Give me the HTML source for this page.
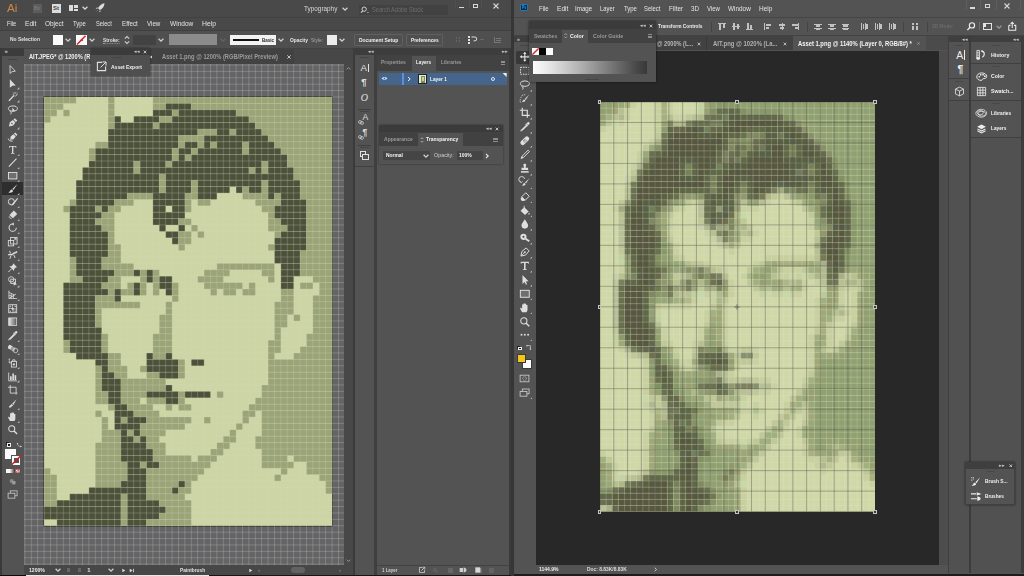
<!DOCTYPE html>
<html lang="en"><head><meta charset="utf-8"><title>Illustrator and Photoshop pixel art workspace</title>
<style>
html,body{margin:0;padding:0;background:#3a3a3a;}
#root{position:relative;width:1024px;height:576px;overflow:hidden;background:#494949;font-family:"Liberation Sans",sans-serif;}
.b{position:absolute;display:block;}
.ic{overflow:visible;}
.t{position:absolute;white-space:nowrap;transform-origin:0 50%;display:block;}
</style></head>
<body>
<div id="root">
<div class="b" style="left:0.00px;top:0.00px;width:511.00px;height:576.00px;background:#494949;"></div>
<div class="b" style="left:0.00px;top:17.00px;width:511.00px;height:0.80px;background:#424242;"></div>
<div class="b" style="left:0.00px;top:30.00px;width:511.00px;height:18.30px;background:#4f4f4f;"></div>
<div class="b" style="left:0.00px;top:29.60px;width:511.00px;height:0.80px;background:#404040;"></div>
<div class="b" style="left:0.00px;top:48.00px;width:511.00px;height:15.50px;background:#434343;"></div>
<span class="t" id="t1" style="left:7.00px;top:1.90px;font-size:11.5px;line-height:13.80px;color:#cf8844;font-weight:400;transform:scaleX(1.0200);">Ai</span>
<div class="b" style="left:32.50px;top:3.50px;width:9.00px;height:9.00px;background:#5c5c5c;"></div>
<span class="t" id="t2" style="left:34.00px;top:4.90px;font-size:5.5px;line-height:6.60px;color:#7a7a7a;font-weight:700;">Br</span>
<div class="b" style="left:51.50px;top:3.50px;width:9.00px;height:9.50px;background:#dcdcdc;"></div>
<span class="t" id="t3" style="left:53.00px;top:4.80px;font-size:6px;line-height:7.20px;color:#444;font-weight:700;">St</span>
<div class="b" style="left:69.00px;top:5.00px;width:3.80px;height:6.00px;background:#dcdcdc;"></div>
<div class="b" style="left:73.60px;top:5.00px;width:4.40px;height:2.50px;background:#dcdcdc;"></div>
<div class="b" style="left:73.60px;top:8.50px;width:4.40px;height:2.50px;background:#dcdcdc;"></div>
<svg class="b ic" style="left:78.50px;top:2.00px;color:#dcdcdc;" width="12.0" height="12.0" viewBox="0 0 12 12"><path d="M3.6 4.8 L6 7.2 L8.4 4.8" fill="none" stroke="currentColor" stroke-width="1.3"/></svg>
<svg class="b ic" style="left:94.00px;top:2.30px;color:#dcdcdc;" width="12" height="12" viewBox="0 0 12 12"><path d="M10.5 1.2 C7.5 1.5 5.2 3.6 4 6.2 L5.8 8 C8.4 6.8 10.4 4.5 10.5 1.2 Z M3.6 6.4 L1.6 6.9 L3.3 4.9 Z M5.6 8.4 L5.1 10.4 L7.1 8.7 Z M2.2 9.8 L3.6 8.2 L3.9 8.5 Z" fill="currentColor"/></svg>
<span class="t" id="t4" style="left:303.50px;top:4.20px;font-size:8px;line-height:9.60px;color:#d8d8d8;font-weight:400;transform:scaleX(0.7976);">Typography</span>
<svg class="b ic" style="left:338.50px;top:3.20px;color:#d0d0d0;" width="12.0" height="12.0" viewBox="0 0 12 12"><path d="M3.6 4.8 L6 7.2 L8.4 4.8" fill="none" stroke="currentColor" stroke-width="1.3"/></svg>
<div class="b" style="left:358.80px;top:5.00px;width:89.40px;height:9.60px;background:#424242;"></div>
<svg class="b ic" style="left:360.00px;top:4.60px;color:#d0d0d0;" width="10" height="10" viewBox="0 0 12 12"><circle cx="5" cy="5" r="2.6" fill="none" stroke="currentColor" stroke-width="1.2"/><path d="M3.2 7 L1.2 9.2" stroke="currentColor" stroke-width="1.3"/><path d="M8.3 8.3 l2.4 0 l-1.2 1.3z" fill="currentColor"/></svg>
<span class="t" id="t5" style="left:372.00px;top:5.10px;font-size:7.5px;line-height:9.00px;color:#6e6e6e;font-weight:400;transform:scaleX(0.7500);">Search Adobe Stock</span>
<div class="b" style="left:458.50px;top:7.00px;width:5.00px;height:1.20px;background:#d8d8d8;"></div>
<div class="b" style="left:473.00px;top:3.80px;width:5.20px;height:4.20px;background:transparent;border:1px solid #d8d8d8;box-sizing:border-box;"></div>
<svg class="b ic" style="left:489.60px;top:-0.40px;color:#d8d8d8;" width="12" height="12" viewBox="0 0 12 12"><path d="M3.5 3.5 L8.5 8.5 M8.5 3.5 L3.5 8.5" stroke="currentColor" stroke-width="1.1"/></svg>
<div class="b" style="left:454.50px;top:0.00px;width:0.70px;height:9.00px;background:#505050;"></div>
<div class="b" style="left:468.50px;top:0.00px;width:0.70px;height:9.00px;background:#505050;"></div>
<div class="b" style="left:481.00px;top:0.00px;width:0.70px;height:9.00px;background:#505050;"></div>
<span class="t" id="t6" style="left:6.50px;top:18.92px;font-size:7.8px;line-height:9.36px;color:#e4e4e4;font-weight:400;transform:scaleX(0.7308);">File</span>
<span class="t" id="t7" style="left:25.00px;top:18.92px;font-size:7.8px;line-height:9.36px;color:#e4e4e4;font-weight:400;transform:scaleX(0.8462);">Edit</span>
<span class="t" id="t8" style="left:45.00px;top:18.92px;font-size:7.8px;line-height:9.36px;color:#e4e4e4;font-weight:400;transform:scaleX(0.8261);">Object</span>
<span class="t" id="t9" style="left:73.00px;top:18.92px;font-size:7.8px;line-height:9.36px;color:#e4e4e4;font-weight:400;transform:scaleX(0.7647);">Type</span>
<span class="t" id="t10" style="left:96.00px;top:18.92px;font-size:7.8px;line-height:9.36px;color:#e4e4e4;font-weight:400;transform:scaleX(0.7273);">Select</span>
<span class="t" id="t11" style="left:121.60px;top:18.92px;font-size:7.8px;line-height:9.36px;color:#e4e4e4;font-weight:400;transform:scaleX(0.8000);">Effect</span>
<span class="t" id="t12" style="left:146.60px;top:18.92px;font-size:7.8px;line-height:9.36px;color:#e4e4e4;font-weight:400;transform:scaleX(0.7941);">View</span>
<span class="t" id="t13" style="left:169.80px;top:18.92px;font-size:7.8px;line-height:9.36px;color:#e4e4e4;font-weight:400;transform:scaleX(0.8393);">Window</span>
<span class="t" id="t14" style="left:202.00px;top:18.92px;font-size:7.8px;line-height:9.36px;color:#e4e4e4;font-weight:400;transform:scaleX(0.8750);">Help</span>
<span class="t" id="t15" style="left:10.00px;top:35.94px;font-size:5.6px;line-height:6.72px;color:#e0e0e0;font-weight:700;transform:scaleX(0.8824);">No Selection</span>
<div class="b" style="left:52.60px;top:34.70px;width:10.40px;height:10.30px;background:#fafafa;"></div>
<svg class="b ic" style="left:62.00px;top:34.00px;color:#d0d0d0;" width="12.0" height="12.0" viewBox="0 0 12 12"><path d="M3.6 4.8 L6 7.2 L8.4 4.8" fill="none" stroke="currentColor" stroke-width="1.3"/></svg>
<div class="b" style="left:76.00px;top:34.70px;width:10.50px;height:10.30px;background:#fafafa;"></div>
<svg class="b" style="left:76.00px;top:34.70px;" width="10.5" height="10.3" viewBox="0 0 10.5 10.3"><path d="M1 9.5 L9.5 0.8" stroke="#d0202a" stroke-width="1.5"/><path d="M3.8 5.2 l2.8 -1.5 l0.4 2.6 z" fill="#d0202a"/></svg>
<svg class="b ic" style="left:85.50px;top:34.00px;color:#d0d0d0;" width="12.0" height="12.0" viewBox="0 0 12 12"><path d="M3.6 4.8 L6 7.2 L8.4 4.8" fill="none" stroke="currentColor" stroke-width="1.3"/></svg>
<span class="t" id="t16" style="left:102.70px;top:36.52px;font-size:5.8px;line-height:6.96px;color:#e0e0e0;font-weight:700;transform:scaleX(0.8350);border-bottom:0.6px dotted #999;">Stroke:</span>
<svg class="b ic" style="left:121.30px;top:34.00px;color:#d0d0d0;" width="12" height="12" viewBox="0 0 12 12"><path d="M3.8 4.6 L6 2.6 L8.2 4.6 M3.8 7.4 L6 9.4 L8.2 7.4" fill="none" stroke="currentColor" stroke-width="1.1"/></svg>
<div class="b" style="left:133.20px;top:35.00px;width:22.50px;height:9.60px;background:#424242;"></div>
<svg class="b ic" style="left:154.50px;top:34.00px;color:#d0d0d0;" width="12.0" height="12.0" viewBox="0 0 12 12"><path d="M3.6 4.8 L6 7.2 L8.4 4.8" fill="none" stroke="currentColor" stroke-width="1.3"/></svg>
<div class="b" style="left:169.00px;top:34.20px;width:48.00px;height:11.00px;background:#8b8b8b;"></div>
<svg class="b ic" style="left:216.50px;top:34.00px;color:#626262;" width="12.0" height="12.0" viewBox="0 0 12 12"><path d="M3.6 4.8 L6 7.2 L8.4 4.8" fill="none" stroke="currentColor" stroke-width="1.3"/></svg>
<div class="b" style="left:230.20px;top:34.70px;width:46.00px;height:10.20px;background:#f2f2f2;"></div>
<div class="b" style="left:233.00px;top:38.90px;width:26.00px;height:1.90px;background:#111;"></div>
<span class="t" id="t17" style="left:261.70px;top:36.52px;font-size:5.8px;line-height:6.96px;color:#222;font-weight:700;transform:scaleX(0.7667);">Basic</span>
<svg class="b ic" style="left:275.30px;top:34.00px;color:#d0d0d0;" width="12.0" height="12.0" viewBox="0 0 12 12"><path d="M3.6 4.8 L6 7.2 L8.4 4.8" fill="none" stroke="currentColor" stroke-width="1.3"/></svg>
<span class="t" id="t18" style="left:289.90px;top:36.52px;font-size:5.8px;line-height:6.96px;color:#e6e6e6;font-weight:700;transform:scaleX(0.8429);">Opacity</span>
<span class="t" id="t19" style="left:310.70px;top:36.52px;font-size:5.8px;line-height:6.96px;color:#a8a8a8;font-weight:400;transform:scaleX(0.8200);">Style:</span>
<div class="b" style="left:326.90px;top:34.70px;width:10.40px;height:10.30px;background:#ececec;"></div>
<svg class="b ic" style="left:336.00px;top:34.00px;color:#d0d0d0;" width="12.0" height="12.0" viewBox="0 0 12 12"><path d="M3.6 4.8 L6 7.2 L8.4 4.8" fill="none" stroke="currentColor" stroke-width="1.3"/></svg>
<div class="b" style="left:353.50px;top:34.40px;width:49.00px;height:11.20px;background:transparent;border:0.8px solid #606060;box-sizing:border-box;border-radius:1px;"></div>
<span class="t" id="t20" style="left:358.80px;top:36.72px;font-size:5.8px;line-height:6.96px;color:#f0f0f0;font-weight:700;transform:scaleX(0.8522);">Document Setup</span>
<div class="b" style="left:406.30px;top:34.40px;width:37.20px;height:11.20px;background:transparent;border:0.8px solid #606060;box-sizing:border-box;border-radius:1px;"></div>
<span class="t" id="t21" style="left:410.90px;top:36.72px;font-size:5.8px;line-height:6.96px;color:#f0f0f0;font-weight:700;transform:scaleX(0.8364);">Preferences</span>
<div class="b" style="left:455.50px;top:37.00px;width:1.80px;height:1.80px;background:#666;"></div>
<div class="b" style="left:455.50px;top:40.20px;width:1.80px;height:1.80px;background:#666;"></div>
<div class="b" style="left:458.70px;top:37.00px;width:1.80px;height:1.80px;background:#666;"></div>
<div class="b" style="left:458.70px;top:40.20px;width:1.80px;height:1.80px;background:#666;"></div>
<div class="b" style="left:468.30px;top:36.00px;width:1.60px;height:1.60px;background:#e0e0e0;"></div>
<div class="b" style="left:468.30px;top:39.00px;width:1.60px;height:1.60px;background:#e0e0e0;"></div>
<div class="b" style="left:468.30px;top:42.00px;width:1.60px;height:1.60px;background:#e0e0e0;"></div>
<svg class="b ic" style="left:469.00px;top:34.30px;color:#e0e0e0;" width="10" height="10" viewBox="0 0 12 12"><path d="M3 3.6 H7 A2.3 2.3 0 0 1 7 8.2 H5.5" fill="none" stroke="currentColor" stroke-width="1.2"/></svg>
<div class="b" style="left:480.00px;top:39.00px;width:4.00px;height:0.80px;background:#686868;"></div>
<div class="b" style="left:494.30px;top:37.00px;width:0.90px;height:5.50px;background:#777;"></div>
<div class="b" style="left:496.00px;top:38.20px;width:4.50px;height:1.00px;background:#777;"></div>
<div class="b" style="left:496.00px;top:40.20px;width:4.50px;height:1.00px;background:#777;"></div>
<div class="b" style="left:494.30px;top:42.20px;width:6.50px;height:0.90px;background:#777;"></div>
<div class="b" style="left:0.00px;top:48.00px;width:24.00px;height:8.00px;background:#3c3c3c;"></div>
<span class="t" id="t22" style="left:4.60px;top:48.20px;font-size:6px;line-height:7.20px;color:#c8c8c8;font-weight:700;">&#187;</span>
<div class="b" style="left:24.40px;top:49.00px;width:66.40px;height:14.50px;background:#535353;"></div>
<span class="t" id="t23" style="left:29.40px;top:53.24px;font-size:6.6px;line-height:7.92px;color:#f0f0f0;font-weight:700;transform:scaleX(0.8592);">AIT.JPEG* @ 1200% (R</span>
<div class="b" style="left:155.40px;top:49.00px;width:138.80px;height:14.50px;background:#424242;"></div>
<span class="t" id="t24" style="left:161.60px;top:53.24px;font-size:6.6px;line-height:7.92px;color:#9c9c9c;font-weight:700;transform:scaleX(0.8722);">Asset 1.png @ 1200% (RGB/Pixel Preview)</span>
<svg class="b ic" style="left:283.60px;top:51.70px;color:#d0d0d0;" width="10" height="10" viewBox="0 0 12 12"><path d="M4 4 L8 8 M8 4 L4 8" stroke="currentColor" stroke-width="1.1"/></svg>
<div class="b" style="left:294.20px;top:49.00px;width:59.00px;height:14.50px;background:#474747;"></div>
<div class="b" style="left:0.00px;top:56.00px;width:24.00px;height:520.00px;background:#535353;"></div>
<div class="b" style="left:0.00px;top:48.00px;width:1.60px;height:528.00px;background:#3a3a3a;"></div>
<div class="b" style="left:8.00px;top:58.50px;width:9.00px;height:0.80px;background:#444;"></div>
<svg class="b" style="left:24.00px;top:63.60px;" width="320.4" height="501.6" viewBox="0 0 320.4 501.6"><defs><pattern id="gl" x="0.40" y="0.50" width="6.4" height="6.4" patternUnits="userSpaceOnUse"><path d="M0.5 0 V6.4 M0 0.5 H6.4" stroke="#d2d4c6" stroke-opacity="0.36" stroke-width="0.7" fill="none"/></pattern></defs><rect width="320.4" height="501.6" fill="#646467"/><rect x="19.20" y="32.10" width="289.80" height="430.60" fill="#2b2c22"/><g transform="translate(20.10,33.00)"><rect width="288.0" height="428.8" fill="#cdd5a4"/><rect x="0.00" y="0.00" width="32.05" height="6.45" fill="#9aa476"/><rect x="64.00" y="0.00" width="6.45" height="6.45" fill="#9aa476"/><rect x="108.80" y="0.00" width="179.25" height="6.45" fill="#9aa476"/><rect x="0.00" y="6.40" width="19.25" height="6.45" fill="#9aa476"/><rect x="64.00" y="6.40" width="6.45" height="6.45" fill="#9aa476"/><rect x="108.80" y="6.40" width="12.85" height="6.45" fill="#9aa476"/><rect x="121.60" y="6.40" width="25.65" height="6.45" fill="#4c513a"/><rect x="147.20" y="6.40" width="140.85" height="6.45" fill="#9aa476"/><rect x="0.00" y="12.80" width="12.85" height="6.45" fill="#9aa476"/><rect x="19.20" y="12.80" width="6.45" height="6.45" fill="#9aa476"/><rect x="64.00" y="12.80" width="6.45" height="6.45" fill="#9aa476"/><rect x="108.80" y="12.80" width="19.25" height="6.45" fill="#4c513a"/><rect x="128.00" y="12.80" width="6.45" height="6.45" fill="#9aa476"/><rect x="134.40" y="12.80" width="57.65" height="6.45" fill="#4c513a"/><rect x="192.00" y="12.80" width="96.05" height="6.45" fill="#9aa476"/><rect x="0.00" y="19.20" width="6.45" height="6.45" fill="#9aa476"/><rect x="64.00" y="19.20" width="6.45" height="6.45" fill="#9aa476"/><rect x="70.40" y="19.20" width="6.45" height="6.45" fill="#4c513a"/><rect x="89.60" y="19.20" width="25.65" height="6.45" fill="#4c513a"/><rect x="115.20" y="19.20" width="12.85" height="6.45" fill="#9aa476"/><rect x="128.00" y="19.20" width="76.85" height="6.45" fill="#4c513a"/><rect x="204.80" y="19.20" width="83.25" height="6.45" fill="#9aa476"/><rect x="64.00" y="25.60" width="6.45" height="6.45" fill="#9aa476"/><rect x="70.40" y="25.60" width="38.45" height="6.45" fill="#4c513a"/><rect x="108.80" y="25.60" width="6.45" height="6.45" fill="#9aa476"/><rect x="115.20" y="25.60" width="96.05" height="6.45" fill="#4c513a"/><rect x="211.20" y="25.60" width="76.85" height="6.45" fill="#9aa476"/><rect x="64.00" y="32.00" width="89.65" height="6.45" fill="#4c513a"/><rect x="153.60" y="32.00" width="19.25" height="6.45" fill="#9aa476"/><rect x="172.80" y="32.00" width="12.85" height="6.45" fill="#4c513a"/><rect x="185.60" y="32.00" width="6.45" height="6.45" fill="#9aa476"/><rect x="192.00" y="32.00" width="25.65" height="6.45" fill="#4c513a"/><rect x="217.60" y="32.00" width="70.45" height="6.45" fill="#9aa476"/><rect x="64.00" y="38.40" width="70.45" height="6.45" fill="#4c513a"/><rect x="134.40" y="38.40" width="25.65" height="6.45" fill="#9aa476"/><rect x="160.00" y="38.40" width="64.05" height="6.45" fill="#4c513a"/><rect x="224.00" y="38.40" width="64.05" height="6.45" fill="#9aa476"/><rect x="51.20" y="44.80" width="12.85" height="6.45" fill="#9aa476"/><rect x="64.00" y="44.80" width="70.45" height="6.45" fill="#4c513a"/><rect x="134.40" y="44.80" width="6.45" height="6.45" fill="#9aa476"/><rect x="140.80" y="44.80" width="12.85" height="6.45" fill="#4c513a"/><rect x="153.60" y="44.80" width="6.45" height="6.45" fill="#9aa476"/><rect x="160.00" y="44.80" width="6.45" height="6.45" fill="#4c513a"/><rect x="166.40" y="44.80" width="6.45" height="6.45" fill="#9aa476"/><rect x="172.80" y="44.80" width="25.65" height="6.45" fill="#4c513a"/><rect x="198.40" y="44.80" width="6.45" height="6.45" fill="#9aa476"/><rect x="204.80" y="44.80" width="25.65" height="6.45" fill="#4c513a"/><rect x="230.40" y="44.80" width="57.65" height="6.45" fill="#9aa476"/><rect x="44.80" y="51.20" width="6.45" height="6.45" fill="#9aa476"/><rect x="51.20" y="51.20" width="76.85" height="6.45" fill="#4c513a"/><rect x="128.00" y="51.20" width="6.45" height="6.45" fill="#9aa476"/><rect x="134.40" y="51.20" width="12.85" height="6.45" fill="#4c513a"/><rect x="147.20" y="51.20" width="6.45" height="6.45" fill="#9aa476"/><rect x="153.60" y="51.20" width="44.85" height="6.45" fill="#4c513a"/><rect x="198.40" y="51.20" width="6.45" height="6.45" fill="#9aa476"/><rect x="204.80" y="51.20" width="32.05" height="6.45" fill="#4c513a"/><rect x="236.80" y="51.20" width="51.25" height="6.45" fill="#9aa476"/><rect x="44.80" y="57.60" width="6.45" height="6.45" fill="#9aa476"/><rect x="51.20" y="57.60" width="76.85" height="6.45" fill="#4c513a"/><rect x="128.00" y="57.60" width="6.45" height="6.45" fill="#9aa476"/><rect x="134.40" y="57.60" width="6.45" height="6.45" fill="#4c513a"/><rect x="140.80" y="57.60" width="6.45" height="6.45" fill="#9aa476"/><rect x="147.20" y="57.60" width="96.05" height="6.45" fill="#4c513a"/><rect x="243.20" y="57.60" width="44.85" height="6.45" fill="#9aa476"/><rect x="44.80" y="64.00" width="44.85" height="6.45" fill="#4c513a"/><rect x="89.60" y="64.00" width="6.45" height="6.45" fill="#9aa476"/><rect x="96.00" y="64.00" width="25.65" height="6.45" fill="#4c513a"/><rect x="121.60" y="64.00" width="6.45" height="6.45" fill="#9aa476"/><rect x="128.00" y="64.00" width="89.65" height="6.45" fill="#4c513a"/><rect x="217.60" y="64.00" width="6.45" height="6.45" fill="#9aa476"/><rect x="224.00" y="64.00" width="19.25" height="6.45" fill="#4c513a"/><rect x="243.20" y="64.00" width="44.85" height="6.45" fill="#9aa476"/><rect x="38.40" y="70.40" width="51.25" height="6.45" fill="#4c513a"/><rect x="89.60" y="70.40" width="6.45" height="6.45" fill="#9aa476"/><rect x="96.00" y="70.40" width="108.85" height="6.45" fill="#4c513a"/><rect x="204.80" y="70.40" width="6.45" height="6.45" fill="#9aa476"/><rect x="211.20" y="70.40" width="6.45" height="6.45" fill="#4c513a"/><rect x="217.60" y="70.40" width="6.45" height="6.45" fill="#9aa476"/><rect x="224.00" y="70.40" width="25.65" height="6.45" fill="#4c513a"/><rect x="249.60" y="70.40" width="38.45" height="6.45" fill="#9aa476"/><rect x="38.40" y="76.80" width="76.85" height="6.45" fill="#4c513a"/><rect x="115.20" y="76.80" width="6.45" height="6.45" fill="#9aa476"/><rect x="121.60" y="76.80" width="128.05" height="6.45" fill="#4c513a"/><rect x="249.60" y="76.80" width="38.45" height="6.45" fill="#9aa476"/><rect x="32.00" y="83.20" width="83.25" height="6.45" fill="#4c513a"/><rect x="115.20" y="83.20" width="6.45" height="6.45" fill="#9aa476"/><rect x="121.60" y="83.20" width="25.65" height="6.45" fill="#4c513a"/><rect x="147.20" y="83.20" width="6.45" height="6.45" fill="#9aa476"/><rect x="153.60" y="83.20" width="64.05" height="6.45" fill="#4c513a"/><rect x="217.60" y="83.20" width="6.45" height="6.45" fill="#9aa476"/><rect x="224.00" y="83.20" width="32.05" height="6.45" fill="#4c513a"/><rect x="256.00" y="83.20" width="32.05" height="6.45" fill="#9aa476"/><rect x="32.00" y="89.60" width="83.25" height="6.45" fill="#4c513a"/><rect x="115.20" y="89.60" width="6.45" height="6.45" fill="#9aa476"/><rect x="121.60" y="89.60" width="25.65" height="6.45" fill="#4c513a"/><rect x="147.20" y="89.60" width="6.45" height="6.45" fill="#9aa476"/><rect x="153.60" y="89.60" width="32.05" height="6.45" fill="#4c513a"/><rect x="192.00" y="89.60" width="6.45" height="6.45" fill="#4c513a"/><rect x="198.40" y="89.60" width="6.45" height="6.45" fill="#9aa476"/><rect x="204.80" y="89.60" width="12.85" height="6.45" fill="#4c513a"/><rect x="217.60" y="89.60" width="6.45" height="6.45" fill="#9aa476"/><rect x="224.00" y="89.60" width="32.05" height="6.45" fill="#4c513a"/><rect x="256.00" y="89.60" width="32.05" height="6.45" fill="#9aa476"/><rect x="32.00" y="96.00" width="51.25" height="6.45" fill="#4c513a"/><rect x="83.20" y="96.00" width="25.65" height="6.45" fill="#9aa476"/><rect x="108.80" y="96.00" width="32.05" height="6.45" fill="#4c513a"/><rect x="140.80" y="96.00" width="12.85" height="6.45" fill="#9aa476"/><rect x="153.60" y="96.00" width="19.25" height="6.45" fill="#4c513a"/><rect x="198.40" y="96.00" width="25.65" height="6.45" fill="#9aa476"/><rect x="224.00" y="96.00" width="6.45" height="6.45" fill="#4c513a"/><rect x="230.40" y="96.00" width="6.45" height="6.45" fill="#9aa476"/><rect x="236.80" y="96.00" width="19.25" height="6.45" fill="#4c513a"/><rect x="256.00" y="96.00" width="32.05" height="6.45" fill="#9aa476"/><rect x="25.60" y="102.40" width="6.45" height="6.45" fill="#9aa476"/><rect x="32.00" y="102.40" width="38.45" height="6.45" fill="#4c513a"/><rect x="70.40" y="102.40" width="19.25" height="6.45" fill="#9aa476"/><rect x="108.80" y="102.40" width="32.05" height="6.45" fill="#4c513a"/><rect x="140.80" y="102.40" width="6.45" height="6.45" fill="#9aa476"/><rect x="153.60" y="102.40" width="12.85" height="6.45" fill="#9aa476"/><rect x="211.20" y="102.40" width="25.65" height="6.45" fill="#9aa476"/><rect x="236.80" y="102.40" width="25.65" height="6.45" fill="#4c513a"/><rect x="262.40" y="102.40" width="25.65" height="6.45" fill="#9aa476"/><rect x="19.20" y="108.80" width="6.45" height="6.45" fill="#9aa476"/><rect x="25.60" y="108.80" width="25.65" height="6.45" fill="#4c513a"/><rect x="51.20" y="108.80" width="6.45" height="6.45" fill="#9aa476"/><rect x="57.60" y="108.80" width="6.45" height="6.45" fill="#4c513a"/><rect x="64.00" y="108.80" width="12.85" height="6.45" fill="#9aa476"/><rect x="108.80" y="108.80" width="12.85" height="6.45" fill="#4c513a"/><rect x="128.00" y="108.80" width="12.85" height="6.45" fill="#4c513a"/><rect x="140.80" y="108.80" width="6.45" height="6.45" fill="#9aa476"/><rect x="217.60" y="108.80" width="12.85" height="6.45" fill="#9aa476"/><rect x="230.40" y="108.80" width="32.05" height="6.45" fill="#4c513a"/><rect x="262.40" y="108.80" width="25.65" height="6.45" fill="#9aa476"/><rect x="25.60" y="115.20" width="32.05" height="6.45" fill="#4c513a"/><rect x="57.60" y="115.20" width="12.85" height="6.45" fill="#9aa476"/><rect x="108.80" y="115.20" width="32.05" height="6.45" fill="#4c513a"/><rect x="224.00" y="115.20" width="6.45" height="6.45" fill="#9aa476"/><rect x="230.40" y="115.20" width="32.05" height="6.45" fill="#4c513a"/><rect x="262.40" y="115.20" width="25.65" height="6.45" fill="#9aa476"/><rect x="25.60" y="121.60" width="25.65" height="6.45" fill="#4c513a"/><rect x="51.20" y="121.60" width="19.25" height="6.45" fill="#9aa476"/><rect x="108.80" y="121.60" width="25.65" height="6.45" fill="#4c513a"/><rect x="134.40" y="121.60" width="12.85" height="6.45" fill="#9aa476"/><rect x="224.00" y="121.60" width="12.85" height="6.45" fill="#9aa476"/><rect x="236.80" y="121.60" width="25.65" height="6.45" fill="#4c513a"/><rect x="262.40" y="121.60" width="25.65" height="6.45" fill="#9aa476"/><rect x="25.60" y="128.00" width="32.05" height="6.45" fill="#4c513a"/><rect x="57.60" y="128.00" width="12.85" height="6.45" fill="#9aa476"/><rect x="115.20" y="128.00" width="6.45" height="6.45" fill="#4c513a"/><rect x="134.40" y="128.00" width="6.45" height="6.45" fill="#4c513a"/><rect x="147.20" y="128.00" width="6.45" height="6.45" fill="#9aa476"/><rect x="224.00" y="128.00" width="19.25" height="6.45" fill="#9aa476"/><rect x="243.20" y="128.00" width="19.25" height="6.45" fill="#4c513a"/><rect x="262.40" y="128.00" width="25.65" height="6.45" fill="#9aa476"/><rect x="25.60" y="134.40" width="38.45" height="6.45" fill="#4c513a"/><rect x="64.00" y="134.40" width="6.45" height="6.45" fill="#9aa476"/><rect x="121.60" y="134.40" width="12.85" height="6.45" fill="#4c513a"/><rect x="134.40" y="134.40" width="12.85" height="6.45" fill="#9aa476"/><rect x="153.60" y="134.40" width="6.45" height="6.45" fill="#9aa476"/><rect x="230.40" y="134.40" width="6.45" height="6.45" fill="#9aa476"/><rect x="236.80" y="134.40" width="25.65" height="6.45" fill="#4c513a"/><rect x="262.40" y="134.40" width="25.65" height="6.45" fill="#9aa476"/><rect x="25.60" y="140.80" width="38.45" height="6.45" fill="#4c513a"/><rect x="64.00" y="140.80" width="6.45" height="6.45" fill="#9aa476"/><rect x="128.00" y="140.80" width="6.45" height="6.45" fill="#4c513a"/><rect x="134.40" y="140.80" width="12.85" height="6.45" fill="#9aa476"/><rect x="230.40" y="140.80" width="32.05" height="6.45" fill="#4c513a"/><rect x="262.40" y="140.80" width="25.65" height="6.45" fill="#9aa476"/><rect x="25.60" y="147.20" width="38.45" height="6.45" fill="#4c513a"/><rect x="64.00" y="147.20" width="12.85" height="6.45" fill="#9aa476"/><rect x="134.40" y="147.20" width="6.45" height="6.45" fill="#9aa476"/><rect x="224.00" y="147.20" width="6.45" height="6.45" fill="#9aa476"/><rect x="230.40" y="147.20" width="32.05" height="6.45" fill="#4c513a"/><rect x="262.40" y="147.20" width="25.65" height="6.45" fill="#9aa476"/><rect x="25.60" y="153.60" width="38.45" height="6.45" fill="#4c513a"/><rect x="64.00" y="153.60" width="12.85" height="6.45" fill="#9aa476"/><rect x="230.40" y="153.60" width="25.65" height="6.45" fill="#4c513a"/><rect x="256.00" y="153.60" width="32.05" height="6.45" fill="#9aa476"/><rect x="25.60" y="160.00" width="6.45" height="6.45" fill="#9aa476"/><rect x="32.00" y="160.00" width="25.65" height="6.45" fill="#4c513a"/><rect x="57.60" y="160.00" width="19.25" height="6.45" fill="#9aa476"/><rect x="230.40" y="160.00" width="25.65" height="6.45" fill="#4c513a"/><rect x="256.00" y="160.00" width="32.05" height="6.45" fill="#9aa476"/><rect x="25.60" y="166.40" width="6.45" height="6.45" fill="#9aa476"/><rect x="32.00" y="166.40" width="25.65" height="6.45" fill="#4c513a"/><rect x="57.60" y="166.40" width="32.05" height="6.45" fill="#9aa476"/><rect x="172.80" y="166.40" width="57.65" height="6.45" fill="#9aa476"/><rect x="236.80" y="166.40" width="19.25" height="6.45" fill="#4c513a"/><rect x="256.00" y="166.40" width="32.05" height="6.45" fill="#9aa476"/><rect x="25.60" y="172.80" width="6.45" height="6.45" fill="#9aa476"/><rect x="32.00" y="172.80" width="38.45" height="6.45" fill="#4c513a"/><rect x="70.40" y="172.80" width="19.25" height="6.45" fill="#9aa476"/><rect x="89.60" y="172.80" width="6.45" height="6.45" fill="#4c513a"/><rect x="96.00" y="172.80" width="6.45" height="6.45" fill="#9aa476"/><rect x="102.40" y="172.80" width="6.45" height="6.45" fill="#4c513a"/><rect x="108.80" y="172.80" width="6.45" height="6.45" fill="#9aa476"/><rect x="160.00" y="172.80" width="25.65" height="6.45" fill="#9aa476"/><rect x="217.60" y="172.80" width="12.85" height="6.45" fill="#9aa476"/><rect x="236.80" y="172.80" width="19.25" height="6.45" fill="#4c513a"/><rect x="256.00" y="172.80" width="32.05" height="6.45" fill="#9aa476"/><rect x="25.60" y="179.20" width="12.85" height="6.45" fill="#9aa476"/><rect x="38.40" y="179.20" width="25.65" height="6.45" fill="#4c513a"/><rect x="64.00" y="179.20" width="12.85" height="6.45" fill="#9aa476"/><rect x="96.00" y="179.20" width="6.45" height="6.45" fill="#9aa476"/><rect x="102.40" y="179.20" width="6.45" height="6.45" fill="#4c513a"/><rect x="108.80" y="179.20" width="6.45" height="6.45" fill="#9aa476"/><rect x="115.20" y="179.20" width="12.85" height="6.45" fill="#4c513a"/><rect x="153.60" y="179.20" width="25.65" height="6.45" fill="#9aa476"/><rect x="224.00" y="179.20" width="6.45" height="6.45" fill="#9aa476"/><rect x="236.80" y="179.20" width="12.85" height="6.45" fill="#4c513a"/><rect x="268.80" y="179.20" width="19.25" height="6.45" fill="#9aa476"/><rect x="19.20" y="185.60" width="38.45" height="6.45" fill="#4c513a"/><rect x="57.60" y="185.60" width="19.25" height="6.45" fill="#9aa476"/><rect x="83.20" y="185.60" width="6.45" height="6.45" fill="#9aa476"/><rect x="89.60" y="185.60" width="6.45" height="6.45" fill="#4c513a"/><rect x="96.00" y="185.60" width="6.45" height="6.45" fill="#9aa476"/><rect x="108.80" y="185.60" width="6.45" height="6.45" fill="#9aa476"/><rect x="115.20" y="185.60" width="12.85" height="6.45" fill="#4c513a"/><rect x="128.00" y="185.60" width="6.45" height="6.45" fill="#9aa476"/><rect x="160.00" y="185.60" width="38.45" height="6.45" fill="#9aa476"/><rect x="204.80" y="185.60" width="6.45" height="6.45" fill="#9aa476"/><rect x="236.80" y="185.60" width="12.85" height="6.45" fill="#4c513a"/><rect x="256.00" y="185.60" width="12.85" height="6.45" fill="#9aa476"/><rect x="275.20" y="185.60" width="12.85" height="6.45" fill="#9aa476"/><rect x="19.20" y="192.00" width="44.85" height="6.45" fill="#4c513a"/><rect x="64.00" y="192.00" width="6.45" height="6.45" fill="#9aa476"/><rect x="70.40" y="192.00" width="6.45" height="6.45" fill="#4c513a"/><rect x="76.80" y="192.00" width="12.85" height="6.45" fill="#9aa476"/><rect x="89.60" y="192.00" width="6.45" height="6.45" fill="#4c513a"/><rect x="96.00" y="192.00" width="6.45" height="6.45" fill="#9aa476"/><rect x="108.80" y="192.00" width="6.45" height="6.45" fill="#9aa476"/><rect x="121.60" y="192.00" width="6.45" height="6.45" fill="#4c513a"/><rect x="128.00" y="192.00" width="6.45" height="6.45" fill="#9aa476"/><rect x="166.40" y="192.00" width="6.45" height="6.45" fill="#9aa476"/><rect x="179.20" y="192.00" width="12.85" height="6.45" fill="#9aa476"/><rect x="198.40" y="192.00" width="12.85" height="6.45" fill="#9aa476"/><rect x="236.80" y="192.00" width="12.85" height="6.45" fill="#9aa476"/><rect x="275.20" y="192.00" width="12.85" height="6.45" fill="#9aa476"/><rect x="19.20" y="198.40" width="32.05" height="6.45" fill="#4c513a"/><rect x="51.20" y="198.40" width="19.25" height="6.45" fill="#9aa476"/><rect x="70.40" y="198.40" width="6.45" height="6.45" fill="#4c513a"/><rect x="128.00" y="198.40" width="6.45" height="6.45" fill="#9aa476"/><rect x="236.80" y="198.40" width="12.85" height="6.45" fill="#9aa476"/><rect x="268.80" y="198.40" width="19.25" height="6.45" fill="#9aa476"/><rect x="19.20" y="204.80" width="32.05" height="6.45" fill="#4c513a"/><rect x="51.20" y="204.80" width="44.85" height="6.45" fill="#9aa476"/><rect x="121.60" y="204.80" width="6.45" height="6.45" fill="#9aa476"/><rect x="230.40" y="204.80" width="19.25" height="6.45" fill="#9aa476"/><rect x="268.80" y="204.80" width="19.25" height="6.45" fill="#9aa476"/><rect x="19.20" y="211.20" width="32.05" height="6.45" fill="#4c513a"/><rect x="51.20" y="211.20" width="6.45" height="6.45" fill="#9aa476"/><rect x="121.60" y="211.20" width="6.45" height="6.45" fill="#9aa476"/><rect x="230.40" y="211.20" width="19.25" height="6.45" fill="#9aa476"/><rect x="268.80" y="211.20" width="19.25" height="6.45" fill="#9aa476"/><rect x="19.20" y="217.60" width="32.05" height="6.45" fill="#4c513a"/><rect x="51.20" y="217.60" width="6.45" height="6.45" fill="#9aa476"/><rect x="115.20" y="217.60" width="12.85" height="6.45" fill="#9aa476"/><rect x="230.40" y="217.60" width="12.85" height="6.45" fill="#9aa476"/><rect x="249.60" y="217.60" width="6.45" height="6.45" fill="#9aa476"/><rect x="268.80" y="217.60" width="19.25" height="6.45" fill="#9aa476"/><rect x="19.20" y="224.00" width="32.05" height="6.45" fill="#4c513a"/><rect x="51.20" y="224.00" width="6.45" height="6.45" fill="#9aa476"/><rect x="115.20" y="224.00" width="12.85" height="6.45" fill="#9aa476"/><rect x="230.40" y="224.00" width="12.85" height="6.45" fill="#9aa476"/><rect x="268.80" y="224.00" width="19.25" height="6.45" fill="#9aa476"/><rect x="19.20" y="230.40" width="38.45" height="6.45" fill="#4c513a"/><rect x="115.20" y="230.40" width="12.85" height="6.45" fill="#9aa476"/><rect x="230.40" y="230.40" width="6.45" height="6.45" fill="#9aa476"/><rect x="268.80" y="230.40" width="19.25" height="6.45" fill="#9aa476"/><rect x="19.20" y="236.80" width="38.45" height="6.45" fill="#4c513a"/><rect x="57.60" y="236.80" width="6.45" height="6.45" fill="#9aa476"/><rect x="108.80" y="236.80" width="19.25" height="6.45" fill="#9aa476"/><rect x="230.40" y="236.80" width="6.45" height="6.45" fill="#9aa476"/><rect x="262.40" y="236.80" width="25.65" height="6.45" fill="#9aa476"/><rect x="19.20" y="243.20" width="6.45" height="6.45" fill="#9aa476"/><rect x="25.60" y="243.20" width="32.05" height="6.45" fill="#4c513a"/><rect x="57.60" y="243.20" width="6.45" height="6.45" fill="#9aa476"/><rect x="108.80" y="243.20" width="19.25" height="6.45" fill="#9aa476"/><rect x="224.00" y="243.20" width="12.85" height="6.45" fill="#9aa476"/><rect x="262.40" y="243.20" width="25.65" height="6.45" fill="#9aa476"/><rect x="19.20" y="249.60" width="6.45" height="6.45" fill="#9aa476"/><rect x="25.60" y="249.60" width="32.05" height="6.45" fill="#4c513a"/><rect x="57.60" y="249.60" width="6.45" height="6.45" fill="#9aa476"/><rect x="108.80" y="249.60" width="19.25" height="6.45" fill="#9aa476"/><rect x="224.00" y="249.60" width="12.85" height="6.45" fill="#9aa476"/><rect x="256.00" y="249.60" width="32.05" height="6.45" fill="#9aa476"/><rect x="32.00" y="256.00" width="32.05" height="6.45" fill="#4c513a"/><rect x="64.00" y="256.00" width="12.85" height="6.45" fill="#9aa476"/><rect x="102.40" y="256.00" width="6.45" height="6.45" fill="#4c513a"/><rect x="108.80" y="256.00" width="12.85" height="6.45" fill="#9aa476"/><rect x="121.60" y="256.00" width="6.45" height="6.45" fill="#4c513a"/><rect x="224.00" y="256.00" width="6.45" height="6.45" fill="#9aa476"/><rect x="249.60" y="256.00" width="38.45" height="6.45" fill="#9aa476"/><rect x="51.20" y="262.40" width="12.85" height="6.45" fill="#4c513a"/><rect x="64.00" y="262.40" width="12.85" height="6.45" fill="#9aa476"/><rect x="102.40" y="262.40" width="32.05" height="6.45" fill="#4c513a"/><rect x="134.40" y="262.40" width="6.45" height="6.45" fill="#9aa476"/><rect x="147.20" y="262.40" width="12.85" height="6.45" fill="#4c513a"/><rect x="224.00" y="262.40" width="64.05" height="6.45" fill="#9aa476"/><rect x="51.20" y="268.80" width="6.45" height="6.45" fill="#9aa476"/><rect x="57.60" y="268.80" width="6.45" height="6.45" fill="#4c513a"/><rect x="64.00" y="268.80" width="19.25" height="6.45" fill="#9aa476"/><rect x="96.00" y="268.80" width="6.45" height="6.45" fill="#9aa476"/><rect x="102.40" y="268.80" width="32.05" height="6.45" fill="#4c513a"/><rect x="134.40" y="268.80" width="6.45" height="6.45" fill="#9aa476"/><rect x="224.00" y="268.80" width="64.05" height="6.45" fill="#9aa476"/><rect x="51.20" y="275.20" width="6.45" height="6.45" fill="#9aa476"/><rect x="57.60" y="275.20" width="12.85" height="6.45" fill="#4c513a"/><rect x="70.40" y="275.20" width="12.85" height="6.45" fill="#9aa476"/><rect x="102.40" y="275.20" width="12.85" height="6.45" fill="#9aa476"/><rect x="115.20" y="275.20" width="19.25" height="6.45" fill="#4c513a"/><rect x="134.40" y="275.20" width="6.45" height="6.45" fill="#9aa476"/><rect x="224.00" y="275.20" width="64.05" height="6.45" fill="#9aa476"/><rect x="51.20" y="281.60" width="6.45" height="6.45" fill="#9aa476"/><rect x="57.60" y="281.60" width="19.25" height="6.45" fill="#4c513a"/><rect x="76.80" y="281.60" width="44.85" height="6.45" fill="#9aa476"/><rect x="224.00" y="281.60" width="64.05" height="6.45" fill="#9aa476"/><rect x="51.20" y="288.00" width="6.45" height="6.45" fill="#9aa476"/><rect x="57.60" y="288.00" width="19.25" height="6.45" fill="#4c513a"/><rect x="76.80" y="288.00" width="44.85" height="6.45" fill="#9aa476"/><rect x="121.60" y="288.00" width="6.45" height="6.45" fill="#4c513a"/><rect x="217.60" y="288.00" width="70.45" height="6.45" fill="#9aa476"/><rect x="51.20" y="294.40" width="12.85" height="6.45" fill="#9aa476"/><rect x="64.00" y="294.40" width="12.85" height="6.45" fill="#4c513a"/><rect x="76.80" y="294.40" width="25.65" height="6.45" fill="#9aa476"/><rect x="102.40" y="294.40" width="32.05" height="6.45" fill="#4c513a"/><rect x="134.40" y="294.40" width="6.45" height="6.45" fill="#9aa476"/><rect x="140.80" y="294.40" width="25.65" height="6.45" fill="#4c513a"/><rect x="172.80" y="294.40" width="6.45" height="6.45" fill="#9aa476"/><rect x="217.60" y="294.40" width="70.45" height="6.45" fill="#9aa476"/><rect x="51.20" y="300.80" width="12.85" height="6.45" fill="#9aa476"/><rect x="64.00" y="300.80" width="12.85" height="6.45" fill="#4c513a"/><rect x="76.80" y="300.80" width="19.25" height="6.45" fill="#9aa476"/><rect x="102.40" y="300.80" width="19.25" height="6.45" fill="#9aa476"/><rect x="121.60" y="300.80" width="12.85" height="6.45" fill="#4c513a"/><rect x="134.40" y="300.80" width="6.45" height="6.45" fill="#9aa476"/><rect x="211.20" y="300.80" width="76.85" height="6.45" fill="#9aa476"/><rect x="64.00" y="307.20" width="6.45" height="6.45" fill="#9aa476"/><rect x="70.40" y="307.20" width="12.85" height="6.45" fill="#4c513a"/><rect x="83.20" y="307.20" width="25.65" height="6.45" fill="#9aa476"/><rect x="121.60" y="307.20" width="6.45" height="6.45" fill="#9aa476"/><rect x="134.40" y="307.20" width="12.85" height="6.45" fill="#9aa476"/><rect x="204.80" y="307.20" width="83.25" height="6.45" fill="#9aa476"/><rect x="51.20" y="313.60" width="6.45" height="6.45" fill="#9aa476"/><rect x="70.40" y="313.60" width="19.25" height="6.45" fill="#4c513a"/><rect x="89.60" y="313.60" width="25.65" height="6.45" fill="#9aa476"/><rect x="198.40" y="313.60" width="12.85" height="6.45" fill="#9aa476"/><rect x="217.60" y="313.60" width="70.45" height="6.45" fill="#9aa476"/><rect x="57.60" y="320.00" width="6.45" height="6.45" fill="#9aa476"/><rect x="70.40" y="320.00" width="6.45" height="6.45" fill="#4c513a"/><rect x="76.80" y="320.00" width="6.45" height="6.45" fill="#9aa476"/><rect x="83.20" y="320.00" width="19.25" height="6.45" fill="#4c513a"/><rect x="102.40" y="320.00" width="44.85" height="6.45" fill="#9aa476"/><rect x="160.00" y="320.00" width="6.45" height="6.45" fill="#9aa476"/><rect x="198.40" y="320.00" width="6.45" height="6.45" fill="#9aa476"/><rect x="217.60" y="320.00" width="70.45" height="6.45" fill="#9aa476"/><rect x="57.60" y="326.40" width="6.45" height="6.45" fill="#9aa476"/><rect x="70.40" y="326.40" width="25.65" height="6.45" fill="#4c513a"/><rect x="96.00" y="326.40" width="44.85" height="6.45" fill="#9aa476"/><rect x="192.00" y="326.40" width="6.45" height="6.45" fill="#9aa476"/><rect x="217.60" y="326.40" width="70.45" height="6.45" fill="#9aa476"/><rect x="57.60" y="332.80" width="19.25" height="6.45" fill="#9aa476"/><rect x="76.80" y="332.80" width="6.45" height="6.45" fill="#4c513a"/><rect x="83.20" y="332.80" width="6.45" height="6.45" fill="#9aa476"/><rect x="89.60" y="332.80" width="6.45" height="6.45" fill="#4c513a"/><rect x="96.00" y="332.80" width="25.65" height="6.45" fill="#9aa476"/><rect x="185.60" y="332.80" width="6.45" height="6.45" fill="#9aa476"/><rect x="217.60" y="332.80" width="70.45" height="6.45" fill="#9aa476"/><rect x="57.60" y="339.20" width="19.25" height="6.45" fill="#9aa476"/><rect x="76.80" y="339.20" width="12.85" height="6.45" fill="#4c513a"/><rect x="89.60" y="339.20" width="6.45" height="6.45" fill="#9aa476"/><rect x="96.00" y="339.20" width="6.45" height="6.45" fill="#4c513a"/><rect x="102.40" y="339.20" width="12.85" height="6.45" fill="#9aa476"/><rect x="179.20" y="339.20" width="12.85" height="6.45" fill="#9aa476"/><rect x="211.20" y="339.20" width="76.85" height="6.45" fill="#9aa476"/><rect x="51.20" y="345.60" width="25.65" height="6.45" fill="#9aa476"/><rect x="76.80" y="345.60" width="25.65" height="6.45" fill="#4c513a"/><rect x="102.40" y="345.60" width="19.25" height="6.45" fill="#9aa476"/><rect x="172.80" y="345.60" width="12.85" height="6.45" fill="#9aa476"/><rect x="211.20" y="345.60" width="76.85" height="6.45" fill="#9aa476"/><rect x="51.20" y="352.00" width="25.65" height="6.45" fill="#9aa476"/><rect x="76.80" y="352.00" width="32.05" height="6.45" fill="#4c513a"/><rect x="108.80" y="352.00" width="12.85" height="6.45" fill="#9aa476"/><rect x="166.40" y="352.00" width="12.85" height="6.45" fill="#9aa476"/><rect x="217.60" y="352.00" width="70.45" height="6.45" fill="#9aa476"/><rect x="51.20" y="358.40" width="25.65" height="6.45" fill="#9aa476"/><rect x="76.80" y="358.40" width="32.05" height="6.45" fill="#4c513a"/><rect x="108.80" y="358.40" width="38.45" height="6.45" fill="#9aa476"/><rect x="153.60" y="358.40" width="19.25" height="6.45" fill="#9aa476"/><rect x="217.60" y="358.40" width="25.65" height="6.45" fill="#9aa476"/><rect x="249.60" y="358.40" width="38.45" height="6.45" fill="#9aa476"/><rect x="51.20" y="364.80" width="32.05" height="6.45" fill="#9aa476"/><rect x="83.20" y="364.80" width="12.85" height="6.45" fill="#4c513a"/><rect x="96.00" y="364.80" width="6.45" height="6.45" fill="#9aa476"/><rect x="102.40" y="364.80" width="12.85" height="6.45" fill="#4c513a"/><rect x="115.20" y="364.80" width="51.25" height="6.45" fill="#9aa476"/><rect x="217.60" y="364.80" width="32.05" height="6.45" fill="#9aa476"/><rect x="262.40" y="364.80" width="25.65" height="6.45" fill="#9aa476"/><rect x="0.00" y="371.20" width="6.45" height="6.45" fill="#9aa476"/><rect x="51.20" y="371.20" width="32.05" height="6.45" fill="#9aa476"/><rect x="83.20" y="371.20" width="19.25" height="6.45" fill="#4c513a"/><rect x="102.40" y="371.20" width="57.65" height="6.45" fill="#9aa476"/><rect x="236.80" y="371.20" width="6.45" height="6.45" fill="#9aa476"/><rect x="262.40" y="371.20" width="25.65" height="6.45" fill="#9aa476"/><rect x="0.00" y="377.60" width="12.85" height="6.45" fill="#9aa476"/><rect x="51.20" y="377.60" width="32.05" height="6.45" fill="#9aa476"/><rect x="83.20" y="377.60" width="19.25" height="6.45" fill="#4c513a"/><rect x="102.40" y="377.60" width="51.25" height="6.45" fill="#9aa476"/><rect x="230.40" y="377.60" width="6.45" height="6.45" fill="#9aa476"/><rect x="275.20" y="377.60" width="12.85" height="6.45" fill="#9aa476"/><rect x="0.00" y="384.00" width="12.85" height="6.45" fill="#9aa476"/><rect x="51.20" y="384.00" width="25.65" height="6.45" fill="#9aa476"/><rect x="76.80" y="384.00" width="25.65" height="6.45" fill="#4c513a"/><rect x="102.40" y="384.00" width="32.05" height="6.45" fill="#9aa476"/><rect x="134.40" y="384.00" width="6.45" height="6.45" fill="#4c513a"/><rect x="140.80" y="384.00" width="6.45" height="6.45" fill="#9aa476"/><rect x="281.60" y="384.00" width="6.45" height="6.45" fill="#9aa476"/><rect x="0.00" y="390.40" width="12.85" height="6.45" fill="#9aa476"/><rect x="44.80" y="390.40" width="57.65" height="6.45" fill="#4c513a"/><rect x="102.40" y="390.40" width="25.65" height="6.45" fill="#9aa476"/><rect x="128.00" y="390.40" width="6.45" height="6.45" fill="#4c513a"/><rect x="134.40" y="390.40" width="12.85" height="6.45" fill="#9aa476"/><rect x="281.60" y="390.40" width="6.45" height="6.45" fill="#9aa476"/><rect x="0.00" y="396.80" width="12.85" height="6.45" fill="#9aa476"/><rect x="25.60" y="396.80" width="51.25" height="6.45" fill="#4c513a"/><rect x="76.80" y="396.80" width="6.45" height="6.45" fill="#9aa476"/><rect x="83.20" y="396.80" width="19.25" height="6.45" fill="#4c513a"/><rect x="102.40" y="396.80" width="38.45" height="6.45" fill="#9aa476"/><rect x="0.00" y="403.20" width="12.85" height="6.45" fill="#9aa476"/><rect x="12.80" y="403.20" width="64.05" height="6.45" fill="#4c513a"/><rect x="76.80" y="403.20" width="6.45" height="6.45" fill="#9aa476"/><rect x="83.20" y="403.20" width="32.05" height="6.45" fill="#4c513a"/><rect x="115.20" y="403.20" width="32.05" height="6.45" fill="#9aa476"/><rect x="0.00" y="409.60" width="76.85" height="6.45" fill="#4c513a"/><rect x="76.80" y="409.60" width="6.45" height="6.45" fill="#9aa476"/><rect x="83.20" y="409.60" width="38.45" height="6.45" fill="#4c513a"/><rect x="121.60" y="409.60" width="25.65" height="6.45" fill="#9aa476"/><rect x="0.00" y="416.00" width="76.85" height="6.45" fill="#4c513a"/><rect x="76.80" y="416.00" width="6.45" height="6.45" fill="#9aa476"/><rect x="83.20" y="416.00" width="32.05" height="6.45" fill="#4c513a"/><rect x="115.20" y="416.00" width="32.05" height="6.45" fill="#9aa476"/><rect x="12.80" y="422.40" width="64.05" height="6.45" fill="#4c513a"/><rect x="76.80" y="422.40" width="6.45" height="6.45" fill="#9aa476"/><rect x="83.20" y="422.40" width="19.25" height="6.45" fill="#4c513a"/><rect x="102.40" y="422.40" width="44.85" height="6.45" fill="#9aa476"/></g><rect width="320.4" height="501.6" fill="url(#gl)"/></svg>
<div class="b" style="left:344.40px;top:63.60px;width:8.40px;height:501.60px;background:#484848;"></div>
<svg class="b ic" style="left:344.30px;top:63.80px;color:#9a9a9a;" width="9" height="9" viewBox="0 0 12 12"><path d="M3.5 7 L6 4.8 L8.5 7" fill="none" stroke="currentColor" stroke-width="1.2"/></svg>
<svg class="b ic" style="left:344.30px;top:555.50px;color:#9a9a9a;" width="9" height="9" viewBox="0 0 12 12"><path d="M3.5 5 L6 7.2 L8.5 5" fill="none" stroke="currentColor" stroke-width="1.2"/></svg>
<div class="b" style="left:24.00px;top:565.20px;width:329.00px;height:9.40px;background:#474747;"></div>
<span class="t" id="t25" style="left:28.50px;top:566.84px;font-size:5.6px;line-height:6.72px;color:#e8e8e8;font-weight:700;transform:scaleX(0.9118);">1200%</span>
<svg class="b ic" style="left:52.00px;top:564.20px;color:#d0d0d0;" width="12.0" height="12.0" viewBox="0 0 12 12"><path d="M3.6 4.8 L6 7.2 L8.4 4.8" fill="none" stroke="currentColor" stroke-width="1.3"/></svg>
<div class="b" style="left:67.00px;top:568.00px;width:3.00px;height:4.00px;background:#666;"></div>
<div class="b" style="left:78.00px;top:568.00px;width:3.00px;height:4.00px;background:#666;"></div>
<span class="t" id="t26" style="left:87.30px;top:566.84px;font-size:5.6px;line-height:6.72px;color:#e0e0e0;font-weight:700;">1</span>
<svg class="b ic" style="left:105.00px;top:564.20px;color:#d0d0d0;" width="12.0" height="12.0" viewBox="0 0 12 12"><path d="M3.6 4.8 L6 7.2 L8.4 4.8" fill="none" stroke="currentColor" stroke-width="1.3"/></svg>
<svg class="b ic" style="left:119.50px;top:566.70px;color:#e0e0e0;" width="7" height="7" viewBox="0 0 12 12"><path d="M4 3 L9 6 L4 9z" fill="currentColor"/></svg>
<svg class="b ic" style="left:127.50px;top:566.70px;color:#e0e0e0;" width="7" height="7" viewBox="0 0 12 12"><path d="M3 3 L8 6 L3 9z M8.6 3 h1.4 v6 h-1.4z" fill="currentColor"/></svg>
<span class="t" id="t27" style="left:180.00px;top:566.94px;font-size:5.6px;line-height:6.72px;color:#e0e0e0;font-weight:700;transform:scaleX(0.8621);">Paintbrush</span>
<svg class="b ic" style="left:246.50px;top:566.70px;color:#e0e0e0;" width="7" height="7" viewBox="0 0 12 12"><path d="M4 3 L9 6 L4 9z" fill="currentColor"/></svg>
<span class="t" id="t28" style="left:258.00px;top:566.60px;font-size:6px;line-height:7.20px;color:#8a8a8a;font-weight:700;">&#8249;</span>
<div class="b" style="left:291.00px;top:567.20px;width:14.00px;height:5.60px;background:#626262;border-radius:3px;"></div>
<span class="t" id="t29" style="left:339.00px;top:566.60px;font-size:6px;line-height:7.20px;color:#8a8a8a;font-weight:700;">&#8250;</span>
<div class="b" style="left:90.60px;top:48.00px;width:59.40px;height:28.40px;background:#4f4f4f;box-shadow:0 0 2px rgba(0,0,0,.5);"></div>
<div class="b" style="left:90.60px;top:48.00px;width:59.40px;height:7.30px;background:#3b3b3b;"></div>
<span class="t" id="t30" style="left:134.00px;top:48.90px;font-size:4.5px;line-height:5.40px;color:#c8c8c8;font-weight:400;">&#9666;&#9666;</span>
<svg class="b ic" style="left:141.40px;top:47.80px;color:#c8c8c8;" width="8" height="8" viewBox="0 0 12 12"><path d="M4 4 L8 8 M8 4 L4 8" stroke="currentColor" stroke-width="1.4"/></svg>
<div class="b" style="left:113.00px;top:57.30px;width:9.00px;height:0.80px;background:#444;"></div>
<svg class="b ic" style="left:95.10px;top:60.10px;color:#e0e0e0;" width="13" height="13" viewBox="0 0 12 12"><path d="M6.5 2.2 H2.2 V9.8 H9.8 V6" fill="none" stroke="currentColor" stroke-width="1"/><path d="M5.2 6.8 L10 2 M6.8 1.8 H10.2 V5.2" fill="none" stroke="currentColor" stroke-width="0.9"/></svg>
<span class="t" id="t31" style="left:110.80px;top:63.72px;font-size:5.8px;line-height:6.96px;color:#f0f0f0;font-weight:700;transform:scaleX(0.8611);">Asset Export</span>
<svg class="b ic" style="left:148.30px;top:53.50px;color:#d8d8d8;" width="6" height="6" viewBox="0 0 12 12"><path d="M8 3 L4 6 L8 9z" fill="currentColor"/></svg>
<div class="b" style="left:352.80px;top:48.00px;width:158.20px;height:528.00px;background:#484848;"></div>
<div class="b" style="left:352.80px;top:48.00px;width:158.20px;height:7.40px;background:#3d3d3d;"></div>
<span class="t" id="t32" style="left:367.80px;top:49.10px;font-size:4.5px;line-height:5.40px;color:#c8c8c8;font-weight:400;">&#9666;&#9666;</span>
<span class="t" id="t33" style="left:501.80px;top:49.10px;font-size:4.5px;line-height:5.40px;color:#c8c8c8;font-weight:400;">&#9656;&#9656;</span>
<div class="b" style="left:352.80px;top:55.40px;width:2.00px;height:520.00px;background:#3a3a3a;"></div>
<div class="b" style="left:354.80px;top:55.40px;width:19.60px;height:520.00px;background:#535353;"></div>
<div class="b" style="left:374.40px;top:55.40px;width:2.60px;height:520.00px;background:#3f3f3f;"></div>
<div class="b" style="left:360.00px;top:57.30px;width:9.00px;height:0.80px;background:#444;"></div>
<span class="t" id="t34" style="left:360.60px;top:62.14px;font-size:9.6px;line-height:11.52px;color:#e0e0e0;font-weight:400;">A</span>
<div class="b" style="left:367.60px;top:63.60px;width:0.80px;height:8.80px;background:#e0e0e0;"></div>
<span class="t" id="t35" style="left:361.20px;top:76.24px;font-size:9.6px;line-height:11.52px;color:#e0e0e0;font-weight:700;">&#182;</span>
<span class="t" id="t36" style="left:360.80px;top:91.80px;font-size:10px;line-height:12.00px;color:#e0e0e0;font-weight:400;font-style:italic;font-family:'Liberation Serif',serif;">O</span>
<div class="b" style="left:358.00px;top:108.60px;width:13.00px;height:0.80px;background:#3f3f3f;"></div>
<div class="b" style="left:360.00px;top:111.00px;width:9.00px;height:0.80px;background:#444;"></div>
<span class="t" id="t37" style="left:362.40px;top:112.10px;font-size:8.5px;line-height:10.20px;color:#e0e0e0;font-weight:400;">A</span>
<svg class="b ic" style="left:357.30px;top:117.60px;color:#e0e0e0;" width="8" height="8" viewBox="0 0 12 12"><circle cx="4.5" cy="6" r="2.2" fill="none" stroke="currentColor" stroke-width="1"/><circle cx="7.5" cy="7.5" r="2.2" fill="none" stroke="currentColor" stroke-width="1"/></svg>
<span class="t" id="t38" style="left:362.40px;top:126.70px;font-size:8.5px;line-height:10.20px;color:#e0e0e0;font-weight:700;">&#182;</span>
<svg class="b ic" style="left:357.30px;top:132.60px;color:#e0e0e0;" width="8" height="8" viewBox="0 0 12 12"><circle cx="4.5" cy="6" r="2.2" fill="none" stroke="currentColor" stroke-width="1"/><circle cx="7.5" cy="7.5" r="2.2" fill="none" stroke="currentColor" stroke-width="1"/></svg>
<div class="b" style="left:358.00px;top:144.60px;width:13.00px;height:0.80px;background:#3f3f3f;"></div>
<div class="b" style="left:360.00px;top:147.00px;width:9.00px;height:0.80px;background:#444;"></div>
<div class="b" style="left:359.60px;top:151.30px;width:6.20px;height:6.20px;background:transparent;border:0.9px solid #e0e0e0;box-sizing:border-box;"></div>
<div class="b" style="left:362.40px;top:154.20px;width:6.60px;height:6.00px;background:#535353;border:0.9px solid #e0e0e0;box-sizing:border-box;"></div>
<div class="b" style="left:354.80px;top:165.50px;width:19.60px;height:0.80px;background:#404040;"></div>
<div class="b" style="left:377.00px;top:55.40px;width:132.00px;height:520.00px;background:#535353;"></div>
<div class="b" style="left:377.00px;top:55.40px;width:132.00px;height:15.20px;background:#424242;"></div>
<div class="b" style="left:509.00px;top:48.00px;width:2.00px;height:528.00px;background:#3a3a3a;"></div>
<span class="t" id="t39" style="left:381.00px;top:59.32px;font-size:5.8px;line-height:6.96px;color:#9a9a9a;font-weight:700;transform:scaleX(0.8621);">Properties</span>
<div class="b" style="left:411.90px;top:56.20px;width:23.70px;height:14.40px;background:#535353;"></div>
<span class="t" id="t40" style="left:416.00px;top:59.32px;font-size:5.8px;line-height:6.96px;color:#f4f4f4;font-weight:700;transform:scaleX(0.8000);">Layers</span>
<span class="t" id="t41" style="left:440.60px;top:59.32px;font-size:5.8px;line-height:6.96px;color:#9a9a9a;font-weight:700;transform:scaleX(0.8400);">Libraries</span>
<div class="b" style="left:501.00px;top:60.80px;width:4.40px;height:0.90px;background:#8e8e8e;"></div>
<div class="b" style="left:501.00px;top:62.40px;width:4.40px;height:0.90px;background:#8e8e8e;"></div>
<div class="b" style="left:501.00px;top:64.00px;width:4.40px;height:0.90px;background:#8e8e8e;"></div>
<div class="b" style="left:378.60px;top:72.60px;width:128.40px;height:12.40px;background:#46658c;"></div>
<svg class="b ic" style="left:380.90px;top:75.10px;color:#e8f0ff;" width="7" height="7" viewBox="0 0 12 12"><path d="M1 6 Q6 1.2 11 6 Q6 10.8 1 6z" fill="currentColor"/><circle cx="6" cy="6" r="1.7" fill="#46658c"/></svg>
<div class="b" style="left:402.30px;top:72.60px;width:1.30px;height:12.40px;background:#5a8fe6;"></div>
<svg class="b ic" style="left:405.20px;top:74.80px;color:#e8f0ff;" width="8" height="8" viewBox="0 0 12 12"><path d="M4.5 3 L7.8 6 L4.5 9" fill="none" stroke="currentColor" stroke-width="1.5"/></svg>
<div class="b" style="left:418.00px;top:74.40px;width:9.20px;height:9.20px;background:#e8ecc8;border:0.6px solid #222;box-sizing:border-box;"></div>
<div class="b" style="left:420.60px;top:75.60px;width:4.20px;height:7.20px;background:#7f8a5c;"></div>
<div class="b" style="left:421.80px;top:77.40px;width:2.00px;height:3.40px;background:#c9d29d;"></div>
<span class="t" id="t42" style="left:430.40px;top:75.52px;font-size:5.8px;line-height:6.96px;color:#f4f4f4;font-weight:700;transform:scaleX(0.8300);">Layer 1</span>
<div class="b" style="left:490.60px;top:76.80px;width:4.20px;height:4.20px;background:transparent;border:0.8px solid #dfe8f5;border-radius:50%;box-sizing:border-box;"></div>
<svg class="b" style="left:502.40px;top:72.60px;" width="4.6" height="4.6" viewBox="0 0 4.6 4.6"><path d="M0.6 0 H4.6 V4 Z" fill="#f4f4f4"/></svg>
<div class="b" style="left:377.00px;top:565.00px;width:132.00px;height:0.80px;background:#424242;"></div>
<span class="t" id="t43" style="left:381.50px;top:567.36px;font-size:5.4px;line-height:6.48px;color:#d0d0d0;font-weight:700;transform:scaleX(0.8158);">1 Layer</span>
<svg class="b ic" style="left:418.00px;top:566.30px;color:#d0d0d0;" width="8" height="8" viewBox="0 0 12 12"><path d="M6.5 2.2 H2.2 V9.8 H9.8 V6" fill="none" stroke="currentColor" stroke-width="1.2"/><path d="M5.2 6.8 L10 2 M6.8 1.8 H10.2 V5.2" fill="none" stroke="currentColor" stroke-width="1.2"/></svg>
<svg class="b ic" style="left:431.50px;top:566.80px;color:#6c6c6c;" width="7" height="7" viewBox="0 0 12 12"><circle cx="5" cy="5" r="2.6" fill="none" stroke="currentColor" stroke-width="1.3"/><path d="M7 7 L10 10" stroke="currentColor" stroke-width="1.3"/></svg>
<div class="b" style="left:448.00px;top:568.00px;width:4.50px;height:4.50px;background:#666;"></div>
<svg class="b ic" style="left:459.00px;top:566.30px;color:#d0d0d0;" width="8" height="8" viewBox="0 0 12 12"><path d="M1 3 h5 v6 h-5z M7 2 l4 2 v4 l-4 2z" fill="currentColor"/></svg>
<svg class="b ic" style="left:473.50px;top:566.30px;color:#d8d8d8;" width="8" height="8" viewBox="0 0 12 12"><path d="M2 2 h7 v8 h-7z" fill="currentColor"/><path d="M9 2 l2 2 v6 h-2z" fill="#999"/></svg>
<div class="b" style="left:489.00px;top:568.00px;width:5.00px;height:5.00px;background:#646464;"></div>
<div class="b" style="left:379.00px;top:125.00px;width:123.50px;height:39.00px;background:#535353;box-shadow:0 0 2px rgba(0,0,0,.45);"></div>
<div class="b" style="left:379.00px;top:125.00px;width:123.50px;height:7.20px;background:#3b3b3b;"></div>
<div class="b" style="left:379.00px;top:132.20px;width:123.50px;height:13.80px;background:#414141;"></div>
<span class="t" id="t44" style="left:486.20px;top:125.90px;font-size:4.5px;line-height:5.40px;color:#c8c8c8;font-weight:400;">&#9666;&#9666;</span>
<svg class="b ic" style="left:493.30px;top:124.80px;color:#c8c8c8;" width="8" height="8" viewBox="0 0 12 12"><path d="M4 4 L8 8 M8 4 L4 8" stroke="currentColor" stroke-width="1.4"/></svg>
<span class="t" id="t45" style="left:384.30px;top:136.22px;font-size:5.8px;line-height:6.96px;color:#9a9a9a;font-weight:700;transform:scaleX(0.8667);">Appearance</span>
<div class="b" style="left:418.00px;top:133.00px;width:45.40px;height:13.00px;background:#535353;"></div>
<svg class="b ic" style="left:418.00px;top:135.50px;color:#c8c8c8;" width="8" height="8" viewBox="0 0 12 12"><path d="M4 4.6 L6 2.6 L8 4.6 M4 7.4 L6 9.4 L8 7.4" fill="none" stroke="currentColor" stroke-width="1.1"/></svg>
<span class="t" id="t46" style="left:426.40px;top:136.22px;font-size:5.8px;line-height:6.96px;color:#f4f4f4;font-weight:700;transform:scaleX(0.8553);">Transparency</span>
<div class="b" style="left:493.40px;top:137.60px;width:4.40px;height:0.90px;background:#8e8e8e;"></div>
<div class="b" style="left:493.40px;top:139.20px;width:4.40px;height:0.90px;background:#8e8e8e;"></div>
<div class="b" style="left:493.40px;top:140.80px;width:4.40px;height:0.90px;background:#8e8e8e;"></div>
<div class="b" style="left:383.00px;top:151.00px;width:47.00px;height:9.40px;background:#454545;"></div>
<span class="t" id="t47" style="left:385.50px;top:152.32px;font-size:5.8px;line-height:6.96px;color:#f4f4f4;font-weight:700;transform:scaleX(0.8500);">Normal</span>
<svg class="b ic" style="left:420.00px;top:149.80px;color:#d0d0d0;" width="12.0" height="12.0" viewBox="0 0 12 12"><path d="M3.6 4.8 L6 7.2 L8.4 4.8" fill="none" stroke="currentColor" stroke-width="1.3"/></svg>
<span class="t" id="t48" style="left:434.00px;top:152.42px;font-size:5.8px;line-height:6.96px;color:#d0d0d0;font-weight:400;transform:scaleX(0.9286);">Opacity:</span>
<div class="b" style="left:456.60px;top:151.00px;width:26.00px;height:9.40px;background:#454545;"></div>
<span class="t" id="t49" style="left:458.60px;top:152.44px;font-size:5.6px;line-height:6.72px;color:#f0f0f0;font-weight:700;transform:scaleX(0.8929);">100%</span>
<svg class="b ic" style="left:483.20px;top:151.80px;color:#e8e8e8;" width="8" height="8" viewBox="0 0 12 12"><path d="M4.5 3 L7.8 6 L4.5 9" fill="none" stroke="currentColor" stroke-width="1.6"/></svg>
<div class="b" style="left:510.60px;top:0.00px;width:3.00px;height:576.00px;background:#363636;"></div>
<div class="b" style="left:513.60px;top:0.00px;width:510.40px;height:576.00px;background:#535353;"></div>
<div class="b" style="left:513.60px;top:17.00px;width:510.40px;height:0.80px;background:#454545;"></div>
<div class="b" style="left:513.60px;top:35.40px;width:510.40px;height:0.80px;background:#424242;"></div>
<div class="b" style="left:519.80px;top:3.70px;width:8.30px;height:7.80px;background:#0a2a42;border:0.8px solid #2178b4;box-sizing:border-box;border-radius:1px;"></div>
<span class="t" id="t50" style="left:521.60px;top:5.14px;font-size:4.6px;line-height:5.52px;color:#2f9ae6;font-weight:700;transform:scaleX(0.7667);">Ps</span>
<span class="t" id="t51" style="left:539.00px;top:4.12px;font-size:7.8px;line-height:9.36px;color:#e4e4e4;font-weight:400;transform:scaleX(0.7692);">File</span>
<span class="t" id="t52" style="left:556.50px;top:4.12px;font-size:7.8px;line-height:9.36px;color:#e4e4e4;font-weight:400;transform:scaleX(0.8462);">Edit</span>
<span class="t" id="t53" style="left:574.90px;top:4.12px;font-size:7.8px;line-height:9.36px;color:#e4e4e4;font-weight:400;transform:scaleX(0.7955);">Image</span>
<span class="t" id="t54" style="left:600.00px;top:4.12px;font-size:7.8px;line-height:9.36px;color:#e4e4e4;font-weight:400;transform:scaleX(0.7500);">Layer</span>
<span class="t" id="t55" style="left:623.50px;top:4.12px;font-size:7.8px;line-height:9.36px;color:#e4e4e4;font-weight:400;transform:scaleX(0.7647);">Type</span>
<span class="t" id="t56" style="left:644.40px;top:4.12px;font-size:7.8px;line-height:9.36px;color:#e4e4e4;font-weight:400;transform:scaleX(0.7500);">Select</span>
<span class="t" id="t57" style="left:669.00px;top:4.12px;font-size:7.8px;line-height:9.36px;color:#e4e4e4;font-weight:400;transform:scaleX(0.8118);">Filter</span>
<span class="t" id="t58" style="left:690.90px;top:4.12px;font-size:7.8px;line-height:9.36px;color:#e4e4e4;font-weight:400;transform:scaleX(0.8000);">3D</span>
<span class="t" id="t59" style="left:706.90px;top:4.12px;font-size:7.8px;line-height:9.36px;color:#e4e4e4;font-weight:400;transform:scaleX(0.7647);">View</span>
<span class="t" id="t60" style="left:727.70px;top:4.12px;font-size:7.8px;line-height:9.36px;color:#e4e4e4;font-weight:400;transform:scaleX(0.8214);">Window</span>
<span class="t" id="t61" style="left:758.70px;top:4.12px;font-size:7.8px;line-height:9.36px;color:#e4e4e4;font-weight:400;transform:scaleX(0.8375);">Help</span>
<div class="b" style="left:969.50px;top:7.40px;width:5.50px;height:1.20px;background:#d8d8d8;"></div>
<div class="b" style="left:985.00px;top:3.80px;width:5.40px;height:4.40px;background:transparent;border:1px solid #d8d8d8;box-sizing:border-box;"></div>
<svg class="b ic" style="left:1001.30px;top:-0.20px;color:#d8d8d8;" width="12" height="12" viewBox="0 0 12 12"><path d="M3.5 3.5 L8.5 8.5 M8.5 3.5 L3.5 8.5" stroke="currentColor" stroke-width="1.1"/></svg>
<div class="b" style="left:966.00px;top:0.00px;width:0.70px;height:10.00px;background:#606060;"></div>
<div class="b" style="left:980.00px;top:0.00px;width:0.70px;height:10.00px;background:#606060;"></div>
<div class="b" style="left:995.50px;top:0.00px;width:0.70px;height:10.00px;background:#606060;"></div>
<div class="b" style="left:1020.00px;top:0.00px;width:0.70px;height:10.00px;background:#606060;"></div>
<span class="t" id="t62" style="left:658.00px;top:23.12px;font-size:5.8px;line-height:6.96px;color:#ededed;font-weight:700;transform:scaleX(0.8278);">Transform Controls</span>
<div class="b" style="left:710.60px;top:21.50px;width:0.70px;height:10.00px;background:#454545;"></div>
<div class="b" style="left:807.00px;top:21.50px;width:0.70px;height:10.00px;background:#454545;"></div>
<div class="b" style="left:903.00px;top:21.50px;width:0.70px;height:10.00px;background:#454545;"></div>
<div class="b" style="left:927.00px;top:21.50px;width:0.70px;height:10.00px;background:#454545;"></div>
<div class="b" style="left:718.40px;top:22.80px;width:7.20px;height:0.90px;background:#c2c2c2;"></div>
<div class="b" style="left:719.40px;top:24.20px;width:1.90px;height:5.60px;background:#c2c2c2;"></div>
<div class="b" style="left:722.70px;top:24.20px;width:1.90px;height:3.40px;background:#c2c2c2;"></div>
<div class="b" style="left:732.40px;top:26.00px;width:7.20px;height:0.90px;background:#c2c2c2;"></div>
<div class="b" style="left:733.40px;top:23.20px;width:1.90px;height:6.60px;background:#c2c2c2;"></div>
<div class="b" style="left:736.70px;top:24.40px;width:1.90px;height:4.20px;background:#c2c2c2;"></div>
<div class="b" style="left:746.00px;top:29.20px;width:7.20px;height:0.90px;background:#c2c2c2;"></div>
<div class="b" style="left:747.00px;top:23.20px;width:1.90px;height:5.60px;background:#c2c2c2;"></div>
<div class="b" style="left:750.30px;top:25.40px;width:1.90px;height:3.40px;background:#c2c2c2;"></div>
<div class="b" style="left:764.40px;top:22.80px;width:0.90px;height:7.20px;background:#c2c2c2;"></div>
<div class="b" style="left:765.80px;top:23.80px;width:5.60px;height:1.90px;background:#c2c2c2;"></div>
<div class="b" style="left:765.80px;top:27.10px;width:3.40px;height:1.90px;background:#c2c2c2;"></div>
<div class="b" style="left:781.60px;top:22.80px;width:0.90px;height:7.20px;background:#c2c2c2;"></div>
<div class="b" style="left:778.80px;top:23.80px;width:6.60px;height:1.90px;background:#c2c2c2;"></div>
<div class="b" style="left:780.00px;top:27.10px;width:4.20px;height:1.90px;background:#c2c2c2;"></div>
<div class="b" style="left:798.40px;top:22.80px;width:0.90px;height:7.20px;background:#c2c2c2;"></div>
<div class="b" style="left:792.40px;top:23.80px;width:5.60px;height:1.90px;background:#c2c2c2;"></div>
<div class="b" style="left:794.60px;top:27.10px;width:3.40px;height:1.90px;background:#c2c2c2;"></div>
<div class="b" style="left:814.40px;top:23.80px;width:7.20px;height:0.80px;background:#c2c2c2;"></div>
<div class="b" style="left:815.60px;top:25.10px;width:4.80px;height:1.60px;background:#c2c2c2;"></div>
<div class="b" style="left:814.40px;top:27.60px;width:7.20px;height:0.80px;background:#c2c2c2;"></div>
<div class="b" style="left:815.60px;top:28.80px;width:4.80px;height:1.40px;background:#c2c2c2;"></div>
<div class="b" style="left:828.40px;top:23.80px;width:7.20px;height:0.80px;background:#c2c2c2;"></div>
<div class="b" style="left:829.60px;top:25.10px;width:4.80px;height:1.60px;background:#c2c2c2;"></div>
<div class="b" style="left:828.40px;top:27.60px;width:7.20px;height:0.80px;background:#c2c2c2;"></div>
<div class="b" style="left:829.60px;top:28.80px;width:4.80px;height:1.40px;background:#c2c2c2;"></div>
<div class="b" style="left:842.00px;top:23.80px;width:7.20px;height:0.80px;background:#c2c2c2;"></div>
<div class="b" style="left:843.20px;top:25.10px;width:4.80px;height:1.60px;background:#c2c2c2;"></div>
<div class="b" style="left:842.00px;top:27.60px;width:7.20px;height:0.80px;background:#c2c2c2;"></div>
<div class="b" style="left:843.20px;top:28.80px;width:4.80px;height:1.40px;background:#c2c2c2;"></div>
<div class="b" style="left:861.40px;top:22.80px;width:0.80px;height:7.20px;background:#c2c2c2;"></div>
<div class="b" style="left:862.70px;top:24.00px;width:1.60px;height:4.80px;background:#c2c2c2;"></div>
<div class="b" style="left:865.20px;top:22.80px;width:0.80px;height:7.20px;background:#c2c2c2;"></div>
<div class="b" style="left:866.40px;top:24.00px;width:1.40px;height:4.80px;background:#c2c2c2;"></div>
<div class="b" style="left:875.40px;top:22.80px;width:0.80px;height:7.20px;background:#c2c2c2;"></div>
<div class="b" style="left:876.70px;top:24.00px;width:1.60px;height:4.80px;background:#c2c2c2;"></div>
<div class="b" style="left:879.20px;top:22.80px;width:0.80px;height:7.20px;background:#c2c2c2;"></div>
<div class="b" style="left:880.40px;top:24.00px;width:1.40px;height:4.80px;background:#c2c2c2;"></div>
<div class="b" style="left:889.40px;top:22.80px;width:0.80px;height:7.20px;background:#c2c2c2;"></div>
<div class="b" style="left:890.70px;top:24.00px;width:1.60px;height:4.80px;background:#c2c2c2;"></div>
<div class="b" style="left:893.20px;top:22.80px;width:0.80px;height:7.20px;background:#c2c2c2;"></div>
<div class="b" style="left:894.40px;top:24.00px;width:1.40px;height:4.80px;background:#c2c2c2;"></div>
<div class="b" style="left:912.40px;top:22.80px;width:2.00px;height:7.20px;background:#c2c2c2;"></div>
<div class="b" style="left:915.80px;top:22.80px;width:2.00px;height:7.20px;background:#c2c2c2;"></div>
<div class="b" style="left:912.40px;top:24.80px;width:5.40px;height:0.70px;background:#535353;"></div>
<span class="t" id="t63" style="left:932.30px;top:23.12px;font-size:5.8px;line-height:6.96px;color:#6c6c6c;font-weight:700;transform:scaleX(0.8269);">3D Mode:</span>
<svg class="b ic" style="left:966.05px;top:21.15px;color:#f0f0f0;" width="10.5" height="10.5" viewBox="0 0 12 12"><circle cx="6.8" cy="5" r="3" fill="none" stroke="currentColor" stroke-width="1.3"/><path d="M4.6 7.2 L1.6 10.4" stroke="currentColor" stroke-width="1.5"/></svg>
<div class="b" style="left:979.40px;top:22.00px;width:0.80px;height:8.00px;background:#8a8a8a;opacity:.5"></div>
<div class="b" style="left:982.60px;top:22.60px;width:9.40px;height:7.40px;background:transparent;border:1px solid #e4e4e4;box-sizing:border-box;"></div>
<div class="b" style="left:984.00px;top:24.20px;width:2.00px;height:3.20px;background:#e4e4e4;"></div>
<svg class="b ic" style="left:992.50px;top:20.60px;color:#9a9a9a;" width="12.0" height="12.0" viewBox="0 0 12 12"><path d="M3.6 4.8 L6 7.2 L8.4 4.8" fill="none" stroke="currentColor" stroke-width="1.3"/></svg>
<svg class="b ic" style="left:1006.55px;top:20.75px;color:#ececec;" width="10.5" height="10.5" viewBox="0 0 12 12"><path d="M2 5 V10.5 H10 V5 H8 M4 5 H2" fill="none" stroke="currentColor" stroke-width="1.2"/><path d="M6 8 V1.6 M4.2 3.2 L6 1.4 L7.8 3.2" fill="none" stroke="currentColor" stroke-width="1.2"/></svg>
<div class="b" style="left:513.60px;top:36.20px;width:425.40px;height:14.30px;background:#424242;"></div>
<span class="t" id="t64" style="left:657.00px;top:40.16px;font-size:6.4px;line-height:7.68px;color:#b8b8b8;font-weight:700;transform:scaleX(0.8780);">@ 2000% (L...</span>
<svg class="b ic" style="left:695.40px;top:39.60px;color:#d0d0d0;" width="8" height="8" viewBox="0 0 12 12"><path d="M4 4 L8 8 M8 4 L4 8" stroke="currentColor" stroke-width="1.2"/></svg>
<div class="b" style="left:706.00px;top:37.00px;width:0.70px;height:13.00px;background:#383838;"></div>
<span class="t" id="t65" style="left:712.50px;top:40.16px;font-size:6.4px;line-height:7.68px;color:#b0b0b0;font-weight:700;transform:scaleX(0.9275);">AIT.png @ 1020% (La...</span>
<svg class="b ic" style="left:780.60px;top:39.60px;color:#d0d0d0;" width="8" height="8" viewBox="0 0 12 12"><path d="M4 4 L8 8 M8 4 L4 8" stroke="currentColor" stroke-width="1.2"/></svg>
<div class="b" style="left:793.00px;top:36.20px;width:132.60px;height:14.30px;background:#535353;"></div>
<span class="t" id="t66" style="left:798.00px;top:40.16px;font-size:6.4px;line-height:7.68px;color:#f4f4f4;font-weight:700;transform:scaleX(0.9120);">Asset 1.png @ 1140% (Layer 0, RGB/8#) *</span>
<svg class="b ic" style="left:915.30px;top:40.10px;color:#a8a8a8;" width="7" height="7" viewBox="0 0 12 12"><path d="M4 4 L8 8 M8 4 L4 8" stroke="currentColor" stroke-width="1.2"/></svg>
<div class="b" style="left:925.60px;top:36.20px;width:23.40px;height:14.30px;background:#4b4b4b;"></div>
<div class="b" style="left:535.80px;top:50.50px;width:402.90px;height:514.70px;background:#282828;"></div>
<div class="b" style="left:938.70px;top:50.50px;width:10.30px;height:514.70px;background:#4d4d4d;"></div>
<svg class="b" style="left:599.60px;top:102.30px;overflow:hidden;" width="275.5" height="409.6" viewBox="0 0 275.5 409.6"><defs><filter id="bl" x="-5%" y="-5%" width="110%" height="110%"><feGaussianBlur stdDeviation="0.55"/></filter><clipPath id="cp"><rect width="275.5" height="409.6"/></clipPath></defs><g clip-path="url(#cp)"><rect x="-10" y="-10" width="295.5" height="429.6" fill="#d0d8a8"/><g filter="url(#bl)"><rect x="-10" y="-10" width="295.5" height="429.6" fill="#d0d8a8"/><rect x="0.00" y="0.00" width="12.29" height="6.16" fill="#90a070"/><rect x="12.24" y="0.00" width="6.17" height="6.16" fill="#98a070"/><rect x="18.37" y="0.00" width="6.17" height="6.16" fill="#98a878"/><rect x="24.49" y="0.00" width="6.17" height="6.16" fill="#a8b080"/><rect x="30.61" y="0.00" width="6.17" height="6.16" fill="#c8d0a0"/><rect x="55.10" y="0.00" width="6.17" height="6.16" fill="#c8d0a0"/><rect x="61.22" y="0.00" width="6.17" height="6.16" fill="#a8b080"/><rect x="67.34" y="0.00" width="6.17" height="6.16" fill="#c8d0a0"/><rect x="97.96" y="0.00" width="6.17" height="6.16" fill="#c8d0a0"/><rect x="104.08" y="0.00" width="6.17" height="6.16" fill="#a0a878"/><rect x="110.20" y="0.00" width="6.17" height="6.16" fill="#90a070"/><rect x="116.32" y="0.00" width="24.54" height="6.16" fill="#889868"/><rect x="140.81" y="0.00" width="134.74" height="6.16" fill="#90a070"/><rect x="0.00" y="6.11" width="6.17" height="6.16" fill="#90a070"/><rect x="6.12" y="6.11" width="6.17" height="6.16" fill="#98a070"/><rect x="12.24" y="6.11" width="6.17" height="6.16" fill="#a0a878"/><rect x="18.37" y="6.11" width="6.17" height="6.16" fill="#b8c090"/><rect x="24.49" y="6.11" width="6.17" height="6.16" fill="#c8d0a0"/><rect x="55.10" y="6.11" width="6.17" height="6.16" fill="#c8d0a0"/><rect x="61.22" y="6.11" width="6.17" height="6.16" fill="#a8b080"/><rect x="67.34" y="6.11" width="6.17" height="6.16" fill="#c8d0a0"/><rect x="97.96" y="6.11" width="6.17" height="6.16" fill="#c0d0a0"/><rect x="104.08" y="6.11" width="6.17" height="6.16" fill="#98a070"/><rect x="110.20" y="6.11" width="6.17" height="6.16" fill="#809060"/><rect x="116.32" y="6.11" width="12.29" height="6.16" fill="#687050"/><rect x="128.57" y="6.11" width="6.17" height="6.16" fill="#606848"/><rect x="134.69" y="6.11" width="6.17" height="6.16" fill="#687050"/><rect x="140.81" y="6.11" width="6.17" height="6.16" fill="#809060"/><rect x="146.93" y="6.11" width="36.78" height="6.16" fill="#889868"/><rect x="183.67" y="6.11" width="91.88" height="6.16" fill="#90a070"/><rect x="0.00" y="12.23" width="6.17" height="6.16" fill="#98a070"/><rect x="6.12" y="12.23" width="6.17" height="6.16" fill="#a0b080"/><rect x="12.24" y="12.23" width="6.17" height="6.16" fill="#b8c090"/><rect x="18.37" y="12.23" width="6.17" height="6.16" fill="#b0b890"/><rect x="24.49" y="12.23" width="6.17" height="6.16" fill="#c8d0a0"/><rect x="55.10" y="12.23" width="6.17" height="6.16" fill="#c8d0a0"/><rect x="61.22" y="12.23" width="6.17" height="6.16" fill="#a0b080"/><rect x="67.34" y="12.23" width="6.17" height="6.16" fill="#b8c090"/><rect x="73.47" y="12.23" width="12.29" height="6.16" fill="#c8d0a8"/><rect x="85.71" y="12.23" width="6.17" height="6.16" fill="#c0c898"/><rect x="91.83" y="12.23" width="6.17" height="6.16" fill="#b8c098"/><rect x="97.96" y="12.23" width="6.17" height="6.16" fill="#b0b888"/><rect x="104.08" y="12.23" width="6.17" height="6.16" fill="#707858"/><rect x="110.20" y="12.23" width="12.29" height="6.16" fill="#687050"/><rect x="122.44" y="12.23" width="6.17" height="6.16" fill="#708058"/><rect x="128.57" y="12.23" width="6.17" height="6.16" fill="#586048"/><rect x="134.69" y="12.23" width="6.17" height="6.16" fill="#586040"/><rect x="140.81" y="12.23" width="36.78" height="6.16" fill="#606848"/><rect x="177.54" y="12.23" width="6.17" height="6.16" fill="#687050"/><rect x="183.67" y="12.23" width="6.17" height="6.16" fill="#809060"/><rect x="189.79" y="12.23" width="6.17" height="6.16" fill="#889868"/><rect x="195.91" y="12.23" width="79.64" height="6.16" fill="#90a070"/><rect x="0.00" y="18.34" width="6.17" height="6.16" fill="#a0b080"/><rect x="6.12" y="18.34" width="6.17" height="6.16" fill="#c0c898"/><rect x="12.24" y="18.34" width="6.17" height="6.16" fill="#c8d8a8"/><rect x="18.37" y="18.34" width="6.17" height="6.16" fill="#c8d0a0"/><rect x="55.10" y="18.34" width="6.17" height="6.16" fill="#c8d0a0"/><rect x="61.22" y="18.34" width="6.17" height="6.16" fill="#98a070"/><rect x="67.34" y="18.34" width="6.17" height="6.16" fill="#808860"/><rect x="73.47" y="18.34" width="12.29" height="6.16" fill="#b0b888"/><rect x="85.71" y="18.34" width="6.17" height="6.16" fill="#788060"/><rect x="91.83" y="18.34" width="18.42" height="6.16" fill="#687050"/><rect x="110.20" y="18.34" width="12.29" height="6.16" fill="#788060"/><rect x="122.44" y="18.34" width="6.17" height="6.16" fill="#606848"/><rect x="128.57" y="18.34" width="6.17" height="6.16" fill="#586040"/><rect x="134.69" y="18.34" width="42.91" height="6.16" fill="#585840"/><rect x="177.54" y="18.34" width="6.17" height="6.16" fill="#586040"/><rect x="183.67" y="18.34" width="6.17" height="6.16" fill="#606848"/><rect x="189.79" y="18.34" width="6.17" height="6.16" fill="#687050"/><rect x="195.91" y="18.34" width="6.17" height="6.16" fill="#889068"/><rect x="202.03" y="18.34" width="73.52" height="6.16" fill="#90a070"/><rect x="0.00" y="24.45" width="6.17" height="6.16" fill="#c8d0a0"/><rect x="55.10" y="24.45" width="6.17" height="6.16" fill="#c0d0a0"/><rect x="61.22" y="24.45" width="6.17" height="6.16" fill="#909870"/><rect x="67.34" y="24.45" width="6.17" height="6.16" fill="#606848"/><rect x="73.47" y="24.45" width="12.29" height="6.16" fill="#686850"/><rect x="85.71" y="24.45" width="6.17" height="6.16" fill="#586040"/><rect x="91.83" y="24.45" width="6.17" height="6.16" fill="#585840"/><rect x="97.96" y="24.45" width="6.17" height="6.16" fill="#586048"/><rect x="104.08" y="24.45" width="6.17" height="6.16" fill="#708058"/><rect x="110.20" y="24.45" width="6.17" height="6.16" fill="#686850"/><rect x="116.32" y="24.45" width="6.17" height="6.16" fill="#606848"/><rect x="122.44" y="24.45" width="6.17" height="6.16" fill="#586040"/><rect x="128.57" y="24.45" width="12.29" height="6.16" fill="#585840"/><rect x="140.81" y="24.45" width="6.17" height="6.16" fill="#586040"/><rect x="146.93" y="24.45" width="18.42" height="6.16" fill="#606848"/><rect x="165.30" y="24.45" width="12.29" height="6.16" fill="#586040"/><rect x="177.54" y="24.45" width="6.17" height="6.16" fill="#586048"/><rect x="183.67" y="24.45" width="12.29" height="6.16" fill="#586040"/><rect x="195.91" y="24.45" width="6.17" height="6.16" fill="#686850"/><rect x="202.03" y="24.45" width="6.17" height="6.16" fill="#889068"/><rect x="208.16" y="24.45" width="67.39" height="6.16" fill="#90a070"/><rect x="55.10" y="30.57" width="6.17" height="6.16" fill="#c0c898"/><rect x="61.22" y="30.57" width="6.17" height="6.16" fill="#707858"/><rect x="67.34" y="30.57" width="6.17" height="6.16" fill="#586040"/><rect x="73.47" y="30.57" width="24.54" height="6.16" fill="#585840"/><rect x="97.96" y="30.57" width="6.17" height="6.16" fill="#586040"/><rect x="104.08" y="30.57" width="6.17" height="6.16" fill="#586048"/><rect x="110.20" y="30.57" width="6.17" height="6.16" fill="#586040"/><rect x="116.32" y="30.57" width="6.17" height="6.16" fill="#585840"/><rect x="122.44" y="30.57" width="6.17" height="6.16" fill="#586040"/><rect x="128.57" y="30.57" width="12.29" height="6.16" fill="#606848"/><rect x="140.81" y="30.57" width="6.17" height="6.16" fill="#687050"/><rect x="146.93" y="30.57" width="12.29" height="6.16" fill="#808860"/><rect x="159.18" y="30.57" width="6.17" height="6.16" fill="#788058"/><rect x="165.30" y="30.57" width="12.29" height="6.16" fill="#586048"/><rect x="177.54" y="30.57" width="6.17" height="6.16" fill="#707858"/><rect x="183.67" y="30.57" width="6.17" height="6.16" fill="#586048"/><rect x="189.79" y="30.57" width="6.17" height="6.16" fill="#585840"/><rect x="195.91" y="30.57" width="6.17" height="6.16" fill="#586040"/><rect x="202.03" y="30.57" width="6.17" height="6.16" fill="#686850"/><rect x="208.16" y="30.57" width="6.17" height="6.16" fill="#889068"/><rect x="214.28" y="30.57" width="61.27" height="6.16" fill="#90a070"/><rect x="48.98" y="36.68" width="6.17" height="6.16" fill="#c8d0a0"/><rect x="55.10" y="36.68" width="6.17" height="6.16" fill="#b0b890"/><rect x="61.22" y="36.68" width="6.17" height="6.16" fill="#687050"/><rect x="67.34" y="36.68" width="55.15" height="6.16" fill="#585840"/><rect x="122.44" y="36.68" width="6.17" height="6.16" fill="#606848"/><rect x="128.57" y="36.68" width="12.29" height="6.16" fill="#808860"/><rect x="140.81" y="36.68" width="6.17" height="6.16" fill="#809060"/><rect x="146.93" y="36.68" width="6.17" height="6.16" fill="#889068"/><rect x="153.06" y="36.68" width="6.17" height="6.16" fill="#687050"/><rect x="159.18" y="36.68" width="6.17" height="6.16" fill="#686850"/><rect x="165.30" y="36.68" width="12.29" height="6.16" fill="#586040"/><rect x="177.54" y="36.68" width="6.17" height="6.16" fill="#586048"/><rect x="183.67" y="36.68" width="6.17" height="6.16" fill="#586040"/><rect x="189.79" y="36.68" width="6.17" height="6.16" fill="#586048"/><rect x="195.91" y="36.68" width="12.29" height="6.16" fill="#586040"/><rect x="208.16" y="36.68" width="6.17" height="6.16" fill="#686850"/><rect x="214.28" y="36.68" width="6.17" height="6.16" fill="#889068"/><rect x="220.40" y="36.68" width="55.15" height="6.16" fill="#90a070"/><rect x="42.86" y="42.79" width="6.17" height="6.16" fill="#c0c898"/><rect x="48.98" y="42.79" width="6.17" height="6.16" fill="#98a878"/><rect x="55.10" y="42.79" width="6.17" height="6.16" fill="#889068"/><rect x="61.22" y="42.79" width="6.17" height="6.16" fill="#606848"/><rect x="67.34" y="42.79" width="49.03" height="6.16" fill="#585840"/><rect x="116.32" y="42.79" width="6.17" height="6.16" fill="#586040"/><rect x="122.44" y="42.79" width="6.17" height="6.16" fill="#686850"/><rect x="128.57" y="42.79" width="6.17" height="6.16" fill="#808860"/><rect x="134.69" y="42.79" width="6.17" height="6.16" fill="#687050"/><rect x="140.81" y="42.79" width="6.17" height="6.16" fill="#707850"/><rect x="146.93" y="42.79" width="6.17" height="6.16" fill="#808860"/><rect x="153.06" y="42.79" width="6.17" height="6.16" fill="#686850"/><rect x="159.18" y="42.79" width="6.17" height="6.16" fill="#707858"/><rect x="165.30" y="42.79" width="6.17" height="6.16" fill="#586048"/><rect x="171.42" y="42.79" width="12.29" height="6.16" fill="#585840"/><rect x="183.67" y="42.79" width="6.17" height="6.16" fill="#606848"/><rect x="189.79" y="42.79" width="6.17" height="6.16" fill="#788058"/><rect x="195.91" y="42.79" width="6.17" height="6.16" fill="#606848"/><rect x="202.03" y="42.79" width="6.17" height="6.16" fill="#585840"/><rect x="208.16" y="42.79" width="6.17" height="6.16" fill="#586040"/><rect x="214.28" y="42.79" width="6.17" height="6.16" fill="#686850"/><rect x="220.40" y="42.79" width="6.17" height="6.16" fill="#889068"/><rect x="226.52" y="42.79" width="49.03" height="6.16" fill="#90a070"/><rect x="36.73" y="48.91" width="6.17" height="6.16" fill="#c8d0a0"/><rect x="42.86" y="48.91" width="6.17" height="6.16" fill="#98a878"/><rect x="48.98" y="48.91" width="6.17" height="6.16" fill="#687050"/><rect x="55.10" y="48.91" width="6.17" height="6.16" fill="#606848"/><rect x="61.22" y="48.91" width="6.17" height="6.16" fill="#586040"/><rect x="67.34" y="48.91" width="49.03" height="6.16" fill="#585840"/><rect x="116.32" y="48.91" width="6.17" height="6.16" fill="#606848"/><rect x="122.44" y="48.91" width="6.17" height="6.16" fill="#788060"/><rect x="128.57" y="48.91" width="6.17" height="6.16" fill="#687050"/><rect x="134.69" y="48.91" width="6.17" height="6.16" fill="#686850"/><rect x="140.81" y="48.91" width="6.17" height="6.16" fill="#788058"/><rect x="146.93" y="48.91" width="6.17" height="6.16" fill="#606848"/><rect x="153.06" y="48.91" width="6.17" height="6.16" fill="#586040"/><rect x="159.18" y="48.91" width="6.17" height="6.16" fill="#586048"/><rect x="165.30" y="48.91" width="6.17" height="6.16" fill="#586040"/><rect x="171.42" y="48.91" width="12.29" height="6.16" fill="#585840"/><rect x="183.67" y="48.91" width="6.17" height="6.16" fill="#606848"/><rect x="189.79" y="48.91" width="6.17" height="6.16" fill="#788058"/><rect x="195.91" y="48.91" width="6.17" height="6.16" fill="#606848"/><rect x="202.03" y="48.91" width="12.29" height="6.16" fill="#585840"/><rect x="214.28" y="48.91" width="6.17" height="6.16" fill="#586040"/><rect x="220.40" y="48.91" width="6.17" height="6.16" fill="#686850"/><rect x="226.52" y="48.91" width="6.17" height="6.16" fill="#889068"/><rect x="232.64" y="48.91" width="42.91" height="6.16" fill="#90a070"/><rect x="36.73" y="55.02" width="6.17" height="6.16" fill="#c0d0a0"/><rect x="42.86" y="55.02" width="6.17" height="6.16" fill="#909870"/><rect x="48.98" y="55.02" width="6.17" height="6.16" fill="#606848"/><rect x="55.10" y="55.02" width="24.54" height="6.16" fill="#585840"/><rect x="79.59" y="55.02" width="6.17" height="6.16" fill="#586040"/><rect x="85.71" y="55.02" width="6.17" height="6.16" fill="#586048"/><rect x="91.83" y="55.02" width="6.17" height="6.16" fill="#586040"/><rect x="97.96" y="55.02" width="12.29" height="6.16" fill="#585840"/><rect x="110.20" y="55.02" width="6.17" height="6.16" fill="#586040"/><rect x="116.32" y="55.02" width="6.17" height="6.16" fill="#686850"/><rect x="122.44" y="55.02" width="6.17" height="6.16" fill="#788060"/><rect x="128.57" y="55.02" width="6.17" height="6.16" fill="#686850"/><rect x="134.69" y="55.02" width="6.17" height="6.16" fill="#708058"/><rect x="140.81" y="55.02" width="6.17" height="6.16" fill="#606848"/><rect x="146.93" y="55.02" width="6.17" height="6.16" fill="#586040"/><rect x="153.06" y="55.02" width="30.66" height="6.16" fill="#585840"/><rect x="183.67" y="55.02" width="6.17" height="6.16" fill="#586040"/><rect x="189.79" y="55.02" width="6.17" height="6.16" fill="#586048"/><rect x="195.91" y="55.02" width="12.29" height="6.16" fill="#586040"/><rect x="208.16" y="55.02" width="6.17" height="6.16" fill="#586048"/><rect x="214.28" y="55.02" width="12.29" height="6.16" fill="#586040"/><rect x="226.52" y="55.02" width="6.17" height="6.16" fill="#687050"/><rect x="232.64" y="55.02" width="6.17" height="6.16" fill="#889868"/><rect x="238.77" y="55.02" width="36.78" height="6.16" fill="#90a070"/><rect x="30.61" y="61.13" width="6.17" height="6.16" fill="#c8d0a8"/><rect x="36.73" y="61.13" width="6.17" height="6.16" fill="#b0b890"/><rect x="42.86" y="61.13" width="6.17" height="6.16" fill="#707050"/><rect x="48.98" y="61.13" width="6.17" height="6.16" fill="#586040"/><rect x="55.10" y="61.13" width="24.54" height="6.16" fill="#585840"/><rect x="79.59" y="61.13" width="6.17" height="6.16" fill="#606848"/><rect x="85.71" y="61.13" width="6.17" height="6.16" fill="#788058"/><rect x="91.83" y="61.13" width="6.17" height="6.16" fill="#606848"/><rect x="97.96" y="61.13" width="12.29" height="6.16" fill="#585840"/><rect x="110.20" y="61.13" width="6.17" height="6.16" fill="#586048"/><rect x="116.32" y="61.13" width="6.17" height="6.16" fill="#708058"/><rect x="122.44" y="61.13" width="6.17" height="6.16" fill="#606848"/><rect x="128.57" y="61.13" width="6.17" height="6.16" fill="#586040"/><rect x="134.69" y="61.13" width="6.17" height="6.16" fill="#586048"/><rect x="140.81" y="61.13" width="6.17" height="6.16" fill="#586040"/><rect x="146.93" y="61.13" width="42.91" height="6.16" fill="#585840"/><rect x="189.79" y="61.13" width="6.17" height="6.16" fill="#586040"/><rect x="195.91" y="61.13" width="6.17" height="6.16" fill="#586048"/><rect x="202.03" y="61.13" width="6.17" height="6.16" fill="#606848"/><rect x="208.16" y="61.13" width="6.17" height="6.16" fill="#788058"/><rect x="214.28" y="61.13" width="6.17" height="6.16" fill="#606848"/><rect x="220.40" y="61.13" width="6.17" height="6.16" fill="#585840"/><rect x="226.52" y="61.13" width="6.17" height="6.16" fill="#606848"/><rect x="232.64" y="61.13" width="6.17" height="6.16" fill="#809060"/><rect x="238.77" y="61.13" width="36.78" height="6.16" fill="#90a070"/><rect x="30.61" y="67.25" width="6.17" height="6.16" fill="#c0c898"/><rect x="36.73" y="67.25" width="6.17" height="6.16" fill="#788060"/><rect x="42.86" y="67.25" width="6.17" height="6.16" fill="#586040"/><rect x="48.98" y="67.25" width="30.66" height="6.16" fill="#585840"/><rect x="79.59" y="67.25" width="6.17" height="6.16" fill="#606848"/><rect x="85.71" y="67.25" width="6.17" height="6.16" fill="#788058"/><rect x="91.83" y="67.25" width="6.17" height="6.16" fill="#606848"/><rect x="97.96" y="67.25" width="6.17" height="6.16" fill="#585840"/><rect x="104.08" y="67.25" width="6.17" height="6.16" fill="#586040"/><rect x="110.20" y="67.25" width="12.29" height="6.16" fill="#606848"/><rect x="122.44" y="67.25" width="6.17" height="6.16" fill="#586040"/><rect x="128.57" y="67.25" width="61.27" height="6.16" fill="#585840"/><rect x="189.79" y="67.25" width="6.17" height="6.16" fill="#586048"/><rect x="195.91" y="67.25" width="6.17" height="6.16" fill="#707858"/><rect x="202.03" y="67.25" width="6.17" height="6.16" fill="#686850"/><rect x="208.16" y="67.25" width="6.17" height="6.16" fill="#788058"/><rect x="214.28" y="67.25" width="6.17" height="6.16" fill="#606848"/><rect x="220.40" y="67.25" width="6.17" height="6.16" fill="#585840"/><rect x="226.52" y="67.25" width="6.17" height="6.16" fill="#586040"/><rect x="232.64" y="67.25" width="6.17" height="6.16" fill="#687050"/><rect x="238.77" y="67.25" width="6.17" height="6.16" fill="#889868"/><rect x="244.89" y="67.25" width="30.66" height="6.16" fill="#90a070"/><rect x="24.49" y="73.36" width="6.17" height="6.16" fill="#c8d0a8"/><rect x="30.61" y="73.36" width="6.17" height="6.16" fill="#b0b888"/><rect x="36.73" y="73.36" width="6.17" height="6.16" fill="#686850"/><rect x="42.86" y="73.36" width="36.78" height="6.16" fill="#585840"/><rect x="79.59" y="73.36" width="6.17" height="6.16" fill="#586040"/><rect x="85.71" y="73.36" width="6.17" height="6.16" fill="#586048"/><rect x="91.83" y="73.36" width="6.17" height="6.16" fill="#586040"/><rect x="97.96" y="73.36" width="6.17" height="6.16" fill="#585840"/><rect x="104.08" y="73.36" width="6.17" height="6.16" fill="#606848"/><rect x="110.20" y="73.36" width="6.17" height="6.16" fill="#788058"/><rect x="116.32" y="73.36" width="6.17" height="6.16" fill="#606848"/><rect x="122.44" y="73.36" width="12.29" height="6.16" fill="#585840"/><rect x="134.69" y="73.36" width="6.17" height="6.16" fill="#586040"/><rect x="140.81" y="73.36" width="6.17" height="6.16" fill="#586048"/><rect x="146.93" y="73.36" width="6.17" height="6.16" fill="#586040"/><rect x="153.06" y="73.36" width="36.78" height="6.16" fill="#585840"/><rect x="189.79" y="73.36" width="6.17" height="6.16" fill="#586040"/><rect x="195.91" y="73.36" width="12.29" height="6.16" fill="#586048"/><rect x="208.16" y="73.36" width="6.17" height="6.16" fill="#606848"/><rect x="214.28" y="73.36" width="6.17" height="6.16" fill="#586040"/><rect x="220.40" y="73.36" width="12.29" height="6.16" fill="#585840"/><rect x="232.64" y="73.36" width="6.17" height="6.16" fill="#606848"/><rect x="238.77" y="73.36" width="6.17" height="6.16" fill="#809060"/><rect x="244.89" y="73.36" width="30.66" height="6.16" fill="#90a070"/><rect x="24.49" y="79.47" width="6.17" height="6.16" fill="#c0c898"/><rect x="30.61" y="79.47" width="6.17" height="6.16" fill="#788060"/><rect x="36.73" y="79.47" width="6.17" height="6.16" fill="#586040"/><rect x="42.86" y="79.47" width="61.27" height="6.16" fill="#585840"/><rect x="104.08" y="79.47" width="6.17" height="6.16" fill="#606848"/><rect x="110.20" y="79.47" width="6.17" height="6.16" fill="#808860"/><rect x="116.32" y="79.47" width="6.17" height="6.16" fill="#606848"/><rect x="122.44" y="79.47" width="12.29" height="6.16" fill="#585840"/><rect x="134.69" y="79.47" width="6.17" height="6.16" fill="#606848"/><rect x="140.81" y="79.47" width="6.17" height="6.16" fill="#788058"/><rect x="146.93" y="79.47" width="6.17" height="6.16" fill="#606848"/><rect x="153.06" y="79.47" width="18.42" height="6.16" fill="#585840"/><rect x="171.42" y="79.47" width="6.17" height="6.16" fill="#586040"/><rect x="177.54" y="79.47" width="6.17" height="6.16" fill="#606850"/><rect x="183.67" y="79.47" width="12.29" height="6.16" fill="#586048"/><rect x="195.91" y="79.47" width="6.17" height="6.16" fill="#586040"/><rect x="202.03" y="79.47" width="6.17" height="6.16" fill="#606848"/><rect x="208.16" y="79.47" width="6.17" height="6.16" fill="#788058"/><rect x="214.28" y="79.47" width="6.17" height="6.16" fill="#606848"/><rect x="220.40" y="79.47" width="12.29" height="6.16" fill="#585840"/><rect x="232.64" y="79.47" width="6.17" height="6.16" fill="#586040"/><rect x="238.77" y="79.47" width="6.17" height="6.16" fill="#687050"/><rect x="244.89" y="79.47" width="6.17" height="6.16" fill="#889868"/><rect x="251.01" y="79.47" width="24.54" height="6.16" fill="#90a070"/><rect x="24.49" y="85.59" width="6.17" height="6.16" fill="#b8c098"/><rect x="30.61" y="85.59" width="6.17" height="6.16" fill="#687050"/><rect x="36.73" y="85.59" width="36.78" height="6.16" fill="#585840"/><rect x="73.47" y="85.59" width="6.17" height="6.16" fill="#586040"/><rect x="79.59" y="85.59" width="30.66" height="6.16" fill="#606848"/><rect x="110.20" y="85.59" width="6.17" height="6.16" fill="#788058"/><rect x="116.32" y="85.59" width="6.17" height="6.16" fill="#606848"/><rect x="122.44" y="85.59" width="6.17" height="6.16" fill="#585840"/><rect x="128.57" y="85.59" width="6.17" height="6.16" fill="#586040"/><rect x="134.69" y="85.59" width="6.17" height="6.16" fill="#687050"/><rect x="140.81" y="85.59" width="6.17" height="6.16" fill="#808860"/><rect x="146.93" y="85.59" width="6.17" height="6.16" fill="#606848"/><rect x="153.06" y="85.59" width="6.17" height="6.16" fill="#585840"/><rect x="159.18" y="85.59" width="6.17" height="6.16" fill="#586040"/><rect x="165.30" y="85.59" width="6.17" height="6.16" fill="#686850"/><rect x="171.42" y="85.59" width="6.17" height="6.16" fill="#788060"/><rect x="177.54" y="85.59" width="6.17" height="6.16" fill="#a0a880"/><rect x="183.67" y="85.59" width="6.17" height="6.16" fill="#788060"/><rect x="189.79" y="85.59" width="6.17" height="6.16" fill="#808860"/><rect x="195.91" y="85.59" width="12.29" height="6.16" fill="#687050"/><rect x="208.16" y="85.59" width="6.17" height="6.16" fill="#808860"/><rect x="214.28" y="85.59" width="6.17" height="6.16" fill="#606848"/><rect x="220.40" y="85.59" width="6.17" height="6.16" fill="#586048"/><rect x="226.52" y="85.59" width="6.17" height="6.16" fill="#586040"/><rect x="232.64" y="85.59" width="6.17" height="6.16" fill="#585840"/><rect x="238.77" y="85.59" width="6.17" height="6.16" fill="#606848"/><rect x="244.89" y="85.59" width="6.17" height="6.16" fill="#889868"/><rect x="251.01" y="85.59" width="24.54" height="6.16" fill="#90a070"/><rect x="24.49" y="91.70" width="6.17" height="6.16" fill="#b8c090"/><rect x="30.61" y="91.70" width="6.17" height="6.16" fill="#687050"/><rect x="36.73" y="91.70" width="24.54" height="6.16" fill="#585840"/><rect x="61.22" y="91.70" width="6.17" height="6.16" fill="#586040"/><rect x="67.34" y="91.70" width="6.17" height="6.16" fill="#606848"/><rect x="73.47" y="91.70" width="6.17" height="6.16" fill="#687050"/><rect x="79.59" y="91.70" width="6.17" height="6.16" fill="#889068"/><rect x="85.71" y="91.70" width="6.17" height="6.16" fill="#909870"/><rect x="91.83" y="91.70" width="6.17" height="6.16" fill="#90a070"/><rect x="97.96" y="91.70" width="6.17" height="6.16" fill="#889068"/><rect x="104.08" y="91.70" width="6.17" height="6.16" fill="#606848"/><rect x="110.20" y="91.70" width="6.17" height="6.16" fill="#586048"/><rect x="116.32" y="91.70" width="6.17" height="6.16" fill="#586040"/><rect x="122.44" y="91.70" width="6.17" height="6.16" fill="#585840"/><rect x="128.57" y="91.70" width="6.17" height="6.16" fill="#606848"/><rect x="134.69" y="91.70" width="6.17" height="6.16" fill="#889068"/><rect x="140.81" y="91.70" width="6.17" height="6.16" fill="#909870"/><rect x="146.93" y="91.70" width="6.17" height="6.16" fill="#687050"/><rect x="153.06" y="91.70" width="6.17" height="6.16" fill="#606848"/><rect x="159.18" y="91.70" width="6.17" height="6.16" fill="#787858"/><rect x="165.30" y="91.70" width="6.17" height="6.16" fill="#b0b888"/><rect x="171.42" y="91.70" width="6.17" height="6.16" fill="#c0c898"/><rect x="177.54" y="91.70" width="6.17" height="6.16" fill="#c8d0a0"/><rect x="183.67" y="91.70" width="6.17" height="6.16" fill="#b8c098"/><rect x="189.79" y="91.70" width="6.17" height="6.16" fill="#a0a880"/><rect x="195.91" y="91.70" width="6.17" height="6.16" fill="#90a070"/><rect x="202.03" y="91.70" width="6.17" height="6.16" fill="#909868"/><rect x="208.16" y="91.70" width="6.17" height="6.16" fill="#889868"/><rect x="214.28" y="91.70" width="6.17" height="6.16" fill="#707850"/><rect x="220.40" y="91.70" width="6.17" height="6.16" fill="#788060"/><rect x="226.52" y="91.70" width="6.17" height="6.16" fill="#606848"/><rect x="232.64" y="91.70" width="6.17" height="6.16" fill="#585840"/><rect x="238.77" y="91.70" width="6.17" height="6.16" fill="#606848"/><rect x="244.89" y="91.70" width="6.17" height="6.16" fill="#809060"/><rect x="251.01" y="91.70" width="24.54" height="6.16" fill="#90a070"/><rect x="18.37" y="97.81" width="6.17" height="6.16" fill="#c0c898"/><rect x="24.49" y="97.81" width="6.17" height="6.16" fill="#909870"/><rect x="30.61" y="97.81" width="6.17" height="6.16" fill="#606848"/><rect x="36.73" y="97.81" width="6.17" height="6.16" fill="#585840"/><rect x="42.86" y="97.81" width="6.17" height="6.16" fill="#586040"/><rect x="48.98" y="97.81" width="6.17" height="6.16" fill="#586048"/><rect x="55.10" y="97.81" width="6.17" height="6.16" fill="#586040"/><rect x="61.22" y="97.81" width="6.17" height="6.16" fill="#686850"/><rect x="67.34" y="97.81" width="6.17" height="6.16" fill="#889068"/><rect x="73.47" y="97.81" width="6.17" height="6.16" fill="#90a070"/><rect x="79.59" y="97.81" width="6.17" height="6.16" fill="#a0b080"/><rect x="85.71" y="97.81" width="6.17" height="6.16" fill="#c0c898"/><rect x="91.83" y="97.81" width="6.17" height="6.16" fill="#c8d0a0"/><rect x="97.96" y="97.81" width="6.17" height="6.16" fill="#b0b890"/><rect x="104.08" y="97.81" width="6.17" height="6.16" fill="#687050"/><rect x="110.20" y="97.81" width="6.17" height="6.16" fill="#586040"/><rect x="116.32" y="97.81" width="6.17" height="6.16" fill="#606850"/><rect x="122.44" y="97.81" width="6.17" height="6.16" fill="#586040"/><rect x="128.57" y="97.81" width="6.17" height="6.16" fill="#606848"/><rect x="134.69" y="97.81" width="6.17" height="6.16" fill="#909870"/><rect x="140.81" y="97.81" width="6.17" height="6.16" fill="#b8c090"/><rect x="146.93" y="97.81" width="6.17" height="6.16" fill="#98a878"/><rect x="153.06" y="97.81" width="6.17" height="6.16" fill="#98a078"/><rect x="159.18" y="97.81" width="6.17" height="6.16" fill="#b8c090"/><rect x="165.30" y="97.81" width="6.17" height="6.16" fill="#c8d0a8"/><rect x="189.79" y="97.81" width="6.17" height="6.16" fill="#c8d0a0"/><rect x="195.91" y="97.81" width="6.17" height="6.16" fill="#c0c898"/><rect x="202.03" y="97.81" width="6.17" height="6.16" fill="#a0b080"/><rect x="208.16" y="97.81" width="6.17" height="6.16" fill="#90a070"/><rect x="214.28" y="97.81" width="6.17" height="6.16" fill="#889868"/><rect x="220.40" y="97.81" width="6.17" height="6.16" fill="#808860"/><rect x="226.52" y="97.81" width="6.17" height="6.16" fill="#606848"/><rect x="232.64" y="97.81" width="6.17" height="6.16" fill="#585840"/><rect x="238.77" y="97.81" width="6.17" height="6.16" fill="#586040"/><rect x="244.89" y="97.81" width="6.17" height="6.16" fill="#687050"/><rect x="251.01" y="97.81" width="6.17" height="6.16" fill="#889868"/><rect x="257.13" y="97.81" width="18.42" height="6.16" fill="#90a070"/><rect x="12.24" y="103.93" width="6.17" height="6.16" fill="#c8d0a0"/><rect x="18.37" y="103.93" width="6.17" height="6.16" fill="#a0a880"/><rect x="24.49" y="103.93" width="6.17" height="6.16" fill="#687050"/><rect x="30.61" y="103.93" width="6.17" height="6.16" fill="#586040"/><rect x="36.73" y="103.93" width="6.17" height="6.16" fill="#585840"/><rect x="42.86" y="103.93" width="6.17" height="6.16" fill="#586048"/><rect x="48.98" y="103.93" width="6.17" height="6.16" fill="#708058"/><rect x="55.10" y="103.93" width="6.17" height="6.16" fill="#687050"/><rect x="61.22" y="103.93" width="6.17" height="6.16" fill="#889068"/><rect x="67.34" y="103.93" width="6.17" height="6.16" fill="#a0a880"/><rect x="73.47" y="103.93" width="6.17" height="6.16" fill="#c0c898"/><rect x="79.59" y="103.93" width="6.17" height="6.16" fill="#c8d0a0"/><rect x="97.96" y="103.93" width="6.17" height="6.16" fill="#b8c098"/><rect x="104.08" y="103.93" width="6.17" height="6.16" fill="#687050"/><rect x="110.20" y="103.93" width="6.17" height="6.16" fill="#606850"/><rect x="116.32" y="103.93" width="6.17" height="6.16" fill="#909870"/><rect x="122.44" y="103.93" width="6.17" height="6.16" fill="#606850"/><rect x="128.57" y="103.93" width="6.17" height="6.16" fill="#606848"/><rect x="134.69" y="103.93" width="6.17" height="6.16" fill="#98a078"/><rect x="140.81" y="103.93" width="18.42" height="6.16" fill="#c8d0a0"/><rect x="202.03" y="103.93" width="6.17" height="6.16" fill="#c0c898"/><rect x="208.16" y="103.93" width="6.17" height="6.16" fill="#a0b080"/><rect x="214.28" y="103.93" width="6.17" height="6.16" fill="#909868"/><rect x="220.40" y="103.93" width="6.17" height="6.16" fill="#687050"/><rect x="226.52" y="103.93" width="6.17" height="6.16" fill="#586040"/><rect x="232.64" y="103.93" width="12.29" height="6.16" fill="#585840"/><rect x="244.89" y="103.93" width="6.17" height="6.16" fill="#606848"/><rect x="251.01" y="103.93" width="6.17" height="6.16" fill="#889868"/><rect x="257.13" y="103.93" width="18.42" height="6.16" fill="#90a070"/><rect x="18.37" y="110.04" width="6.17" height="6.16" fill="#b8c090"/><rect x="24.49" y="110.04" width="6.17" height="6.16" fill="#687050"/><rect x="30.61" y="110.04" width="12.29" height="6.16" fill="#585840"/><rect x="42.86" y="110.04" width="6.17" height="6.16" fill="#586040"/><rect x="48.98" y="110.04" width="6.17" height="6.16" fill="#687050"/><rect x="55.10" y="110.04" width="6.17" height="6.16" fill="#889068"/><rect x="61.22" y="110.04" width="6.17" height="6.16" fill="#98a878"/><rect x="67.34" y="110.04" width="6.17" height="6.16" fill="#c0c898"/><rect x="97.96" y="110.04" width="6.17" height="6.16" fill="#b8c098"/><rect x="104.08" y="110.04" width="6.17" height="6.16" fill="#687050"/><rect x="110.20" y="110.04" width="6.17" height="6.16" fill="#586040"/><rect x="116.32" y="110.04" width="6.17" height="6.16" fill="#606850"/><rect x="122.44" y="110.04" width="6.17" height="6.16" fill="#586048"/><rect x="128.57" y="110.04" width="6.17" height="6.16" fill="#707050"/><rect x="134.69" y="110.04" width="6.17" height="6.16" fill="#b0b888"/><rect x="140.81" y="110.04" width="6.17" height="6.16" fill="#c8d8a8"/><rect x="208.16" y="110.04" width="6.17" height="6.16" fill="#c0c898"/><rect x="214.28" y="110.04" width="6.17" height="6.16" fill="#90a070"/><rect x="220.40" y="110.04" width="6.17" height="6.16" fill="#687050"/><rect x="226.52" y="110.04" width="6.17" height="6.16" fill="#586040"/><rect x="232.64" y="110.04" width="12.29" height="6.16" fill="#585840"/><rect x="244.89" y="110.04" width="6.17" height="6.16" fill="#606848"/><rect x="251.01" y="110.04" width="6.17" height="6.16" fill="#889868"/><rect x="257.13" y="110.04" width="18.42" height="6.16" fill="#90a070"/><rect x="18.37" y="116.16" width="6.17" height="6.16" fill="#b8c098"/><rect x="24.49" y="116.16" width="6.17" height="6.16" fill="#687050"/><rect x="30.61" y="116.16" width="12.29" height="6.16" fill="#585840"/><rect x="42.86" y="116.16" width="6.17" height="6.16" fill="#586048"/><rect x="48.98" y="116.16" width="6.17" height="6.16" fill="#808860"/><rect x="55.10" y="116.16" width="6.17" height="6.16" fill="#909870"/><rect x="61.22" y="116.16" width="6.17" height="6.16" fill="#a0a878"/><rect x="67.34" y="116.16" width="6.17" height="6.16" fill="#c8d0a0"/><rect x="97.96" y="116.16" width="6.17" height="6.16" fill="#c0c898"/><rect x="104.08" y="116.16" width="6.17" height="6.16" fill="#788060"/><rect x="110.20" y="116.16" width="6.17" height="6.16" fill="#586048"/><rect x="116.32" y="116.16" width="6.17" height="6.16" fill="#686850"/><rect x="122.44" y="116.16" width="6.17" height="6.16" fill="#707050"/><rect x="128.57" y="116.16" width="6.17" height="6.16" fill="#808860"/><rect x="134.69" y="116.16" width="6.17" height="6.16" fill="#a8b080"/><rect x="140.81" y="116.16" width="6.17" height="6.16" fill="#c0c898"/><rect x="208.16" y="116.16" width="6.17" height="6.16" fill="#c8d0a0"/><rect x="214.28" y="116.16" width="6.17" height="6.16" fill="#98a878"/><rect x="220.40" y="116.16" width="6.17" height="6.16" fill="#889068"/><rect x="226.52" y="116.16" width="6.17" height="6.16" fill="#686850"/><rect x="232.64" y="116.16" width="6.17" height="6.16" fill="#586040"/><rect x="238.77" y="116.16" width="6.17" height="6.16" fill="#585840"/><rect x="244.89" y="116.16" width="6.17" height="6.16" fill="#606848"/><rect x="251.01" y="116.16" width="6.17" height="6.16" fill="#889868"/><rect x="257.13" y="116.16" width="18.42" height="6.16" fill="#90a070"/><rect x="18.37" y="122.27" width="6.17" height="6.16" fill="#b8c098"/><rect x="24.49" y="122.27" width="6.17" height="6.16" fill="#687050"/><rect x="30.61" y="122.27" width="12.29" height="6.16" fill="#585840"/><rect x="42.86" y="122.27" width="6.17" height="6.16" fill="#586040"/><rect x="48.98" y="122.27" width="6.17" height="6.16" fill="#686850"/><rect x="55.10" y="122.27" width="6.17" height="6.16" fill="#889068"/><rect x="61.22" y="122.27" width="6.17" height="6.16" fill="#98a878"/><rect x="67.34" y="122.27" width="6.17" height="6.16" fill="#c8d0a0"/><rect x="97.96" y="122.27" width="6.17" height="6.16" fill="#c8d0a8"/><rect x="104.08" y="122.27" width="6.17" height="6.16" fill="#b0b890"/><rect x="110.20" y="122.27" width="6.17" height="6.16" fill="#808868"/><rect x="116.32" y="122.27" width="12.29" height="6.16" fill="#a0a880"/><rect x="128.57" y="122.27" width="6.17" height="6.16" fill="#808860"/><rect x="134.69" y="122.27" width="6.17" height="6.16" fill="#a8b888"/><rect x="140.81" y="122.27" width="6.17" height="6.16" fill="#b0b888"/><rect x="146.93" y="122.27" width="6.17" height="6.16" fill="#c0c898"/><rect x="208.16" y="122.27" width="6.17" height="6.16" fill="#c8d0a0"/><rect x="214.28" y="122.27" width="6.17" height="6.16" fill="#a0b080"/><rect x="220.40" y="122.27" width="6.17" height="6.16" fill="#90a070"/><rect x="226.52" y="122.27" width="6.17" height="6.16" fill="#808860"/><rect x="232.64" y="122.27" width="6.17" height="6.16" fill="#586048"/><rect x="238.77" y="122.27" width="6.17" height="6.16" fill="#585840"/><rect x="244.89" y="122.27" width="6.17" height="6.16" fill="#606848"/><rect x="251.01" y="122.27" width="6.17" height="6.16" fill="#889868"/><rect x="257.13" y="122.27" width="18.42" height="6.16" fill="#90a070"/><rect x="18.37" y="128.38" width="6.17" height="6.16" fill="#b8c098"/><rect x="24.49" y="128.38" width="6.17" height="6.16" fill="#687050"/><rect x="30.61" y="128.38" width="18.42" height="6.16" fill="#585840"/><rect x="48.98" y="128.38" width="6.17" height="6.16" fill="#586040"/><rect x="55.10" y="128.38" width="6.17" height="6.16" fill="#687050"/><rect x="61.22" y="128.38" width="6.17" height="6.16" fill="#98a070"/><rect x="67.34" y="128.38" width="6.17" height="6.16" fill="#c8d0a0"/><rect x="104.08" y="128.38" width="6.17" height="6.16" fill="#c8d0a8"/><rect x="110.20" y="128.38" width="6.17" height="6.16" fill="#b8c090"/><rect x="116.32" y="128.38" width="6.17" height="6.16" fill="#808868"/><rect x="122.44" y="128.38" width="6.17" height="6.16" fill="#707858"/><rect x="128.57" y="128.38" width="6.17" height="6.16" fill="#889068"/><rect x="134.69" y="128.38" width="6.17" height="6.16" fill="#a0a880"/><rect x="140.81" y="128.38" width="6.17" height="6.16" fill="#b8c090"/><rect x="146.93" y="128.38" width="6.17" height="6.16" fill="#b0b890"/><rect x="153.06" y="128.38" width="6.17" height="6.16" fill="#c8d0a0"/><rect x="214.28" y="128.38" width="6.17" height="6.16" fill="#c0c898"/><rect x="220.40" y="128.38" width="6.17" height="6.16" fill="#909868"/><rect x="226.52" y="128.38" width="6.17" height="6.16" fill="#686850"/><rect x="232.64" y="128.38" width="6.17" height="6.16" fill="#586040"/><rect x="238.77" y="128.38" width="6.17" height="6.16" fill="#585840"/><rect x="244.89" y="128.38" width="6.17" height="6.16" fill="#606848"/><rect x="251.01" y="128.38" width="6.17" height="6.16" fill="#889868"/><rect x="257.13" y="128.38" width="18.42" height="6.16" fill="#90a070"/><rect x="18.37" y="134.50" width="6.17" height="6.16" fill="#b8c098"/><rect x="24.49" y="134.50" width="6.17" height="6.16" fill="#687050"/><rect x="30.61" y="134.50" width="24.54" height="6.16" fill="#585840"/><rect x="55.10" y="134.50" width="6.17" height="6.16" fill="#606848"/><rect x="61.22" y="134.50" width="6.17" height="6.16" fill="#909870"/><rect x="67.34" y="134.50" width="6.17" height="6.16" fill="#c0c898"/><rect x="110.20" y="134.50" width="6.17" height="6.16" fill="#c8d0a8"/><rect x="116.32" y="134.50" width="6.17" height="6.16" fill="#b0b890"/><rect x="122.44" y="134.50" width="6.17" height="6.16" fill="#808860"/><rect x="128.57" y="134.50" width="6.17" height="6.16" fill="#909870"/><rect x="134.69" y="134.50" width="6.17" height="6.16" fill="#a0b080"/><rect x="140.81" y="134.50" width="12.29" height="6.16" fill="#c8d0a0"/><rect x="214.28" y="134.50" width="6.17" height="6.16" fill="#b8c090"/><rect x="220.40" y="134.50" width="6.17" height="6.16" fill="#707858"/><rect x="226.52" y="134.50" width="6.17" height="6.16" fill="#586040"/><rect x="232.64" y="134.50" width="12.29" height="6.16" fill="#585840"/><rect x="244.89" y="134.50" width="6.17" height="6.16" fill="#606848"/><rect x="251.01" y="134.50" width="6.17" height="6.16" fill="#889868"/><rect x="257.13" y="134.50" width="18.42" height="6.16" fill="#90a070"/><rect x="18.37" y="140.61" width="6.17" height="6.16" fill="#b8c098"/><rect x="24.49" y="140.61" width="6.17" height="6.16" fill="#687050"/><rect x="30.61" y="140.61" width="24.54" height="6.16" fill="#585840"/><rect x="55.10" y="140.61" width="6.17" height="6.16" fill="#606848"/><rect x="61.22" y="140.61" width="6.17" height="6.16" fill="#889868"/><rect x="67.34" y="140.61" width="6.17" height="6.16" fill="#a0b080"/><rect x="73.47" y="140.61" width="6.17" height="6.16" fill="#c8d0a0"/><rect x="116.32" y="140.61" width="6.17" height="6.16" fill="#c8d0a8"/><rect x="122.44" y="140.61" width="6.17" height="6.16" fill="#b8c098"/><rect x="128.57" y="140.61" width="6.17" height="6.16" fill="#a8b080"/><rect x="134.69" y="140.61" width="6.17" height="6.16" fill="#c0c898"/><rect x="208.16" y="140.61" width="6.17" height="6.16" fill="#c8d0a0"/><rect x="214.28" y="140.61" width="6.17" height="6.16" fill="#a0a880"/><rect x="220.40" y="140.61" width="6.17" height="6.16" fill="#606848"/><rect x="226.52" y="140.61" width="12.29" height="6.16" fill="#585840"/><rect x="238.77" y="140.61" width="6.17" height="6.16" fill="#586040"/><rect x="244.89" y="140.61" width="6.17" height="6.16" fill="#687050"/><rect x="251.01" y="140.61" width="6.17" height="6.16" fill="#889868"/><rect x="257.13" y="140.61" width="18.42" height="6.16" fill="#90a070"/><rect x="18.37" y="146.72" width="6.17" height="6.16" fill="#c0c898"/><rect x="24.49" y="146.72" width="6.17" height="6.16" fill="#707858"/><rect x="30.61" y="146.72" width="6.17" height="6.16" fill="#586040"/><rect x="36.73" y="146.72" width="12.29" height="6.16" fill="#585840"/><rect x="48.98" y="146.72" width="6.17" height="6.16" fill="#586040"/><rect x="55.10" y="146.72" width="6.17" height="6.16" fill="#687050"/><rect x="61.22" y="146.72" width="6.17" height="6.16" fill="#889868"/><rect x="67.34" y="146.72" width="6.17" height="6.16" fill="#a0a878"/><rect x="73.47" y="146.72" width="6.17" height="6.16" fill="#c8d0a0"/><rect x="128.57" y="146.72" width="6.17" height="6.16" fill="#c8d0a0"/><rect x="214.28" y="146.72" width="6.17" height="6.16" fill="#b8c090"/><rect x="220.40" y="146.72" width="6.17" height="6.16" fill="#687050"/><rect x="226.52" y="146.72" width="12.29" height="6.16" fill="#585840"/><rect x="238.77" y="146.72" width="6.17" height="6.16" fill="#606848"/><rect x="244.89" y="146.72" width="6.17" height="6.16" fill="#809060"/><rect x="251.01" y="146.72" width="24.54" height="6.16" fill="#90a070"/><rect x="18.37" y="152.84" width="6.17" height="6.16" fill="#c0d0a0"/><rect x="24.49" y="152.84" width="6.17" height="6.16" fill="#909870"/><rect x="30.61" y="152.84" width="6.17" height="6.16" fill="#606848"/><rect x="36.73" y="152.84" width="12.29" height="6.16" fill="#585840"/><rect x="48.98" y="152.84" width="6.17" height="6.16" fill="#606848"/><rect x="55.10" y="152.84" width="6.17" height="6.16" fill="#809060"/><rect x="61.22" y="152.84" width="6.17" height="6.16" fill="#90a070"/><rect x="67.34" y="152.84" width="6.17" height="6.16" fill="#98a878"/><rect x="73.47" y="152.84" width="6.17" height="6.16" fill="#c0c898"/><rect x="79.59" y="152.84" width="6.17" height="6.16" fill="#c8d0a0"/><rect x="165.30" y="152.84" width="49.03" height="6.16" fill="#c8d0a0"/><rect x="214.28" y="152.84" width="6.17" height="6.16" fill="#b8c090"/><rect x="220.40" y="152.84" width="6.17" height="6.16" fill="#787858"/><rect x="226.52" y="152.84" width="6.17" height="6.16" fill="#586040"/><rect x="232.64" y="152.84" width="6.17" height="6.16" fill="#585840"/><rect x="238.77" y="152.84" width="6.17" height="6.16" fill="#606848"/><rect x="244.89" y="152.84" width="6.17" height="6.16" fill="#889868"/><rect x="251.01" y="152.84" width="24.54" height="6.16" fill="#90a070"/><rect x="18.37" y="158.95" width="6.17" height="6.16" fill="#c8d0a0"/><rect x="24.49" y="158.95" width="6.17" height="6.16" fill="#90a070"/><rect x="30.61" y="158.95" width="6.17" height="6.16" fill="#606848"/><rect x="36.73" y="158.95" width="12.29" height="6.16" fill="#585840"/><rect x="48.98" y="158.95" width="6.17" height="6.16" fill="#606848"/><rect x="55.10" y="158.95" width="6.17" height="6.16" fill="#808860"/><rect x="61.22" y="158.95" width="6.17" height="6.16" fill="#889868"/><rect x="67.34" y="158.95" width="6.17" height="6.16" fill="#90a070"/><rect x="73.47" y="158.95" width="6.17" height="6.16" fill="#98a878"/><rect x="79.59" y="158.95" width="6.17" height="6.16" fill="#a0b080"/><rect x="85.71" y="158.95" width="6.17" height="6.16" fill="#b8c090"/><rect x="91.83" y="158.95" width="12.29" height="6.16" fill="#c0c898"/><rect x="104.08" y="158.95" width="6.17" height="6.16" fill="#c8d0a0"/><rect x="153.06" y="158.95" width="6.17" height="6.16" fill="#c8d0a0"/><rect x="159.18" y="158.95" width="6.17" height="6.16" fill="#c0c898"/><rect x="165.30" y="158.95" width="6.17" height="6.16" fill="#a0b080"/><rect x="171.42" y="158.95" width="6.17" height="6.16" fill="#a0a878"/><rect x="177.54" y="158.95" width="30.66" height="6.16" fill="#a8b080"/><rect x="208.16" y="158.95" width="6.17" height="6.16" fill="#a0a878"/><rect x="214.28" y="158.95" width="6.17" height="6.16" fill="#a0b080"/><rect x="220.40" y="158.95" width="6.17" height="6.16" fill="#a8b088"/><rect x="226.52" y="158.95" width="6.17" height="6.16" fill="#686850"/><rect x="232.64" y="158.95" width="6.17" height="6.16" fill="#585840"/><rect x="238.77" y="158.95" width="6.17" height="6.16" fill="#606848"/><rect x="244.89" y="158.95" width="6.17" height="6.16" fill="#889868"/><rect x="251.01" y="158.95" width="24.54" height="6.16" fill="#90a070"/><rect x="18.37" y="165.06" width="6.17" height="6.16" fill="#c8d0a0"/><rect x="24.49" y="165.06" width="6.17" height="6.16" fill="#98a070"/><rect x="30.61" y="165.06" width="6.17" height="6.16" fill="#687050"/><rect x="36.73" y="165.06" width="6.17" height="6.16" fill="#586040"/><rect x="42.86" y="165.06" width="6.17" height="6.16" fill="#585840"/><rect x="48.98" y="165.06" width="6.17" height="6.16" fill="#586040"/><rect x="55.10" y="165.06" width="6.17" height="6.16" fill="#606848"/><rect x="61.22" y="165.06" width="6.17" height="6.16" fill="#707850"/><rect x="67.34" y="165.06" width="6.17" height="6.16" fill="#909870"/><rect x="73.47" y="165.06" width="6.17" height="6.16" fill="#98a878"/><rect x="79.59" y="165.06" width="6.17" height="6.16" fill="#98a078"/><rect x="85.71" y="165.06" width="6.17" height="6.16" fill="#889068"/><rect x="91.83" y="165.06" width="6.17" height="6.16" fill="#909870"/><rect x="97.96" y="165.06" width="6.17" height="6.16" fill="#788060"/><rect x="104.08" y="165.06" width="6.17" height="6.16" fill="#98a078"/><rect x="110.20" y="165.06" width="6.17" height="6.16" fill="#b8c090"/><rect x="116.32" y="165.06" width="6.17" height="6.16" fill="#c0c898"/><rect x="122.44" y="165.06" width="6.17" height="6.16" fill="#c8d0a8"/><rect x="146.93" y="165.06" width="6.17" height="6.16" fill="#c0c898"/><rect x="153.06" y="165.06" width="6.17" height="6.16" fill="#a0b080"/><rect x="159.18" y="165.06" width="6.17" height="6.16" fill="#98a878"/><rect x="165.30" y="165.06" width="6.17" height="6.16" fill="#98a070"/><rect x="171.42" y="165.06" width="6.17" height="6.16" fill="#a0b080"/><rect x="177.54" y="165.06" width="6.17" height="6.16" fill="#c0c898"/><rect x="183.67" y="165.06" width="18.42" height="6.16" fill="#c8d0a0"/><rect x="202.03" y="165.06" width="6.17" height="6.16" fill="#c0c898"/><rect x="208.16" y="165.06" width="6.17" height="6.16" fill="#a0b080"/><rect x="214.28" y="165.06" width="6.17" height="6.16" fill="#a0a878"/><rect x="220.40" y="165.06" width="6.17" height="6.16" fill="#b0b890"/><rect x="226.52" y="165.06" width="6.17" height="6.16" fill="#687050"/><rect x="232.64" y="165.06" width="6.17" height="6.16" fill="#586040"/><rect x="238.77" y="165.06" width="6.17" height="6.16" fill="#707858"/><rect x="244.89" y="165.06" width="6.17" height="6.16" fill="#98a070"/><rect x="251.01" y="165.06" width="6.17" height="6.16" fill="#98a878"/><rect x="257.13" y="165.06" width="6.17" height="6.16" fill="#98a070"/><rect x="263.26" y="165.06" width="12.29" height="6.16" fill="#90a070"/><rect x="12.24" y="171.18" width="6.17" height="6.16" fill="#c8d0a8"/><rect x="18.37" y="171.18" width="6.17" height="6.16" fill="#b8c090"/><rect x="24.49" y="171.18" width="6.17" height="6.16" fill="#909870"/><rect x="30.61" y="171.18" width="6.17" height="6.16" fill="#788060"/><rect x="36.73" y="171.18" width="6.17" height="6.16" fill="#586048"/><rect x="42.86" y="171.18" width="6.17" height="6.16" fill="#585840"/><rect x="48.98" y="171.18" width="6.17" height="6.16" fill="#586040"/><rect x="55.10" y="171.18" width="6.17" height="6.16" fill="#686850"/><rect x="61.22" y="171.18" width="6.17" height="6.16" fill="#889068"/><rect x="67.34" y="171.18" width="6.17" height="6.16" fill="#98a878"/><rect x="73.47" y="171.18" width="6.17" height="6.16" fill="#c0c898"/><rect x="79.59" y="171.18" width="6.17" height="6.16" fill="#b8c098"/><rect x="85.71" y="171.18" width="6.17" height="6.16" fill="#a8b088"/><rect x="91.83" y="171.18" width="6.17" height="6.16" fill="#909870"/><rect x="97.96" y="171.18" width="6.17" height="6.16" fill="#788058"/><rect x="104.08" y="171.18" width="6.17" height="6.16" fill="#889068"/><rect x="110.20" y="171.18" width="6.17" height="6.16" fill="#707858"/><rect x="116.32" y="171.18" width="6.17" height="6.16" fill="#788060"/><rect x="122.44" y="171.18" width="6.17" height="6.16" fill="#b8c090"/><rect x="140.81" y="171.18" width="6.17" height="6.16" fill="#c8d0a0"/><rect x="146.93" y="171.18" width="6.17" height="6.16" fill="#a8b888"/><rect x="153.06" y="171.18" width="6.17" height="6.16" fill="#98a070"/><rect x="159.18" y="171.18" width="6.17" height="6.16" fill="#90a070"/><rect x="165.30" y="171.18" width="6.17" height="6.16" fill="#98a878"/><rect x="171.42" y="171.18" width="6.17" height="6.16" fill="#b8c090"/><rect x="177.54" y="171.18" width="12.29" height="6.16" fill="#c8d0a0"/><rect x="189.79" y="171.18" width="6.17" height="6.16" fill="#c8d8a8"/><rect x="195.91" y="171.18" width="6.17" height="6.16" fill="#c8d0a0"/><rect x="202.03" y="171.18" width="6.17" height="6.16" fill="#c8d8a8"/><rect x="208.16" y="171.18" width="6.17" height="6.16" fill="#c0c898"/><rect x="214.28" y="171.18" width="6.17" height="6.16" fill="#a8b888"/><rect x="220.40" y="171.18" width="6.17" height="6.16" fill="#b0b890"/><rect x="226.52" y="171.18" width="6.17" height="6.16" fill="#687050"/><rect x="232.64" y="171.18" width="6.17" height="6.16" fill="#686850"/><rect x="238.77" y="171.18" width="6.17" height="6.16" fill="#a8b088"/><rect x="244.89" y="171.18" width="6.17" height="6.16" fill="#c0c898"/><rect x="251.01" y="171.18" width="6.17" height="6.16" fill="#b8c090"/><rect x="257.13" y="171.18" width="6.17" height="6.16" fill="#a0a878"/><rect x="263.26" y="171.18" width="6.17" height="6.16" fill="#98a070"/><rect x="269.38" y="171.18" width="6.17" height="6.16" fill="#90a070"/><rect x="12.24" y="177.29" width="6.17" height="6.16" fill="#c0c898"/><rect x="18.37" y="177.29" width="6.17" height="6.16" fill="#788060"/><rect x="24.49" y="177.29" width="12.29" height="6.16" fill="#606848"/><rect x="36.73" y="177.29" width="6.17" height="6.16" fill="#586040"/><rect x="42.86" y="177.29" width="6.17" height="6.16" fill="#585840"/><rect x="48.98" y="177.29" width="6.17" height="6.16" fill="#586048"/><rect x="55.10" y="177.29" width="6.17" height="6.16" fill="#808860"/><rect x="61.22" y="177.29" width="6.17" height="6.16" fill="#909870"/><rect x="67.34" y="177.29" width="6.17" height="6.16" fill="#98a070"/><rect x="73.47" y="177.29" width="6.17" height="6.16" fill="#b8c090"/><rect x="79.59" y="177.29" width="6.17" height="6.16" fill="#98a878"/><rect x="85.71" y="177.29" width="6.17" height="6.16" fill="#788060"/><rect x="91.83" y="177.29" width="6.17" height="6.16" fill="#90a070"/><rect x="97.96" y="177.29" width="6.17" height="6.16" fill="#b0b888"/><rect x="104.08" y="177.29" width="6.17" height="6.16" fill="#90a070"/><rect x="110.20" y="177.29" width="6.17" height="6.16" fill="#707050"/><rect x="116.32" y="177.29" width="6.17" height="6.16" fill="#606850"/><rect x="122.44" y="177.29" width="6.17" height="6.16" fill="#98a078"/><rect x="128.57" y="177.29" width="6.17" height="6.16" fill="#c8d0a0"/><rect x="146.93" y="177.29" width="6.17" height="6.16" fill="#c0c898"/><rect x="153.06" y="177.29" width="6.17" height="6.16" fill="#a0b080"/><rect x="159.18" y="177.29" width="6.17" height="6.16" fill="#98a070"/><rect x="165.30" y="177.29" width="6.17" height="6.16" fill="#98a878"/><rect x="171.42" y="177.29" width="12.29" height="6.16" fill="#a0a878"/><rect x="183.67" y="177.29" width="6.17" height="6.16" fill="#a8b888"/><rect x="189.79" y="177.29" width="6.17" height="6.16" fill="#b8c090"/><rect x="195.91" y="177.29" width="6.17" height="6.16" fill="#a8b888"/><rect x="202.03" y="177.29" width="6.17" height="6.16" fill="#c8d0a0"/><rect x="214.28" y="177.29" width="6.17" height="6.16" fill="#c8d0a0"/><rect x="220.40" y="177.29" width="6.17" height="6.16" fill="#b8c098"/><rect x="226.52" y="177.29" width="12.29" height="6.16" fill="#707858"/><rect x="238.77" y="177.29" width="6.17" height="6.16" fill="#b8c090"/><rect x="244.89" y="177.29" width="6.17" height="6.16" fill="#b0b888"/><rect x="251.01" y="177.29" width="6.17" height="6.16" fill="#a8b888"/><rect x="257.13" y="177.29" width="6.17" height="6.16" fill="#b8c090"/><rect x="263.26" y="177.29" width="6.17" height="6.16" fill="#98a878"/><rect x="269.38" y="177.29" width="6.17" height="6.16" fill="#90a070"/><rect x="12.24" y="183.40" width="6.17" height="6.16" fill="#b8c098"/><rect x="18.37" y="183.40" width="6.17" height="6.16" fill="#687050"/><rect x="24.49" y="183.40" width="18.42" height="6.16" fill="#585840"/><rect x="42.86" y="183.40" width="6.17" height="6.16" fill="#586040"/><rect x="48.98" y="183.40" width="6.17" height="6.16" fill="#606848"/><rect x="55.10" y="183.40" width="6.17" height="6.16" fill="#707850"/><rect x="61.22" y="183.40" width="6.17" height="6.16" fill="#889068"/><rect x="67.34" y="183.40" width="6.17" height="6.16" fill="#707858"/><rect x="73.47" y="183.40" width="6.17" height="6.16" fill="#98a078"/><rect x="79.59" y="183.40" width="6.17" height="6.16" fill="#98a070"/><rect x="85.71" y="183.40" width="6.17" height="6.16" fill="#788060"/><rect x="91.83" y="183.40" width="6.17" height="6.16" fill="#a0a878"/><rect x="97.96" y="183.40" width="6.17" height="6.16" fill="#c0c898"/><rect x="104.08" y="183.40" width="12.29" height="6.16" fill="#a8b088"/><rect x="116.32" y="183.40" width="6.17" height="6.16" fill="#808860"/><rect x="122.44" y="183.40" width="6.17" height="6.16" fill="#98a070"/><rect x="128.57" y="183.40" width="6.17" height="6.16" fill="#c8d0a0"/><rect x="153.06" y="183.40" width="6.17" height="6.16" fill="#c0c898"/><rect x="159.18" y="183.40" width="6.17" height="6.16" fill="#a8b888"/><rect x="165.30" y="183.40" width="6.17" height="6.16" fill="#b8c090"/><rect x="171.42" y="183.40" width="12.29" height="6.16" fill="#a0b080"/><rect x="183.67" y="183.40" width="6.17" height="6.16" fill="#b8c090"/><rect x="189.79" y="183.40" width="6.17" height="6.16" fill="#a8b888"/><rect x="195.91" y="183.40" width="6.17" height="6.16" fill="#a8b080"/><rect x="202.03" y="183.40" width="6.17" height="6.16" fill="#c8d0a0"/><rect x="220.40" y="183.40" width="6.17" height="6.16" fill="#c0d0a0"/><rect x="226.52" y="183.40" width="12.29" height="6.16" fill="#98a070"/><rect x="238.77" y="183.40" width="6.17" height="6.16" fill="#c0c898"/><rect x="244.89" y="183.40" width="12.29" height="6.16" fill="#c8d0a0"/><rect x="257.13" y="183.40" width="6.17" height="6.16" fill="#c0c898"/><rect x="263.26" y="183.40" width="6.17" height="6.16" fill="#98a878"/><rect x="269.38" y="183.40" width="6.17" height="6.16" fill="#90a070"/><rect x="12.24" y="189.52" width="6.17" height="6.16" fill="#b8c098"/><rect x="18.37" y="189.52" width="6.17" height="6.16" fill="#687050"/><rect x="24.49" y="189.52" width="18.42" height="6.16" fill="#585840"/><rect x="42.86" y="189.52" width="6.17" height="6.16" fill="#606848"/><rect x="48.98" y="189.52" width="6.17" height="6.16" fill="#808860"/><rect x="55.10" y="189.52" width="12.29" height="6.16" fill="#889868"/><rect x="67.34" y="189.52" width="6.17" height="6.16" fill="#788058"/><rect x="73.47" y="189.52" width="6.17" height="6.16" fill="#b0b888"/><rect x="79.59" y="189.52" width="6.17" height="6.16" fill="#b8c098"/><rect x="85.71" y="189.52" width="6.17" height="6.16" fill="#b8c090"/><rect x="91.83" y="189.52" width="6.17" height="6.16" fill="#c0d0a0"/><rect x="97.96" y="189.52" width="6.17" height="6.16" fill="#c8d8a8"/><rect x="104.08" y="189.52" width="12.29" height="6.16" fill="#c8d0a0"/><rect x="116.32" y="189.52" width="6.17" height="6.16" fill="#b0b890"/><rect x="122.44" y="189.52" width="6.17" height="6.16" fill="#a8b080"/><rect x="128.57" y="189.52" width="6.17" height="6.16" fill="#c8d0a0"/><rect x="159.18" y="189.52" width="6.17" height="6.16" fill="#c8d0a0"/><rect x="165.30" y="189.52" width="6.17" height="6.16" fill="#c8d8a8"/><rect x="171.42" y="189.52" width="12.29" height="6.16" fill="#c8d0a0"/><rect x="183.67" y="189.52" width="6.17" height="6.16" fill="#c8d8a8"/><rect x="189.79" y="189.52" width="12.29" height="6.16" fill="#c8d0a0"/><rect x="220.40" y="189.52" width="6.17" height="6.16" fill="#c0c898"/><rect x="226.52" y="189.52" width="6.17" height="6.16" fill="#98a878"/><rect x="232.64" y="189.52" width="6.17" height="6.16" fill="#a0a878"/><rect x="238.77" y="189.52" width="6.17" height="6.16" fill="#c8d0a0"/><rect x="251.01" y="189.52" width="6.17" height="6.16" fill="#c8d0a0"/><rect x="257.13" y="189.52" width="6.17" height="6.16" fill="#a0b080"/><rect x="263.26" y="189.52" width="6.17" height="6.16" fill="#98a070"/><rect x="269.38" y="189.52" width="6.17" height="6.16" fill="#90a070"/><rect x="12.24" y="195.63" width="6.17" height="6.16" fill="#b8c098"/><rect x="18.37" y="195.63" width="6.17" height="6.16" fill="#687050"/><rect x="24.49" y="195.63" width="18.42" height="6.16" fill="#585840"/><rect x="42.86" y="195.63" width="6.17" height="6.16" fill="#606848"/><rect x="48.98" y="195.63" width="6.17" height="6.16" fill="#889868"/><rect x="55.10" y="195.63" width="12.29" height="6.16" fill="#98a878"/><rect x="67.34" y="195.63" width="6.17" height="6.16" fill="#98a078"/><rect x="73.47" y="195.63" width="6.17" height="6.16" fill="#a0b080"/><rect x="79.59" y="195.63" width="6.17" height="6.16" fill="#a8b080"/><rect x="85.71" y="195.63" width="6.17" height="6.16" fill="#b0b888"/><rect x="91.83" y="195.63" width="6.17" height="6.16" fill="#c8d0a0"/><rect x="110.20" y="195.63" width="6.17" height="6.16" fill="#c8d0a0"/><rect x="116.32" y="195.63" width="6.17" height="6.16" fill="#a8b888"/><rect x="122.44" y="195.63" width="6.17" height="6.16" fill="#c0c898"/><rect x="214.28" y="195.63" width="6.17" height="6.16" fill="#c8d0a0"/><rect x="220.40" y="195.63" width="6.17" height="6.16" fill="#a0b080"/><rect x="226.52" y="195.63" width="6.17" height="6.16" fill="#98a070"/><rect x="232.64" y="195.63" width="6.17" height="6.16" fill="#a0a878"/><rect x="238.77" y="195.63" width="6.17" height="6.16" fill="#c8d0a0"/><rect x="251.01" y="195.63" width="6.17" height="6.16" fill="#c8d0a0"/><rect x="257.13" y="195.63" width="6.17" height="6.16" fill="#a0a878"/><rect x="263.26" y="195.63" width="12.29" height="6.16" fill="#90a070"/><rect x="12.24" y="201.74" width="6.17" height="6.16" fill="#b8c098"/><rect x="18.37" y="201.74" width="6.17" height="6.16" fill="#687050"/><rect x="24.49" y="201.74" width="18.42" height="6.16" fill="#585840"/><rect x="42.86" y="201.74" width="6.17" height="6.16" fill="#606848"/><rect x="48.98" y="201.74" width="6.17" height="6.16" fill="#909870"/><rect x="55.10" y="201.74" width="6.17" height="6.16" fill="#c0c898"/><rect x="61.22" y="201.74" width="30.66" height="6.16" fill="#c8d0a0"/><rect x="110.20" y="201.74" width="6.17" height="6.16" fill="#c0c898"/><rect x="116.32" y="201.74" width="6.17" height="6.16" fill="#a8b080"/><rect x="122.44" y="201.74" width="6.17" height="6.16" fill="#c8d0a0"/><rect x="214.28" y="201.74" width="6.17" height="6.16" fill="#c8d0a0"/><rect x="220.40" y="201.74" width="6.17" height="6.16" fill="#a0a878"/><rect x="226.52" y="201.74" width="6.17" height="6.16" fill="#98a070"/><rect x="232.64" y="201.74" width="6.17" height="6.16" fill="#a0b080"/><rect x="238.77" y="201.74" width="6.17" height="6.16" fill="#c0c898"/><rect x="251.01" y="201.74" width="6.17" height="6.16" fill="#c8d0a0"/><rect x="257.13" y="201.74" width="6.17" height="6.16" fill="#a0a878"/><rect x="263.26" y="201.74" width="12.29" height="6.16" fill="#90a070"/><rect x="12.24" y="207.86" width="6.17" height="6.16" fill="#b8c098"/><rect x="18.37" y="207.86" width="6.17" height="6.16" fill="#687050"/><rect x="24.49" y="207.86" width="18.42" height="6.16" fill="#585840"/><rect x="42.86" y="207.86" width="6.17" height="6.16" fill="#606848"/><rect x="48.98" y="207.86" width="6.17" height="6.16" fill="#90a070"/><rect x="55.10" y="207.86" width="6.17" height="6.16" fill="#c8d0a0"/><rect x="104.08" y="207.86" width="6.17" height="6.16" fill="#c8d0a0"/><rect x="110.20" y="207.86" width="6.17" height="6.16" fill="#a0b080"/><rect x="116.32" y="207.86" width="6.17" height="6.16" fill="#a0a878"/><rect x="122.44" y="207.86" width="6.17" height="6.16" fill="#c8d0a0"/><rect x="214.28" y="207.86" width="6.17" height="6.16" fill="#c8d0a0"/><rect x="220.40" y="207.86" width="6.17" height="6.16" fill="#a0a878"/><rect x="226.52" y="207.86" width="6.17" height="6.16" fill="#98a878"/><rect x="232.64" y="207.86" width="6.17" height="6.16" fill="#b8c090"/><rect x="238.77" y="207.86" width="6.17" height="6.16" fill="#b0b890"/><rect x="244.89" y="207.86" width="12.29" height="6.16" fill="#c8d0a0"/><rect x="257.13" y="207.86" width="6.17" height="6.16" fill="#a0a878"/><rect x="263.26" y="207.86" width="12.29" height="6.16" fill="#90a070"/><rect x="12.24" y="213.97" width="6.17" height="6.16" fill="#b8c098"/><rect x="18.37" y="213.97" width="6.17" height="6.16" fill="#687050"/><rect x="24.49" y="213.97" width="18.42" height="6.16" fill="#585840"/><rect x="42.86" y="213.97" width="6.17" height="6.16" fill="#606848"/><rect x="48.98" y="213.97" width="6.17" height="6.16" fill="#909870"/><rect x="55.10" y="213.97" width="6.17" height="6.16" fill="#c0d0a0"/><rect x="104.08" y="213.97" width="6.17" height="6.16" fill="#c8d0a0"/><rect x="110.20" y="213.97" width="12.29" height="6.16" fill="#a0a878"/><rect x="122.44" y="213.97" width="6.17" height="6.16" fill="#c8d0a0"/><rect x="214.28" y="213.97" width="6.17" height="6.16" fill="#c8d0a0"/><rect x="220.40" y="213.97" width="6.17" height="6.16" fill="#a0a878"/><rect x="226.52" y="213.97" width="6.17" height="6.16" fill="#a0b080"/><rect x="232.64" y="213.97" width="12.29" height="6.16" fill="#c8d0a0"/><rect x="251.01" y="213.97" width="6.17" height="6.16" fill="#c8d0a0"/><rect x="257.13" y="213.97" width="6.17" height="6.16" fill="#a0a878"/><rect x="263.26" y="213.97" width="12.29" height="6.16" fill="#90a070"/><rect x="12.24" y="220.08" width="6.17" height="6.16" fill="#b8c098"/><rect x="18.37" y="220.08" width="6.17" height="6.16" fill="#687050"/><rect x="24.49" y="220.08" width="18.42" height="6.16" fill="#585840"/><rect x="42.86" y="220.08" width="6.17" height="6.16" fill="#586040"/><rect x="48.98" y="220.08" width="6.17" height="6.16" fill="#707858"/><rect x="55.10" y="220.08" width="6.17" height="6.16" fill="#b8c090"/><rect x="104.08" y="220.08" width="6.17" height="6.16" fill="#c0c898"/><rect x="110.20" y="220.08" width="6.17" height="6.16" fill="#98a878"/><rect x="116.32" y="220.08" width="6.17" height="6.16" fill="#a0a878"/><rect x="122.44" y="220.08" width="6.17" height="6.16" fill="#c8d0a0"/><rect x="214.28" y="220.08" width="6.17" height="6.16" fill="#c8d0a0"/><rect x="220.40" y="220.08" width="6.17" height="6.16" fill="#a8b080"/><rect x="226.52" y="220.08" width="6.17" height="6.16" fill="#c0c898"/><rect x="251.01" y="220.08" width="6.17" height="6.16" fill="#c0c898"/><rect x="257.13" y="220.08" width="6.17" height="6.16" fill="#98a878"/><rect x="263.26" y="220.08" width="12.29" height="6.16" fill="#90a070"/><rect x="12.24" y="226.20" width="6.17" height="6.16" fill="#c0c898"/><rect x="18.37" y="226.20" width="6.17" height="6.16" fill="#707858"/><rect x="24.49" y="226.20" width="6.17" height="6.16" fill="#586040"/><rect x="30.61" y="226.20" width="18.42" height="6.16" fill="#585840"/><rect x="48.98" y="226.20" width="6.17" height="6.16" fill="#606848"/><rect x="55.10" y="226.20" width="6.17" height="6.16" fill="#98a078"/><rect x="61.22" y="226.20" width="6.17" height="6.16" fill="#c8d0a0"/><rect x="97.96" y="226.20" width="6.17" height="6.16" fill="#c8d0a0"/><rect x="104.08" y="226.20" width="6.17" height="6.16" fill="#a0b080"/><rect x="110.20" y="226.20" width="6.17" height="6.16" fill="#98a070"/><rect x="116.32" y="226.20" width="6.17" height="6.16" fill="#a0a878"/><rect x="122.44" y="226.20" width="6.17" height="6.16" fill="#c8d0a0"/><rect x="214.28" y="226.20" width="6.17" height="6.16" fill="#c0c898"/><rect x="220.40" y="226.20" width="6.17" height="6.16" fill="#a8b080"/><rect x="226.52" y="226.20" width="6.17" height="6.16" fill="#c8d0a0"/><rect x="244.89" y="226.20" width="6.17" height="6.16" fill="#c8d0a0"/><rect x="251.01" y="226.20" width="6.17" height="6.16" fill="#a0b080"/><rect x="257.13" y="226.20" width="6.17" height="6.16" fill="#98a070"/><rect x="263.26" y="226.20" width="12.29" height="6.16" fill="#90a070"/><rect x="12.24" y="232.31" width="6.17" height="6.16" fill="#c0d0a0"/><rect x="18.37" y="232.31" width="6.17" height="6.16" fill="#909870"/><rect x="24.49" y="232.31" width="6.17" height="6.16" fill="#606848"/><rect x="30.61" y="232.31" width="18.42" height="6.16" fill="#585840"/><rect x="48.98" y="232.31" width="6.17" height="6.16" fill="#606848"/><rect x="55.10" y="232.31" width="6.17" height="6.16" fill="#90a070"/><rect x="61.22" y="232.31" width="6.17" height="6.16" fill="#c8d0a0"/><rect x="97.96" y="232.31" width="6.17" height="6.16" fill="#c8d0a0"/><rect x="104.08" y="232.31" width="6.17" height="6.16" fill="#a0a878"/><rect x="110.20" y="232.31" width="6.17" height="6.16" fill="#90a070"/><rect x="116.32" y="232.31" width="6.17" height="6.16" fill="#a0a878"/><rect x="122.44" y="232.31" width="6.17" height="6.16" fill="#c8d0a0"/><rect x="208.16" y="232.31" width="6.17" height="6.16" fill="#c8d0a0"/><rect x="214.28" y="232.31" width="6.17" height="6.16" fill="#a0b080"/><rect x="220.40" y="232.31" width="6.17" height="6.16" fill="#a0a878"/><rect x="226.52" y="232.31" width="6.17" height="6.16" fill="#c8d0a0"/><rect x="244.89" y="232.31" width="6.17" height="6.16" fill="#c0c898"/><rect x="251.01" y="232.31" width="6.17" height="6.16" fill="#98a878"/><rect x="257.13" y="232.31" width="18.42" height="6.16" fill="#90a070"/><rect x="12.24" y="238.42" width="6.17" height="6.16" fill="#c8d0a0"/><rect x="18.37" y="238.42" width="6.17" height="6.16" fill="#a0a878"/><rect x="24.49" y="238.42" width="6.17" height="6.16" fill="#707858"/><rect x="30.61" y="238.42" width="6.17" height="6.16" fill="#586040"/><rect x="36.73" y="238.42" width="12.29" height="6.16" fill="#585840"/><rect x="48.98" y="238.42" width="6.17" height="6.16" fill="#606848"/><rect x="55.10" y="238.42" width="6.17" height="6.16" fill="#889868"/><rect x="61.22" y="238.42" width="6.17" height="6.16" fill="#c0c898"/><rect x="67.34" y="238.42" width="6.17" height="6.16" fill="#c8d0a0"/><rect x="91.83" y="238.42" width="6.17" height="6.16" fill="#c8d0a8"/><rect x="97.96" y="238.42" width="6.17" height="6.16" fill="#b8c090"/><rect x="104.08" y="238.42" width="6.17" height="6.16" fill="#98a878"/><rect x="110.20" y="238.42" width="6.17" height="6.16" fill="#90a070"/><rect x="116.32" y="238.42" width="6.17" height="6.16" fill="#98a070"/><rect x="122.44" y="238.42" width="6.17" height="6.16" fill="#c0d0a0"/><rect x="208.16" y="238.42" width="6.17" height="6.16" fill="#c8d0a0"/><rect x="214.28" y="238.42" width="6.17" height="6.16" fill="#a0a878"/><rect x="220.40" y="238.42" width="6.17" height="6.16" fill="#a0b080"/><rect x="226.52" y="238.42" width="6.17" height="6.16" fill="#c8d0a0"/><rect x="238.77" y="238.42" width="6.17" height="6.16" fill="#c0c898"/><rect x="244.89" y="238.42" width="6.17" height="6.16" fill="#a0b080"/><rect x="251.01" y="238.42" width="6.17" height="6.16" fill="#98a070"/><rect x="257.13" y="238.42" width="18.42" height="6.16" fill="#90a070"/><rect x="18.37" y="244.54" width="6.17" height="6.16" fill="#c8d0a0"/><rect x="24.49" y="244.54" width="6.17" height="6.16" fill="#b0b890"/><rect x="30.61" y="244.54" width="6.17" height="6.16" fill="#788060"/><rect x="36.73" y="244.54" width="6.17" height="6.16" fill="#687050"/><rect x="42.86" y="244.54" width="6.17" height="6.16" fill="#686850"/><rect x="48.98" y="244.54" width="6.17" height="6.16" fill="#586048"/><rect x="55.10" y="244.54" width="6.17" height="6.16" fill="#687050"/><rect x="61.22" y="244.54" width="6.17" height="6.16" fill="#90a070"/><rect x="67.34" y="244.54" width="6.17" height="6.16" fill="#a8b080"/><rect x="73.47" y="244.54" width="6.17" height="6.16" fill="#c8d0a0"/><rect x="91.83" y="244.54" width="6.17" height="6.16" fill="#c0c898"/><rect x="97.96" y="244.54" width="6.17" height="6.16" fill="#808860"/><rect x="104.08" y="244.54" width="6.17" height="6.16" fill="#889068"/><rect x="110.20" y="244.54" width="6.17" height="6.16" fill="#809060"/><rect x="116.32" y="244.54" width="6.17" height="6.16" fill="#788058"/><rect x="122.44" y="244.54" width="6.17" height="6.16" fill="#b0b888"/><rect x="128.57" y="244.54" width="12.29" height="6.16" fill="#c8d0a0"/><rect x="140.81" y="244.54" width="12.29" height="6.16" fill="#c0c898"/><rect x="153.06" y="244.54" width="6.17" height="6.16" fill="#c8d0a8"/><rect x="208.16" y="244.54" width="6.17" height="6.16" fill="#c8d0a0"/><rect x="214.28" y="244.54" width="6.17" height="6.16" fill="#a0b080"/><rect x="220.40" y="244.54" width="6.17" height="6.16" fill="#b8c090"/><rect x="226.52" y="244.54" width="6.17" height="6.16" fill="#c8d0a0"/><rect x="232.64" y="244.54" width="6.17" height="6.16" fill="#c0c898"/><rect x="238.77" y="244.54" width="6.17" height="6.16" fill="#a0b080"/><rect x="244.89" y="244.54" width="6.17" height="6.16" fill="#98a070"/><rect x="251.01" y="244.54" width="24.54" height="6.16" fill="#90a070"/><rect x="24.49" y="250.65" width="6.17" height="6.16" fill="#c8d0a8"/><rect x="30.61" y="250.65" width="6.17" height="6.16" fill="#c0c898"/><rect x="36.73" y="250.65" width="6.17" height="6.16" fill="#b8c098"/><rect x="42.86" y="250.65" width="6.17" height="6.16" fill="#b0b888"/><rect x="48.98" y="250.65" width="6.17" height="6.16" fill="#707050"/><rect x="55.10" y="250.65" width="6.17" height="6.16" fill="#606848"/><rect x="61.22" y="250.65" width="6.17" height="6.16" fill="#889868"/><rect x="67.34" y="250.65" width="6.17" height="6.16" fill="#98a878"/><rect x="73.47" y="250.65" width="6.17" height="6.16" fill="#c0c898"/><rect x="91.83" y="250.65" width="6.17" height="6.16" fill="#b8c090"/><rect x="97.96" y="250.65" width="6.17" height="6.16" fill="#687050"/><rect x="104.08" y="250.65" width="12.29" height="6.16" fill="#606848"/><rect x="116.32" y="250.65" width="6.17" height="6.16" fill="#586048"/><rect x="122.44" y="250.65" width="6.17" height="6.16" fill="#707858"/><rect x="128.57" y="250.65" width="6.17" height="6.16" fill="#a0a878"/><rect x="134.69" y="250.65" width="6.17" height="6.16" fill="#b8c098"/><rect x="140.81" y="250.65" width="12.29" height="6.16" fill="#889070"/><rect x="153.06" y="250.65" width="6.17" height="6.16" fill="#c0c898"/><rect x="208.16" y="250.65" width="6.17" height="6.16" fill="#c8d0a0"/><rect x="214.28" y="250.65" width="6.17" height="6.16" fill="#a0a878"/><rect x="220.40" y="250.65" width="6.17" height="6.16" fill="#98a878"/><rect x="226.52" y="250.65" width="6.17" height="6.16" fill="#a0a878"/><rect x="232.64" y="250.65" width="6.17" height="6.16" fill="#98a878"/><rect x="238.77" y="250.65" width="6.17" height="6.16" fill="#98a070"/><rect x="244.89" y="250.65" width="30.66" height="6.16" fill="#90a070"/><rect x="42.86" y="256.76" width="6.17" height="6.16" fill="#c0d0a0"/><rect x="48.98" y="256.76" width="6.17" height="6.16" fill="#909870"/><rect x="55.10" y="256.76" width="6.17" height="6.16" fill="#687050"/><rect x="61.22" y="256.76" width="6.17" height="6.16" fill="#809060"/><rect x="67.34" y="256.76" width="6.17" height="6.16" fill="#90a070"/><rect x="73.47" y="256.76" width="6.17" height="6.16" fill="#a0b080"/><rect x="79.59" y="256.76" width="12.29" height="6.16" fill="#c8d0a0"/><rect x="91.83" y="256.76" width="6.17" height="6.16" fill="#a0a880"/><rect x="97.96" y="256.76" width="6.17" height="6.16" fill="#687050"/><rect x="104.08" y="256.76" width="6.17" height="6.16" fill="#606848"/><rect x="110.20" y="256.76" width="6.17" height="6.16" fill="#586040"/><rect x="116.32" y="256.76" width="6.17" height="6.16" fill="#585840"/><rect x="122.44" y="256.76" width="6.17" height="6.16" fill="#606848"/><rect x="128.57" y="256.76" width="6.17" height="6.16" fill="#90a070"/><rect x="134.69" y="256.76" width="18.42" height="6.16" fill="#c0c898"/><rect x="153.06" y="256.76" width="6.17" height="6.16" fill="#c8d0a8"/><rect x="208.16" y="256.76" width="6.17" height="6.16" fill="#c8d0a0"/><rect x="214.28" y="256.76" width="6.17" height="6.16" fill="#a0a878"/><rect x="220.40" y="256.76" width="55.15" height="6.16" fill="#90a070"/><rect x="42.86" y="262.88" width="6.17" height="6.16" fill="#c8d0a0"/><rect x="48.98" y="262.88" width="6.17" height="6.16" fill="#90a070"/><rect x="55.10" y="262.88" width="6.17" height="6.16" fill="#606848"/><rect x="61.22" y="262.88" width="6.17" height="6.16" fill="#686850"/><rect x="67.34" y="262.88" width="6.17" height="6.16" fill="#889068"/><rect x="73.47" y="262.88" width="6.17" height="6.16" fill="#98a878"/><rect x="79.59" y="262.88" width="6.17" height="6.16" fill="#c0c898"/><rect x="85.71" y="262.88" width="6.17" height="6.16" fill="#c8d0a0"/><rect x="91.83" y="262.88" width="6.17" height="6.16" fill="#b8c090"/><rect x="97.96" y="262.88" width="6.17" height="6.16" fill="#909870"/><rect x="104.08" y="262.88" width="6.17" height="6.16" fill="#809060"/><rect x="110.20" y="262.88" width="12.29" height="6.16" fill="#687050"/><rect x="122.44" y="262.88" width="6.17" height="6.16" fill="#707858"/><rect x="128.57" y="262.88" width="6.17" height="6.16" fill="#a0a878"/><rect x="134.69" y="262.88" width="6.17" height="6.16" fill="#c8d0a0"/><rect x="208.16" y="262.88" width="6.17" height="6.16" fill="#c8d0a0"/><rect x="214.28" y="262.88" width="6.17" height="6.16" fill="#a0a878"/><rect x="220.40" y="262.88" width="55.15" height="6.16" fill="#90a070"/><rect x="42.86" y="268.99" width="6.17" height="6.16" fill="#c8d0a0"/><rect x="48.98" y="268.99" width="6.17" height="6.16" fill="#90a070"/><rect x="55.10" y="268.99" width="6.17" height="6.16" fill="#606848"/><rect x="61.22" y="268.99" width="6.17" height="6.16" fill="#586040"/><rect x="67.34" y="268.99" width="6.17" height="6.16" fill="#687050"/><rect x="73.47" y="268.99" width="6.17" height="6.16" fill="#909868"/><rect x="79.59" y="268.99" width="6.17" height="6.16" fill="#98a878"/><rect x="85.71" y="268.99" width="6.17" height="6.16" fill="#a0a878"/><rect x="91.83" y="268.99" width="6.17" height="6.16" fill="#98a878"/><rect x="97.96" y="268.99" width="6.17" height="6.16" fill="#98a070"/><rect x="104.08" y="268.99" width="6.17" height="6.16" fill="#90a070"/><rect x="110.20" y="268.99" width="6.17" height="6.16" fill="#909870"/><rect x="116.32" y="268.99" width="6.17" height="6.16" fill="#a8b088"/><rect x="122.44" y="268.99" width="6.17" height="6.16" fill="#b8c098"/><rect x="128.57" y="268.99" width="6.17" height="6.16" fill="#c8d0a0"/><rect x="208.16" y="268.99" width="6.17" height="6.16" fill="#c0c898"/><rect x="214.28" y="268.99" width="6.17" height="6.16" fill="#98a878"/><rect x="220.40" y="268.99" width="55.15" height="6.16" fill="#90a070"/><rect x="42.86" y="275.10" width="6.17" height="6.16" fill="#c8d0a0"/><rect x="48.98" y="275.10" width="6.17" height="6.16" fill="#98a070"/><rect x="55.10" y="275.10" width="6.17" height="6.16" fill="#687050"/><rect x="61.22" y="275.10" width="6.17" height="6.16" fill="#586040"/><rect x="67.34" y="275.10" width="6.17" height="6.16" fill="#606848"/><rect x="73.47" y="275.10" width="6.17" height="6.16" fill="#889868"/><rect x="79.59" y="275.10" width="18.42" height="6.16" fill="#90a070"/><rect x="97.96" y="275.10" width="12.29" height="6.16" fill="#889868"/><rect x="110.20" y="275.10" width="6.17" height="6.16" fill="#889068"/><rect x="116.32" y="275.10" width="6.17" height="6.16" fill="#788060"/><rect x="122.44" y="275.10" width="6.17" height="6.16" fill="#b0b890"/><rect x="128.57" y="275.10" width="12.29" height="6.16" fill="#c0c898"/><rect x="140.81" y="275.10" width="12.29" height="6.16" fill="#b8c098"/><rect x="153.06" y="275.10" width="6.17" height="6.16" fill="#c0c898"/><rect x="159.18" y="275.10" width="12.29" height="6.16" fill="#c8d0a0"/><rect x="202.03" y="275.10" width="6.17" height="6.16" fill="#c8d0a0"/><rect x="208.16" y="275.10" width="6.17" height="6.16" fill="#a0b080"/><rect x="214.28" y="275.10" width="6.17" height="6.16" fill="#98a070"/><rect x="220.40" y="275.10" width="55.15" height="6.16" fill="#90a070"/><rect x="42.86" y="281.22" width="6.17" height="6.16" fill="#c8d0a0"/><rect x="48.98" y="281.22" width="6.17" height="6.16" fill="#98a878"/><rect x="55.10" y="281.22" width="6.17" height="6.16" fill="#809060"/><rect x="61.22" y="281.22" width="12.29" height="6.16" fill="#606848"/><rect x="73.47" y="281.22" width="6.17" height="6.16" fill="#889868"/><rect x="79.59" y="281.22" width="6.17" height="6.16" fill="#90a070"/><rect x="85.71" y="281.22" width="6.17" height="6.16" fill="#98a070"/><rect x="91.83" y="281.22" width="6.17" height="6.16" fill="#90a070"/><rect x="97.96" y="281.22" width="6.17" height="6.16" fill="#707858"/><rect x="104.08" y="281.22" width="12.29" height="6.16" fill="#687050"/><rect x="116.32" y="281.22" width="6.17" height="6.16" fill="#586048"/><rect x="122.44" y="281.22" width="6.17" height="6.16" fill="#707858"/><rect x="128.57" y="281.22" width="6.17" height="6.16" fill="#909870"/><rect x="134.69" y="281.22" width="6.17" height="6.16" fill="#808868"/><rect x="140.81" y="281.22" width="12.29" height="6.16" fill="#808060"/><rect x="153.06" y="281.22" width="6.17" height="6.16" fill="#889070"/><rect x="159.18" y="281.22" width="6.17" height="6.16" fill="#b8c098"/><rect x="165.30" y="281.22" width="6.17" height="6.16" fill="#b0c090"/><rect x="171.42" y="281.22" width="6.17" height="6.16" fill="#c8d0a0"/><rect x="202.03" y="281.22" width="6.17" height="6.16" fill="#c0c898"/><rect x="208.16" y="281.22" width="6.17" height="6.16" fill="#98a878"/><rect x="214.28" y="281.22" width="61.27" height="6.16" fill="#90a070"/><rect x="42.86" y="287.33" width="6.17" height="6.16" fill="#c8d0a0"/><rect x="48.98" y="287.33" width="6.17" height="6.16" fill="#a8b080"/><rect x="55.10" y="287.33" width="6.17" height="6.16" fill="#90a070"/><rect x="61.22" y="287.33" width="6.17" height="6.16" fill="#687050"/><rect x="67.34" y="287.33" width="6.17" height="6.16" fill="#606848"/><rect x="73.47" y="287.33" width="6.17" height="6.16" fill="#809060"/><rect x="79.59" y="287.33" width="6.17" height="6.16" fill="#90a070"/><rect x="85.71" y="287.33" width="6.17" height="6.16" fill="#98a878"/><rect x="91.83" y="287.33" width="6.17" height="6.16" fill="#b0b888"/><rect x="97.96" y="287.33" width="6.17" height="6.16" fill="#90a070"/><rect x="104.08" y="287.33" width="6.17" height="6.16" fill="#909870"/><rect x="110.20" y="287.33" width="6.17" height="6.16" fill="#889868"/><rect x="116.32" y="287.33" width="6.17" height="6.16" fill="#687050"/><rect x="122.44" y="287.33" width="6.17" height="6.16" fill="#707858"/><rect x="128.57" y="287.33" width="6.17" height="6.16" fill="#909870"/><rect x="134.69" y="287.33" width="6.17" height="6.16" fill="#b0b888"/><rect x="140.81" y="287.33" width="12.29" height="6.16" fill="#b8c098"/><rect x="153.06" y="287.33" width="6.17" height="6.16" fill="#c0c898"/><rect x="159.18" y="287.33" width="12.29" height="6.16" fill="#c8d0a0"/><rect x="195.91" y="287.33" width="6.17" height="6.16" fill="#c0c898"/><rect x="202.03" y="287.33" width="6.17" height="6.16" fill="#a0b080"/><rect x="208.16" y="287.33" width="6.17" height="6.16" fill="#98a070"/><rect x="214.28" y="287.33" width="61.27" height="6.16" fill="#90a070"/><rect x="42.86" y="293.44" width="6.17" height="6.16" fill="#c8d8a8"/><rect x="48.98" y="293.44" width="12.29" height="6.16" fill="#c0c898"/><rect x="61.22" y="293.44" width="6.17" height="6.16" fill="#909870"/><rect x="67.34" y="293.44" width="6.17" height="6.16" fill="#606848"/><rect x="73.47" y="293.44" width="6.17" height="6.16" fill="#686850"/><rect x="79.59" y="293.44" width="6.17" height="6.16" fill="#889068"/><rect x="85.71" y="293.44" width="6.17" height="6.16" fill="#90a070"/><rect x="91.83" y="293.44" width="12.29" height="6.16" fill="#98a878"/><rect x="104.08" y="293.44" width="6.17" height="6.16" fill="#b8c090"/><rect x="110.20" y="293.44" width="6.17" height="6.16" fill="#c0c898"/><rect x="116.32" y="293.44" width="6.17" height="6.16" fill="#a0a880"/><rect x="122.44" y="293.44" width="6.17" height="6.16" fill="#b0b888"/><rect x="128.57" y="293.44" width="6.17" height="6.16" fill="#a0b080"/><rect x="134.69" y="293.44" width="6.17" height="6.16" fill="#a8b888"/><rect x="140.81" y="293.44" width="6.17" height="6.16" fill="#c8d0a0"/><rect x="189.79" y="293.44" width="6.17" height="6.16" fill="#c0c898"/><rect x="195.91" y="293.44" width="6.17" height="6.16" fill="#a0b080"/><rect x="202.03" y="293.44" width="6.17" height="6.16" fill="#98a878"/><rect x="208.16" y="293.44" width="6.17" height="6.16" fill="#98a070"/><rect x="214.28" y="293.44" width="61.27" height="6.16" fill="#90a070"/><rect x="42.86" y="299.56" width="6.17" height="6.16" fill="#c8d0a0"/><rect x="48.98" y="299.56" width="6.17" height="6.16" fill="#b0b890"/><rect x="55.10" y="299.56" width="6.17" height="6.16" fill="#c0c898"/><rect x="61.22" y="299.56" width="6.17" height="6.16" fill="#b0b890"/><rect x="67.34" y="299.56" width="6.17" height="6.16" fill="#687050"/><rect x="73.47" y="299.56" width="6.17" height="6.16" fill="#606848"/><rect x="79.59" y="299.56" width="6.17" height="6.16" fill="#687050"/><rect x="85.71" y="299.56" width="6.17" height="6.16" fill="#809060"/><rect x="91.83" y="299.56" width="6.17" height="6.16" fill="#889868"/><rect x="97.96" y="299.56" width="6.17" height="6.16" fill="#90a070"/><rect x="104.08" y="299.56" width="6.17" height="6.16" fill="#a0b080"/><rect x="110.20" y="299.56" width="30.66" height="6.16" fill="#c0c898"/><rect x="140.81" y="299.56" width="6.17" height="6.16" fill="#c8d8a8"/><rect x="153.06" y="299.56" width="6.17" height="6.16" fill="#c8d0a0"/><rect x="183.67" y="299.56" width="6.17" height="6.16" fill="#c8d0a0"/><rect x="189.79" y="299.56" width="6.17" height="6.16" fill="#a8b080"/><rect x="195.91" y="299.56" width="6.17" height="6.16" fill="#a0b080"/><rect x="202.03" y="299.56" width="6.17" height="6.16" fill="#b8c090"/><rect x="208.16" y="299.56" width="6.17" height="6.16" fill="#98a878"/><rect x="214.28" y="299.56" width="61.27" height="6.16" fill="#90a070"/><rect x="48.98" y="305.67" width="6.17" height="6.16" fill="#c0c898"/><rect x="55.10" y="305.67" width="6.17" height="6.16" fill="#a8b888"/><rect x="61.22" y="305.67" width="6.17" height="6.16" fill="#b0b890"/><rect x="67.34" y="305.67" width="12.29" height="6.16" fill="#707858"/><rect x="79.59" y="305.67" width="12.29" height="6.16" fill="#606848"/><rect x="91.83" y="305.67" width="6.17" height="6.16" fill="#707850"/><rect x="97.96" y="305.67" width="6.17" height="6.16" fill="#909868"/><rect x="104.08" y="305.67" width="6.17" height="6.16" fill="#98a070"/><rect x="110.20" y="305.67" width="6.17" height="6.16" fill="#98a878"/><rect x="116.32" y="305.67" width="18.42" height="6.16" fill="#a0a878"/><rect x="134.69" y="305.67" width="6.17" height="6.16" fill="#a8b888"/><rect x="140.81" y="305.67" width="12.29" height="6.16" fill="#c8d0a0"/><rect x="153.06" y="305.67" width="6.17" height="6.16" fill="#b0c090"/><rect x="159.18" y="305.67" width="6.17" height="6.16" fill="#c8d0a0"/><rect x="183.67" y="305.67" width="6.17" height="6.16" fill="#c0c898"/><rect x="189.79" y="305.67" width="6.17" height="6.16" fill="#a8b888"/><rect x="195.91" y="305.67" width="6.17" height="6.16" fill="#c0c898"/><rect x="202.03" y="305.67" width="6.17" height="6.16" fill="#c8d0a0"/><rect x="208.16" y="305.67" width="6.17" height="6.16" fill="#a0a878"/><rect x="214.28" y="305.67" width="61.27" height="6.16" fill="#90a070"/><rect x="48.98" y="311.79" width="6.17" height="6.16" fill="#c8d0a0"/><rect x="55.10" y="311.79" width="6.17" height="6.16" fill="#a8b080"/><rect x="61.22" y="311.79" width="6.17" height="6.16" fill="#b0b888"/><rect x="67.34" y="311.79" width="6.17" height="6.16" fill="#707858"/><rect x="73.47" y="311.79" width="18.42" height="6.16" fill="#606848"/><rect x="91.83" y="311.79" width="6.17" height="6.16" fill="#809060"/><rect x="97.96" y="311.79" width="12.29" height="6.16" fill="#90a070"/><rect x="110.20" y="311.79" width="6.17" height="6.16" fill="#98a070"/><rect x="116.32" y="311.79" width="6.17" height="6.16" fill="#98a878"/><rect x="122.44" y="311.79" width="6.17" height="6.16" fill="#a0a878"/><rect x="128.57" y="311.79" width="6.17" height="6.16" fill="#a0b080"/><rect x="134.69" y="311.79" width="6.17" height="6.16" fill="#c0c898"/><rect x="153.06" y="311.79" width="6.17" height="6.16" fill="#c8d0a0"/><rect x="177.54" y="311.79" width="6.17" height="6.16" fill="#c0c898"/><rect x="183.67" y="311.79" width="6.17" height="6.16" fill="#b0b888"/><rect x="189.79" y="311.79" width="6.17" height="6.16" fill="#c0c898"/><rect x="202.03" y="311.79" width="6.17" height="6.16" fill="#c8d0a0"/><rect x="208.16" y="311.79" width="6.17" height="6.16" fill="#a0a878"/><rect x="214.28" y="311.79" width="61.27" height="6.16" fill="#90a070"/><rect x="48.98" y="317.90" width="6.17" height="6.16" fill="#c8d0a0"/><rect x="55.10" y="317.90" width="6.17" height="6.16" fill="#a0a878"/><rect x="61.22" y="317.90" width="6.17" height="6.16" fill="#98a078"/><rect x="67.34" y="317.90" width="6.17" height="6.16" fill="#889068"/><rect x="73.47" y="317.90" width="6.17" height="6.16" fill="#686850"/><rect x="79.59" y="317.90" width="6.17" height="6.16" fill="#708058"/><rect x="85.71" y="317.90" width="6.17" height="6.16" fill="#687050"/><rect x="91.83" y="317.90" width="6.17" height="6.16" fill="#889068"/><rect x="97.96" y="317.90" width="6.17" height="6.16" fill="#90a070"/><rect x="104.08" y="317.90" width="6.17" height="6.16" fill="#98a070"/><rect x="110.20" y="317.90" width="6.17" height="6.16" fill="#a0b080"/><rect x="116.32" y="317.90" width="6.17" height="6.16" fill="#c0c898"/><rect x="122.44" y="317.90" width="12.29" height="6.16" fill="#c8d0a0"/><rect x="171.42" y="317.90" width="6.17" height="6.16" fill="#c0c898"/><rect x="177.54" y="317.90" width="6.17" height="6.16" fill="#a8b888"/><rect x="183.67" y="317.90" width="6.17" height="6.16" fill="#c0c898"/><rect x="202.03" y="317.90" width="6.17" height="6.16" fill="#c0c898"/><rect x="208.16" y="317.90" width="6.17" height="6.16" fill="#98a878"/><rect x="214.28" y="317.90" width="61.27" height="6.16" fill="#90a070"/><rect x="48.98" y="324.01" width="6.17" height="6.16" fill="#c0c898"/><rect x="55.10" y="324.01" width="6.17" height="6.16" fill="#98a878"/><rect x="61.22" y="324.01" width="6.17" height="6.16" fill="#90a070"/><rect x="67.34" y="324.01" width="6.17" height="6.16" fill="#889868"/><rect x="73.47" y="324.01" width="12.29" height="6.16" fill="#606848"/><rect x="85.71" y="324.01" width="6.17" height="6.16" fill="#788058"/><rect x="91.83" y="324.01" width="6.17" height="6.16" fill="#707850"/><rect x="97.96" y="324.01" width="6.17" height="6.16" fill="#889868"/><rect x="104.08" y="324.01" width="6.17" height="6.16" fill="#98a878"/><rect x="110.20" y="324.01" width="6.17" height="6.16" fill="#b8c090"/><rect x="116.32" y="324.01" width="6.17" height="6.16" fill="#c8d8a8"/><rect x="165.30" y="324.01" width="6.17" height="6.16" fill="#c0c898"/><rect x="171.42" y="324.01" width="6.17" height="6.16" fill="#a0b080"/><rect x="177.54" y="324.01" width="6.17" height="6.16" fill="#a8b080"/><rect x="183.67" y="324.01" width="6.17" height="6.16" fill="#c8d0a0"/><rect x="195.91" y="324.01" width="6.17" height="6.16" fill="#c8d0a0"/><rect x="202.03" y="324.01" width="6.17" height="6.16" fill="#a0b080"/><rect x="208.16" y="324.01" width="6.17" height="6.16" fill="#98a070"/><rect x="214.28" y="324.01" width="61.27" height="6.16" fill="#90a070"/><rect x="42.86" y="330.13" width="6.17" height="6.16" fill="#c8d0a0"/><rect x="48.98" y="330.13" width="6.17" height="6.16" fill="#a0b080"/><rect x="55.10" y="330.13" width="6.17" height="6.16" fill="#98a070"/><rect x="61.22" y="330.13" width="6.17" height="6.16" fill="#90a070"/><rect x="67.34" y="330.13" width="6.17" height="6.16" fill="#889868"/><rect x="73.47" y="330.13" width="6.17" height="6.16" fill="#606848"/><rect x="79.59" y="330.13" width="6.17" height="6.16" fill="#586040"/><rect x="85.71" y="330.13" width="6.17" height="6.16" fill="#586048"/><rect x="91.83" y="330.13" width="6.17" height="6.16" fill="#606848"/><rect x="97.96" y="330.13" width="6.17" height="6.16" fill="#809060"/><rect x="104.08" y="330.13" width="6.17" height="6.16" fill="#90a070"/><rect x="110.20" y="330.13" width="6.17" height="6.16" fill="#a0b080"/><rect x="116.32" y="330.13" width="6.17" height="6.16" fill="#c8d0a0"/><rect x="159.18" y="330.13" width="6.17" height="6.16" fill="#c0c898"/><rect x="165.30" y="330.13" width="12.29" height="6.16" fill="#a0b080"/><rect x="177.54" y="330.13" width="6.17" height="6.16" fill="#c0c898"/><rect x="195.91" y="330.13" width="6.17" height="6.16" fill="#c8d0a0"/><rect x="202.03" y="330.13" width="6.17" height="6.16" fill="#a0b080"/><rect x="208.16" y="330.13" width="6.17" height="6.16" fill="#98a070"/><rect x="214.28" y="330.13" width="61.27" height="6.16" fill="#90a070"/><rect x="42.86" y="336.24" width="6.17" height="6.16" fill="#c8d0a0"/><rect x="48.98" y="336.24" width="6.17" height="6.16" fill="#a0a878"/><rect x="55.10" y="336.24" width="12.29" height="6.16" fill="#90a070"/><rect x="67.34" y="336.24" width="6.17" height="6.16" fill="#889868"/><rect x="73.47" y="336.24" width="6.17" height="6.16" fill="#606848"/><rect x="79.59" y="336.24" width="12.29" height="6.16" fill="#585840"/><rect x="91.83" y="336.24" width="6.17" height="6.16" fill="#586040"/><rect x="97.96" y="336.24" width="6.17" height="6.16" fill="#687050"/><rect x="104.08" y="336.24" width="6.17" height="6.16" fill="#889868"/><rect x="110.20" y="336.24" width="6.17" height="6.16" fill="#98a878"/><rect x="116.32" y="336.24" width="6.17" height="6.16" fill="#c0c898"/><rect x="122.44" y="336.24" width="18.42" height="6.16" fill="#c8d0a0"/><rect x="140.81" y="336.24" width="6.17" height="6.16" fill="#c8d8a8"/><rect x="146.93" y="336.24" width="6.17" height="6.16" fill="#c8d0a0"/><rect x="153.06" y="336.24" width="6.17" height="6.16" fill="#c0c898"/><rect x="159.18" y="336.24" width="12.29" height="6.16" fill="#a0b080"/><rect x="171.42" y="336.24" width="6.17" height="6.16" fill="#c0c898"/><rect x="202.03" y="336.24" width="6.17" height="6.16" fill="#c0c898"/><rect x="208.16" y="336.24" width="6.17" height="6.16" fill="#98a878"/><rect x="214.28" y="336.24" width="12.29" height="6.16" fill="#90a070"/><rect x="226.52" y="336.24" width="6.17" height="6.16" fill="#98a070"/><rect x="232.64" y="336.24" width="6.17" height="6.16" fill="#98a878"/><rect x="238.77" y="336.24" width="6.17" height="6.16" fill="#98a070"/><rect x="244.89" y="336.24" width="30.66" height="6.16" fill="#90a070"/><rect x="42.86" y="342.35" width="6.17" height="6.16" fill="#c8d0a0"/><rect x="48.98" y="342.35" width="6.17" height="6.16" fill="#a0a878"/><rect x="55.10" y="342.35" width="12.29" height="6.16" fill="#90a070"/><rect x="67.34" y="342.35" width="6.17" height="6.16" fill="#889868"/><rect x="73.47" y="342.35" width="6.17" height="6.16" fill="#687050"/><rect x="79.59" y="342.35" width="12.29" height="6.16" fill="#586040"/><rect x="91.83" y="342.35" width="6.17" height="6.16" fill="#586048"/><rect x="97.96" y="342.35" width="6.17" height="6.16" fill="#606848"/><rect x="104.08" y="342.35" width="6.17" height="6.16" fill="#809060"/><rect x="110.20" y="342.35" width="6.17" height="6.16" fill="#90a070"/><rect x="116.32" y="342.35" width="6.17" height="6.16" fill="#98a878"/><rect x="122.44" y="342.35" width="12.29" height="6.16" fill="#a0a878"/><rect x="134.69" y="342.35" width="6.17" height="6.16" fill="#a0b080"/><rect x="140.81" y="342.35" width="6.17" height="6.16" fill="#b8c090"/><rect x="146.93" y="342.35" width="6.17" height="6.16" fill="#a0b080"/><rect x="153.06" y="342.35" width="6.17" height="6.16" fill="#a0a878"/><rect x="159.18" y="342.35" width="6.17" height="6.16" fill="#a0b080"/><rect x="165.30" y="342.35" width="6.17" height="6.16" fill="#c0c898"/><rect x="202.03" y="342.35" width="6.17" height="6.16" fill="#c8d0a0"/><rect x="208.16" y="342.35" width="6.17" height="6.16" fill="#a0a878"/><rect x="214.28" y="342.35" width="12.29" height="6.16" fill="#90a070"/><rect x="226.52" y="342.35" width="6.17" height="6.16" fill="#98a878"/><rect x="232.64" y="342.35" width="6.17" height="6.16" fill="#b0b888"/><rect x="238.77" y="342.35" width="6.17" height="6.16" fill="#a0b080"/><rect x="244.89" y="342.35" width="6.17" height="6.16" fill="#98a878"/><rect x="251.01" y="342.35" width="6.17" height="6.16" fill="#98a070"/><rect x="257.13" y="342.35" width="18.42" height="6.16" fill="#90a070"/><rect x="0.00" y="348.47" width="6.17" height="6.16" fill="#c8d0a0"/><rect x="42.86" y="348.47" width="6.17" height="6.16" fill="#c8d0a0"/><rect x="48.98" y="348.47" width="6.17" height="6.16" fill="#a0a878"/><rect x="55.10" y="348.47" width="18.42" height="6.16" fill="#90a070"/><rect x="73.47" y="348.47" width="6.17" height="6.16" fill="#809060"/><rect x="79.59" y="348.47" width="6.17" height="6.16" fill="#606848"/><rect x="85.71" y="348.47" width="6.17" height="6.16" fill="#586048"/><rect x="91.83" y="348.47" width="6.17" height="6.16" fill="#708058"/><rect x="97.96" y="348.47" width="6.17" height="6.16" fill="#687050"/><rect x="104.08" y="348.47" width="6.17" height="6.16" fill="#707850"/><rect x="110.20" y="348.47" width="6.17" height="6.16" fill="#909868"/><rect x="116.32" y="348.47" width="18.42" height="6.16" fill="#90a070"/><rect x="134.69" y="348.47" width="6.17" height="6.16" fill="#98a070"/><rect x="140.81" y="348.47" width="6.17" height="6.16" fill="#98a878"/><rect x="146.93" y="348.47" width="6.17" height="6.16" fill="#98a070"/><rect x="153.06" y="348.47" width="6.17" height="6.16" fill="#a0b080"/><rect x="159.18" y="348.47" width="6.17" height="6.16" fill="#c0c898"/><rect x="202.03" y="348.47" width="6.17" height="6.16" fill="#c8d0a0"/><rect x="208.16" y="348.47" width="6.17" height="6.16" fill="#a8b080"/><rect x="214.28" y="348.47" width="6.17" height="6.16" fill="#a0a878"/><rect x="220.40" y="348.47" width="6.17" height="6.16" fill="#98a878"/><rect x="226.52" y="348.47" width="6.17" height="6.16" fill="#98a078"/><rect x="232.64" y="348.47" width="6.17" height="6.16" fill="#a8b080"/><rect x="238.77" y="348.47" width="12.29" height="6.16" fill="#c0c898"/><rect x="251.01" y="348.47" width="6.17" height="6.16" fill="#98a878"/><rect x="257.13" y="348.47" width="18.42" height="6.16" fill="#90a070"/><rect x="0.00" y="354.58" width="6.17" height="6.16" fill="#a0b080"/><rect x="6.12" y="354.58" width="6.17" height="6.16" fill="#c0c898"/><rect x="42.86" y="354.58" width="6.17" height="6.16" fill="#c8d0a0"/><rect x="48.98" y="354.58" width="6.17" height="6.16" fill="#a0a878"/><rect x="55.10" y="354.58" width="18.42" height="6.16" fill="#90a070"/><rect x="73.47" y="354.58" width="6.17" height="6.16" fill="#889868"/><rect x="79.59" y="354.58" width="6.17" height="6.16" fill="#606848"/><rect x="85.71" y="354.58" width="6.17" height="6.16" fill="#586040"/><rect x="91.83" y="354.58" width="6.17" height="6.16" fill="#686850"/><rect x="97.96" y="354.58" width="6.17" height="6.16" fill="#809060"/><rect x="104.08" y="354.58" width="6.17" height="6.16" fill="#889868"/><rect x="110.20" y="354.58" width="30.66" height="6.16" fill="#90a070"/><rect x="140.81" y="354.58" width="6.17" height="6.16" fill="#98a070"/><rect x="146.93" y="354.58" width="6.17" height="6.16" fill="#a0b080"/><rect x="153.06" y="354.58" width="6.17" height="6.16" fill="#c0c898"/><rect x="208.16" y="354.58" width="12.29" height="6.16" fill="#c8d0a0"/><rect x="220.40" y="354.58" width="6.17" height="6.16" fill="#b8c090"/><rect x="226.52" y="354.58" width="6.17" height="6.16" fill="#a8b080"/><rect x="232.64" y="354.58" width="6.17" height="6.16" fill="#c0c898"/><rect x="244.89" y="354.58" width="6.17" height="6.16" fill="#c8d0a0"/><rect x="251.01" y="354.58" width="6.17" height="6.16" fill="#a8b080"/><rect x="257.13" y="354.58" width="6.17" height="6.16" fill="#98a878"/><rect x="263.26" y="354.58" width="6.17" height="6.16" fill="#98a070"/><rect x="269.38" y="354.58" width="6.17" height="6.16" fill="#90a070"/><rect x="0.00" y="360.69" width="6.17" height="6.16" fill="#98a070"/><rect x="6.12" y="360.69" width="6.17" height="6.16" fill="#a0b080"/><rect x="12.24" y="360.69" width="6.17" height="6.16" fill="#c8d0a0"/><rect x="42.86" y="360.69" width="6.17" height="6.16" fill="#c8d0a0"/><rect x="48.98" y="360.69" width="6.17" height="6.16" fill="#a0a878"/><rect x="55.10" y="360.69" width="18.42" height="6.16" fill="#90a070"/><rect x="73.47" y="360.69" width="6.17" height="6.16" fill="#809060"/><rect x="79.59" y="360.69" width="6.17" height="6.16" fill="#606848"/><rect x="85.71" y="360.69" width="6.17" height="6.16" fill="#585840"/><rect x="91.83" y="360.69" width="6.17" height="6.16" fill="#606848"/><rect x="97.96" y="360.69" width="6.17" height="6.16" fill="#889868"/><rect x="104.08" y="360.69" width="24.54" height="6.16" fill="#90a070"/><rect x="128.57" y="360.69" width="6.17" height="6.16" fill="#909868"/><rect x="134.69" y="360.69" width="6.17" height="6.16" fill="#90a070"/><rect x="140.81" y="360.69" width="6.17" height="6.16" fill="#a0b080"/><rect x="146.93" y="360.69" width="6.17" height="6.16" fill="#c0c898"/><rect x="214.28" y="360.69" width="6.17" height="6.16" fill="#c8d0a0"/><rect x="220.40" y="360.69" width="6.17" height="6.16" fill="#b0b890"/><rect x="226.52" y="360.69" width="6.17" height="6.16" fill="#c0c898"/><rect x="251.01" y="360.69" width="6.17" height="6.16" fill="#c8d0a0"/><rect x="257.13" y="360.69" width="6.17" height="6.16" fill="#c0c898"/><rect x="263.26" y="360.69" width="6.17" height="6.16" fill="#a0b080"/><rect x="269.38" y="360.69" width="6.17" height="6.16" fill="#98a070"/><rect x="0.00" y="366.81" width="6.17" height="6.16" fill="#90a070"/><rect x="6.12" y="366.81" width="6.17" height="6.16" fill="#a0a878"/><rect x="12.24" y="366.81" width="6.17" height="6.16" fill="#c8d0a0"/><rect x="36.73" y="366.81" width="6.17" height="6.16" fill="#c8d0a8"/><rect x="42.86" y="366.81" width="6.17" height="6.16" fill="#b8c090"/><rect x="48.98" y="366.81" width="6.17" height="6.16" fill="#909870"/><rect x="55.10" y="366.81" width="12.29" height="6.16" fill="#889868"/><rect x="67.34" y="366.81" width="6.17" height="6.16" fill="#809060"/><rect x="73.47" y="366.81" width="6.17" height="6.16" fill="#686850"/><rect x="79.59" y="366.81" width="6.17" height="6.16" fill="#586040"/><rect x="85.71" y="366.81" width="6.17" height="6.16" fill="#585840"/><rect x="91.83" y="366.81" width="6.17" height="6.16" fill="#606848"/><rect x="97.96" y="366.81" width="6.17" height="6.16" fill="#889868"/><rect x="104.08" y="366.81" width="18.42" height="6.16" fill="#90a070"/><rect x="122.44" y="366.81" width="6.17" height="6.16" fill="#889068"/><rect x="128.57" y="366.81" width="6.17" height="6.16" fill="#788058"/><rect x="134.69" y="366.81" width="6.17" height="6.16" fill="#98a070"/><rect x="140.81" y="366.81" width="6.17" height="6.16" fill="#c0c898"/><rect x="220.40" y="366.81" width="6.17" height="6.16" fill="#c8d0a0"/><rect x="263.26" y="366.81" width="6.17" height="6.16" fill="#c0c898"/><rect x="269.38" y="366.81" width="6.17" height="6.16" fill="#98a878"/><rect x="0.00" y="372.92" width="6.17" height="6.16" fill="#90a070"/><rect x="6.12" y="372.92" width="6.17" height="6.16" fill="#a0a878"/><rect x="12.24" y="372.92" width="6.17" height="6.16" fill="#c8d0a0"/><rect x="18.37" y="372.92" width="6.17" height="6.16" fill="#c8d0a8"/><rect x="24.49" y="372.92" width="6.17" height="6.16" fill="#c0c898"/><rect x="30.61" y="372.92" width="6.17" height="6.16" fill="#b8c098"/><rect x="36.73" y="372.92" width="6.17" height="6.16" fill="#b0b888"/><rect x="42.86" y="372.92" width="6.17" height="6.16" fill="#787858"/><rect x="48.98" y="372.92" width="30.66" height="6.16" fill="#606848"/><rect x="79.59" y="372.92" width="6.17" height="6.16" fill="#586040"/><rect x="85.71" y="372.92" width="6.17" height="6.16" fill="#585840"/><rect x="91.83" y="372.92" width="6.17" height="6.16" fill="#606848"/><rect x="97.96" y="372.92" width="6.17" height="6.16" fill="#889868"/><rect x="104.08" y="372.92" width="12.29" height="6.16" fill="#90a070"/><rect x="116.32" y="372.92" width="6.17" height="6.16" fill="#909868"/><rect x="122.44" y="372.92" width="6.17" height="6.16" fill="#788058"/><rect x="128.57" y="372.92" width="6.17" height="6.16" fill="#889068"/><rect x="134.69" y="372.92" width="6.17" height="6.16" fill="#a0b080"/><rect x="140.81" y="372.92" width="6.17" height="6.16" fill="#c8d0a0"/><rect x="263.26" y="372.92" width="6.17" height="6.16" fill="#c8d0a0"/><rect x="269.38" y="372.92" width="6.17" height="6.16" fill="#a8b080"/><rect x="0.00" y="379.03" width="6.17" height="6.16" fill="#90a070"/><rect x="6.12" y="379.03" width="6.17" height="6.16" fill="#98a878"/><rect x="12.24" y="379.03" width="6.17" height="6.16" fill="#b8c090"/><rect x="18.37" y="379.03" width="6.17" height="6.16" fill="#b0b888"/><rect x="24.49" y="379.03" width="6.17" height="6.16" fill="#788060"/><rect x="30.61" y="379.03" width="6.17" height="6.16" fill="#687050"/><rect x="36.73" y="379.03" width="6.17" height="6.16" fill="#686850"/><rect x="42.86" y="379.03" width="6.17" height="6.16" fill="#586040"/><rect x="48.98" y="379.03" width="18.42" height="6.16" fill="#585840"/><rect x="67.34" y="379.03" width="6.17" height="6.16" fill="#606848"/><rect x="73.47" y="379.03" width="6.17" height="6.16" fill="#788058"/><rect x="79.59" y="379.03" width="6.17" height="6.16" fill="#606848"/><rect x="85.71" y="379.03" width="6.17" height="6.16" fill="#585840"/><rect x="91.83" y="379.03" width="6.17" height="6.16" fill="#606848"/><rect x="97.96" y="379.03" width="6.17" height="6.16" fill="#808860"/><rect x="104.08" y="379.03" width="6.17" height="6.16" fill="#889868"/><rect x="110.20" y="379.03" width="12.29" height="6.16" fill="#90a070"/><rect x="122.44" y="379.03" width="6.17" height="6.16" fill="#909868"/><rect x="128.57" y="379.03" width="6.17" height="6.16" fill="#98a078"/><rect x="134.69" y="379.03" width="6.17" height="6.16" fill="#b8c090"/><rect x="140.81" y="379.03" width="6.17" height="6.16" fill="#c8d8a8"/><rect x="269.38" y="379.03" width="6.17" height="6.16" fill="#c8d0a0"/><rect x="0.00" y="385.15" width="6.17" height="6.16" fill="#889868"/><rect x="6.12" y="385.15" width="6.17" height="6.16" fill="#889068"/><rect x="12.24" y="385.15" width="6.17" height="6.16" fill="#707858"/><rect x="18.37" y="385.15" width="6.17" height="6.16" fill="#686850"/><rect x="24.49" y="385.15" width="6.17" height="6.16" fill="#586040"/><rect x="30.61" y="385.15" width="36.78" height="6.16" fill="#585840"/><rect x="67.34" y="385.15" width="6.17" height="6.16" fill="#606848"/><rect x="73.47" y="385.15" width="6.17" height="6.16" fill="#808860"/><rect x="79.59" y="385.15" width="6.17" height="6.16" fill="#606848"/><rect x="85.71" y="385.15" width="6.17" height="6.16" fill="#585840"/><rect x="91.83" y="385.15" width="6.17" height="6.16" fill="#586040"/><rect x="97.96" y="385.15" width="6.17" height="6.16" fill="#606848"/><rect x="104.08" y="385.15" width="6.17" height="6.16" fill="#687050"/><rect x="110.20" y="385.15" width="6.17" height="6.16" fill="#889068"/><rect x="116.32" y="385.15" width="12.29" height="6.16" fill="#90a070"/><rect x="128.57" y="385.15" width="6.17" height="6.16" fill="#98a070"/><rect x="134.69" y="385.15" width="6.17" height="6.16" fill="#a0b080"/><rect x="140.81" y="385.15" width="6.17" height="6.16" fill="#c8d0a0"/><rect x="0.00" y="391.26" width="12.29" height="6.16" fill="#606848"/><rect x="12.24" y="391.26" width="6.17" height="6.16" fill="#586040"/><rect x="18.37" y="391.26" width="49.03" height="6.16" fill="#585840"/><rect x="67.34" y="391.26" width="6.17" height="6.16" fill="#606848"/><rect x="73.47" y="391.26" width="6.17" height="6.16" fill="#808860"/><rect x="79.59" y="391.26" width="6.17" height="6.16" fill="#606848"/><rect x="85.71" y="391.26" width="18.42" height="6.16" fill="#585840"/><rect x="104.08" y="391.26" width="6.17" height="6.16" fill="#586040"/><rect x="110.20" y="391.26" width="6.17" height="6.16" fill="#707850"/><rect x="116.32" y="391.26" width="6.17" height="6.16" fill="#909868"/><rect x="122.44" y="391.26" width="12.29" height="6.16" fill="#90a070"/><rect x="134.69" y="391.26" width="6.17" height="6.16" fill="#a0a878"/><rect x="140.81" y="391.26" width="6.17" height="6.16" fill="#c8d0a0"/><rect x="0.00" y="397.37" width="6.17" height="6.16" fill="#687050"/><rect x="6.12" y="397.37" width="6.17" height="6.16" fill="#686850"/><rect x="12.24" y="397.37" width="6.17" height="6.16" fill="#586040"/><rect x="18.37" y="397.37" width="49.03" height="6.16" fill="#585840"/><rect x="67.34" y="397.37" width="6.17" height="6.16" fill="#606848"/><rect x="73.47" y="397.37" width="6.17" height="6.16" fill="#808860"/><rect x="79.59" y="397.37" width="6.17" height="6.16" fill="#606848"/><rect x="85.71" y="397.37" width="6.17" height="6.16" fill="#585840"/><rect x="91.83" y="397.37" width="6.17" height="6.16" fill="#586040"/><rect x="97.96" y="397.37" width="6.17" height="6.16" fill="#606848"/><rect x="104.08" y="397.37" width="6.17" height="6.16" fill="#687050"/><rect x="110.20" y="397.37" width="6.17" height="6.16" fill="#889068"/><rect x="116.32" y="397.37" width="18.42" height="6.16" fill="#90a070"/><rect x="134.69" y="397.37" width="6.17" height="6.16" fill="#a0a878"/><rect x="140.81" y="397.37" width="6.17" height="6.16" fill="#c8d0a0"/><rect x="0.00" y="403.49" width="6.17" height="6.16" fill="#b8c098"/><rect x="6.12" y="403.49" width="6.17" height="6.16" fill="#a8b088"/><rect x="12.24" y="403.49" width="6.17" height="6.16" fill="#686850"/><rect x="18.37" y="403.49" width="49.03" height="6.16" fill="#585840"/><rect x="67.34" y="403.49" width="6.17" height="6.16" fill="#606848"/><rect x="73.47" y="403.49" width="6.17" height="6.16" fill="#808860"/><rect x="79.59" y="403.49" width="6.17" height="6.16" fill="#606848"/><rect x="85.71" y="403.49" width="6.17" height="6.16" fill="#585840"/><rect x="91.83" y="403.49" width="6.17" height="6.16" fill="#606848"/><rect x="97.96" y="403.49" width="6.17" height="6.16" fill="#808860"/><rect x="104.08" y="403.49" width="6.17" height="6.16" fill="#889868"/><rect x="110.20" y="403.49" width="24.54" height="6.16" fill="#90a070"/><rect x="134.69" y="403.49" width="6.17" height="6.16" fill="#a0a878"/><rect x="140.81" y="403.49" width="6.17" height="6.16" fill="#c8d0a0"/><rect x="275.5" y="-10" width="12" height="119.2" fill="#949f70"/></g><path d="M6.12 0 V409.6" stroke="#e4e6d6" stroke-opacity="0.36" stroke-width="0.6"/><path d="M12.24 0 V409.6" stroke="#e4e6d6" stroke-opacity="0.36" stroke-width="0.6"/><path d="M18.37 0 V409.6" stroke="#e4e6d6" stroke-opacity="0.36" stroke-width="0.6"/><path d="M24.49 0 V409.6" stroke="#e4e6d6" stroke-opacity="0.36" stroke-width="0.6"/><path d="M30.61 0 V409.6" stroke="#e4e6d6" stroke-opacity="0.36" stroke-width="0.6"/><path d="M36.73 0 V409.6" stroke="#e4e6d6" stroke-opacity="0.36" stroke-width="0.6"/><path d="M42.86 0 V409.6" stroke="#e4e6d6" stroke-opacity="0.36" stroke-width="0.6"/><path d="M48.98 0 V409.6" stroke="#e4e6d6" stroke-opacity="0.36" stroke-width="0.6"/><path d="M55.10 0 V409.6" stroke="#e4e6d6" stroke-opacity="0.36" stroke-width="0.6"/><path d="M61.22 0 V409.6" stroke="#e4e6d6" stroke-opacity="0.36" stroke-width="0.6"/><path d="M67.34 0 V409.6" stroke="#e4e6d6" stroke-opacity="0.36" stroke-width="0.6"/><path d="M73.47 0 V409.6" stroke="#e4e6d6" stroke-opacity="0.36" stroke-width="0.6"/><path d="M79.59 0 V409.6" stroke="#e4e6d6" stroke-opacity="0.36" stroke-width="0.6"/><path d="M85.71 0 V409.6" stroke="#e4e6d6" stroke-opacity="0.36" stroke-width="0.6"/><path d="M91.83 0 V409.6" stroke="#e4e6d6" stroke-opacity="0.36" stroke-width="0.6"/><path d="M97.96 0 V409.6" stroke="#e4e6d6" stroke-opacity="0.36" stroke-width="0.6"/><path d="M104.08 0 V409.6" stroke="#e4e6d6" stroke-opacity="0.36" stroke-width="0.6"/><path d="M110.20 0 V409.6" stroke="#e4e6d6" stroke-opacity="0.36" stroke-width="0.6"/><path d="M116.32 0 V409.6" stroke="#e4e6d6" stroke-opacity="0.36" stroke-width="0.6"/><path d="M122.44 0 V409.6" stroke="#e4e6d6" stroke-opacity="0.36" stroke-width="0.6"/><path d="M128.57 0 V409.6" stroke="#e4e6d6" stroke-opacity="0.36" stroke-width="0.6"/><path d="M134.69 0 V409.6" stroke="#e4e6d6" stroke-opacity="0.36" stroke-width="0.6"/><path d="M140.81 0 V409.6" stroke="#e4e6d6" stroke-opacity="0.36" stroke-width="0.6"/><path d="M146.93 0 V409.6" stroke="#e4e6d6" stroke-opacity="0.36" stroke-width="0.6"/><path d="M153.06 0 V409.6" stroke="#e4e6d6" stroke-opacity="0.36" stroke-width="0.6"/><path d="M159.18 0 V409.6" stroke="#e4e6d6" stroke-opacity="0.36" stroke-width="0.6"/><path d="M165.30 0 V409.6" stroke="#e4e6d6" stroke-opacity="0.36" stroke-width="0.6"/><path d="M171.42 0 V409.6" stroke="#e4e6d6" stroke-opacity="0.36" stroke-width="0.6"/><path d="M177.54 0 V409.6" stroke="#e4e6d6" stroke-opacity="0.36" stroke-width="0.6"/><path d="M183.67 0 V409.6" stroke="#e4e6d6" stroke-opacity="0.36" stroke-width="0.6"/><path d="M189.79 0 V409.6" stroke="#e4e6d6" stroke-opacity="0.36" stroke-width="0.6"/><path d="M195.91 0 V409.6" stroke="#e4e6d6" stroke-opacity="0.36" stroke-width="0.6"/><path d="M202.03 0 V409.6" stroke="#e4e6d6" stroke-opacity="0.36" stroke-width="0.6"/><path d="M208.16 0 V409.6" stroke="#e4e6d6" stroke-opacity="0.36" stroke-width="0.6"/><path d="M214.28 0 V409.6" stroke="#e4e6d6" stroke-opacity="0.36" stroke-width="0.6"/><path d="M220.40 0 V409.6" stroke="#e4e6d6" stroke-opacity="0.36" stroke-width="0.6"/><path d="M226.52 0 V409.6" stroke="#e4e6d6" stroke-opacity="0.36" stroke-width="0.6"/><path d="M232.64 0 V409.6" stroke="#e4e6d6" stroke-opacity="0.36" stroke-width="0.6"/><path d="M238.77 0 V409.6" stroke="#e4e6d6" stroke-opacity="0.36" stroke-width="0.6"/><path d="M244.89 0 V409.6" stroke="#e4e6d6" stroke-opacity="0.36" stroke-width="0.6"/><path d="M251.01 0 V409.6" stroke="#e4e6d6" stroke-opacity="0.36" stroke-width="0.6"/><path d="M257.13 0 V409.6" stroke="#e4e6d6" stroke-opacity="0.36" stroke-width="0.6"/><path d="M263.26 0 V409.6" stroke="#e4e6d6" stroke-opacity="0.36" stroke-width="0.6"/><path d="M269.38 0 V409.6" stroke="#e4e6d6" stroke-opacity="0.36" stroke-width="0.6"/><path d="M0 6.11 H275.5" stroke="#e4e6d6" stroke-opacity="0.36" stroke-width="0.6"/><path d="M0 12.23 H275.5" stroke="#e4e6d6" stroke-opacity="0.36" stroke-width="0.6"/><path d="M0 18.34 H275.5" stroke="#e4e6d6" stroke-opacity="0.36" stroke-width="0.6"/><path d="M0 24.45 H275.5" stroke="#e4e6d6" stroke-opacity="0.36" stroke-width="0.6"/><path d="M0 30.57 H275.5" stroke="#e4e6d6" stroke-opacity="0.36" stroke-width="0.6"/><path d="M0 36.68 H275.5" stroke="#e4e6d6" stroke-opacity="0.36" stroke-width="0.6"/><path d="M0 42.79 H275.5" stroke="#e4e6d6" stroke-opacity="0.36" stroke-width="0.6"/><path d="M0 48.91 H275.5" stroke="#e4e6d6" stroke-opacity="0.36" stroke-width="0.6"/><path d="M0 55.02 H275.5" stroke="#e4e6d6" stroke-opacity="0.36" stroke-width="0.6"/><path d="M0 61.13 H275.5" stroke="#e4e6d6" stroke-opacity="0.36" stroke-width="0.6"/><path d="M0 67.25 H275.5" stroke="#e4e6d6" stroke-opacity="0.36" stroke-width="0.6"/><path d="M0 73.36 H275.5" stroke="#e4e6d6" stroke-opacity="0.36" stroke-width="0.6"/><path d="M0 79.47 H275.5" stroke="#e4e6d6" stroke-opacity="0.36" stroke-width="0.6"/><path d="M0 85.59 H275.5" stroke="#e4e6d6" stroke-opacity="0.36" stroke-width="0.6"/><path d="M0 91.70 H275.5" stroke="#e4e6d6" stroke-opacity="0.36" stroke-width="0.6"/><path d="M0 97.81 H275.5" stroke="#e4e6d6" stroke-opacity="0.36" stroke-width="0.6"/><path d="M0 103.93 H275.5" stroke="#e4e6d6" stroke-opacity="0.36" stroke-width="0.6"/><path d="M0 110.04 H275.5" stroke="#e4e6d6" stroke-opacity="0.36" stroke-width="0.6"/><path d="M0 116.16 H275.5" stroke="#e4e6d6" stroke-opacity="0.36" stroke-width="0.6"/><path d="M0 122.27 H275.5" stroke="#e4e6d6" stroke-opacity="0.36" stroke-width="0.6"/><path d="M0 128.38 H275.5" stroke="#e4e6d6" stroke-opacity="0.36" stroke-width="0.6"/><path d="M0 134.50 H275.5" stroke="#e4e6d6" stroke-opacity="0.36" stroke-width="0.6"/><path d="M0 140.61 H275.5" stroke="#e4e6d6" stroke-opacity="0.36" stroke-width="0.6"/><path d="M0 146.72 H275.5" stroke="#e4e6d6" stroke-opacity="0.36" stroke-width="0.6"/><path d="M0 152.84 H275.5" stroke="#e4e6d6" stroke-opacity="0.36" stroke-width="0.6"/><path d="M0 158.95 H275.5" stroke="#e4e6d6" stroke-opacity="0.36" stroke-width="0.6"/><path d="M0 165.06 H275.5" stroke="#e4e6d6" stroke-opacity="0.36" stroke-width="0.6"/><path d="M0 171.18 H275.5" stroke="#e4e6d6" stroke-opacity="0.36" stroke-width="0.6"/><path d="M0 177.29 H275.5" stroke="#e4e6d6" stroke-opacity="0.36" stroke-width="0.6"/><path d="M0 183.40 H275.5" stroke="#e4e6d6" stroke-opacity="0.36" stroke-width="0.6"/><path d="M0 189.52 H275.5" stroke="#e4e6d6" stroke-opacity="0.36" stroke-width="0.6"/><path d="M0 195.63 H275.5" stroke="#e4e6d6" stroke-opacity="0.36" stroke-width="0.6"/><path d="M0 201.74 H275.5" stroke="#e4e6d6" stroke-opacity="0.36" stroke-width="0.6"/><path d="M0 207.86 H275.5" stroke="#e4e6d6" stroke-opacity="0.36" stroke-width="0.6"/><path d="M0 213.97 H275.5" stroke="#e4e6d6" stroke-opacity="0.36" stroke-width="0.6"/><path d="M0 220.08 H275.5" stroke="#e4e6d6" stroke-opacity="0.36" stroke-width="0.6"/><path d="M0 226.20 H275.5" stroke="#e4e6d6" stroke-opacity="0.36" stroke-width="0.6"/><path d="M0 232.31 H275.5" stroke="#e4e6d6" stroke-opacity="0.36" stroke-width="0.6"/><path d="M0 238.42 H275.5" stroke="#e4e6d6" stroke-opacity="0.36" stroke-width="0.6"/><path d="M0 244.54 H275.5" stroke="#e4e6d6" stroke-opacity="0.36" stroke-width="0.6"/><path d="M0 250.65 H275.5" stroke="#e4e6d6" stroke-opacity="0.36" stroke-width="0.6"/><path d="M0 256.76 H275.5" stroke="#e4e6d6" stroke-opacity="0.36" stroke-width="0.6"/><path d="M0 262.88 H275.5" stroke="#e4e6d6" stroke-opacity="0.36" stroke-width="0.6"/><path d="M0 268.99 H275.5" stroke="#e4e6d6" stroke-opacity="0.36" stroke-width="0.6"/><path d="M0 275.10 H275.5" stroke="#e4e6d6" stroke-opacity="0.36" stroke-width="0.6"/><path d="M0 281.22 H275.5" stroke="#e4e6d6" stroke-opacity="0.36" stroke-width="0.6"/><path d="M0 287.33 H275.5" stroke="#e4e6d6" stroke-opacity="0.36" stroke-width="0.6"/><path d="M0 293.44 H275.5" stroke="#e4e6d6" stroke-opacity="0.36" stroke-width="0.6"/><path d="M0 299.56 H275.5" stroke="#e4e6d6" stroke-opacity="0.36" stroke-width="0.6"/><path d="M0 305.67 H275.5" stroke="#e4e6d6" stroke-opacity="0.36" stroke-width="0.6"/><path d="M0 311.79 H275.5" stroke="#e4e6d6" stroke-opacity="0.36" stroke-width="0.6"/><path d="M0 317.90 H275.5" stroke="#e4e6d6" stroke-opacity="0.36" stroke-width="0.6"/><path d="M0 324.01 H275.5" stroke="#e4e6d6" stroke-opacity="0.36" stroke-width="0.6"/><path d="M0 330.13 H275.5" stroke="#e4e6d6" stroke-opacity="0.36" stroke-width="0.6"/><path d="M0 336.24 H275.5" stroke="#e4e6d6" stroke-opacity="0.36" stroke-width="0.6"/><path d="M0 342.35 H275.5" stroke="#e4e6d6" stroke-opacity="0.36" stroke-width="0.6"/><path d="M0 348.47 H275.5" stroke="#e4e6d6" stroke-opacity="0.36" stroke-width="0.6"/><path d="M0 354.58 H275.5" stroke="#e4e6d6" stroke-opacity="0.36" stroke-width="0.6"/><path d="M0 360.69 H275.5" stroke="#e4e6d6" stroke-opacity="0.36" stroke-width="0.6"/><path d="M0 366.81 H275.5" stroke="#e4e6d6" stroke-opacity="0.36" stroke-width="0.6"/><path d="M0 372.92 H275.5" stroke="#e4e6d6" stroke-opacity="0.36" stroke-width="0.6"/><path d="M0 379.03 H275.5" stroke="#e4e6d6" stroke-opacity="0.36" stroke-width="0.6"/><path d="M0 385.15 H275.5" stroke="#e4e6d6" stroke-opacity="0.36" stroke-width="0.6"/><path d="M0 391.26 H275.5" stroke="#e4e6d6" stroke-opacity="0.36" stroke-width="0.6"/><path d="M0 397.37 H275.5" stroke="#e4e6d6" stroke-opacity="0.36" stroke-width="0.6"/><path d="M0 403.49 H275.5" stroke="#e4e6d6" stroke-opacity="0.36" stroke-width="0.6"/><path d="M0.00 0 V409.6" stroke="#54564a" stroke-opacity="0.72" stroke-width="0.6"/><path d="M13.78 0 V409.6" stroke="#54564a" stroke-opacity="0.72" stroke-width="0.6"/><path d="M27.55 0 V409.6" stroke="#54564a" stroke-opacity="0.72" stroke-width="0.6"/><path d="M41.33 0 V409.6" stroke="#54564a" stroke-opacity="0.72" stroke-width="0.6"/><path d="M55.10 0 V409.6" stroke="#54564a" stroke-opacity="0.72" stroke-width="0.6"/><path d="M68.88 0 V409.6" stroke="#54564a" stroke-opacity="0.72" stroke-width="0.6"/><path d="M82.65 0 V409.6" stroke="#54564a" stroke-opacity="0.72" stroke-width="0.6"/><path d="M96.42 0 V409.6" stroke="#54564a" stroke-opacity="0.72" stroke-width="0.6"/><path d="M110.20 0 V409.6" stroke="#54564a" stroke-opacity="0.72" stroke-width="0.6"/><path d="M123.98 0 V409.6" stroke="#54564a" stroke-opacity="0.72" stroke-width="0.6"/><path d="M137.75 0 V409.6" stroke="#54564a" stroke-opacity="0.72" stroke-width="0.6"/><path d="M151.53 0 V409.6" stroke="#54564a" stroke-opacity="0.72" stroke-width="0.6"/><path d="M165.30 0 V409.6" stroke="#54564a" stroke-opacity="0.72" stroke-width="0.6"/><path d="M179.08 0 V409.6" stroke="#54564a" stroke-opacity="0.72" stroke-width="0.6"/><path d="M192.85 0 V409.6" stroke="#54564a" stroke-opacity="0.72" stroke-width="0.6"/><path d="M206.62 0 V409.6" stroke="#54564a" stroke-opacity="0.72" stroke-width="0.6"/><path d="M220.40 0 V409.6" stroke="#54564a" stroke-opacity="0.72" stroke-width="0.6"/><path d="M234.18 0 V409.6" stroke="#54564a" stroke-opacity="0.72" stroke-width="0.6"/><path d="M247.95 0 V409.6" stroke="#54564a" stroke-opacity="0.72" stroke-width="0.6"/><path d="M261.73 0 V409.6" stroke="#54564a" stroke-opacity="0.72" stroke-width="0.6"/><path d="M275.50 0 V409.6" stroke="#54564a" stroke-opacity="0.72" stroke-width="0.6"/><path d="M0 0.00 H275.5" stroke="#54564a" stroke-opacity="0.72" stroke-width="0.6"/><path d="M0 20.48 H275.5" stroke="#54564a" stroke-opacity="0.72" stroke-width="0.6"/><path d="M0 40.96 H275.5" stroke="#54564a" stroke-opacity="0.72" stroke-width="0.6"/><path d="M0 61.44 H275.5" stroke="#54564a" stroke-opacity="0.72" stroke-width="0.6"/><path d="M0 81.92 H275.5" stroke="#54564a" stroke-opacity="0.72" stroke-width="0.6"/><path d="M0 102.40 H275.5" stroke="#54564a" stroke-opacity="0.72" stroke-width="0.6"/><path d="M0 122.88 H275.5" stroke="#54564a" stroke-opacity="0.72" stroke-width="0.6"/><path d="M0 143.36 H275.5" stroke="#54564a" stroke-opacity="0.72" stroke-width="0.6"/><path d="M0 163.84 H275.5" stroke="#54564a" stroke-opacity="0.72" stroke-width="0.6"/><path d="M0 184.32 H275.5" stroke="#54564a" stroke-opacity="0.72" stroke-width="0.6"/><path d="M0 204.80 H275.5" stroke="#54564a" stroke-opacity="0.72" stroke-width="0.6"/><path d="M0 225.28 H275.5" stroke="#54564a" stroke-opacity="0.72" stroke-width="0.6"/><path d="M0 245.76 H275.5" stroke="#54564a" stroke-opacity="0.72" stroke-width="0.6"/><path d="M0 266.24 H275.5" stroke="#54564a" stroke-opacity="0.72" stroke-width="0.6"/><path d="M0 286.72 H275.5" stroke="#54564a" stroke-opacity="0.72" stroke-width="0.6"/><path d="M0 307.20 H275.5" stroke="#54564a" stroke-opacity="0.72" stroke-width="0.6"/><path d="M0 327.68 H275.5" stroke="#54564a" stroke-opacity="0.72" stroke-width="0.6"/><path d="M0 348.16 H275.5" stroke="#54564a" stroke-opacity="0.72" stroke-width="0.6"/><path d="M0 368.64 H275.5" stroke="#54564a" stroke-opacity="0.72" stroke-width="0.6"/><path d="M0 389.12 H275.5" stroke="#54564a" stroke-opacity="0.72" stroke-width="0.6"/><path d="M0 409.60 H275.5" stroke="#54564a" stroke-opacity="0.72" stroke-width="0.6"/></g></svg>
<div class="b" style="left:597.70px;top:100.40px;width:3.80px;height:3.80px;background:#3a3a3a;border:0.8px solid #c4c4c4;box-sizing:border-box;"></div>
<div class="b" style="left:597.70px;top:305.20px;width:3.80px;height:3.80px;background:#3a3a3a;border:0.8px solid #c4c4c4;box-sizing:border-box;"></div>
<div class="b" style="left:597.70px;top:510.00px;width:3.80px;height:3.80px;background:#3a3a3a;border:0.8px solid #c4c4c4;box-sizing:border-box;"></div>
<div class="b" style="left:735.45px;top:100.40px;width:3.80px;height:3.80px;background:#3a3a3a;border:0.8px solid #c4c4c4;box-sizing:border-box;"></div>
<svg class="b ic" style="left:733.35px;top:303.10px;color:#6a6a6a;" width="8" height="8" viewBox="0 0 12 12"><path d="M6 1.5 V10.5 M1.5 6 H10.5" stroke="currentColor" stroke-width="0.9"/><circle cx="6" cy="6" r="1.8" fill="none" stroke="currentColor" stroke-width="0.8"/></svg>
<div class="b" style="left:735.45px;top:510.00px;width:3.80px;height:3.80px;background:#3a3a3a;border:0.8px solid #c4c4c4;box-sizing:border-box;"></div>
<div class="b" style="left:873.20px;top:100.40px;width:3.80px;height:3.80px;background:#3a3a3a;border:0.8px solid #c4c4c4;box-sizing:border-box;"></div>
<div class="b" style="left:873.20px;top:305.20px;width:3.80px;height:3.80px;background:#3a3a3a;border:0.8px solid #c4c4c4;box-sizing:border-box;"></div>
<div class="b" style="left:873.20px;top:510.00px;width:3.80px;height:3.80px;background:#3a3a3a;border:0.8px solid #c4c4c4;box-sizing:border-box;"></div>
<div class="b" style="left:535.80px;top:565.20px;width:413.20px;height:8.40px;background:#535353;"></div>
<div class="b" style="left:513.60px;top:573.50px;width:510.40px;height:2.50px;background:#1c1c1c;"></div>
<span class="t" id="t67" style="left:539.00px;top:566.36px;font-size:5.4px;line-height:6.48px;color:#efefef;font-weight:700;transform:scaleX(0.9333);">1144.9%</span>
<span class="t" id="t68" style="left:586.80px;top:566.36px;font-size:5.4px;line-height:6.48px;color:#dcdcdc;font-weight:700;transform:scaleX(0.9091);">Doc: 8.83K/8.83K</span>
<svg class="b ic" style="left:651.90px;top:566.00px;color:#d0d0d0;" width="7" height="7" viewBox="0 0 12 12"><path d="M4.5 3 L7.8 6 L4.5 9" fill="none" stroke="currentColor" stroke-width="1.5"/></svg>
<div class="b" style="left:513.60px;top:36.20px;width:22.20px;height:537.30px;background:#535353;"></div>
<div class="b" style="left:513.60px;top:36.20px;width:22.20px;height:5.60px;background:#3f3f3f;"></div>
<span class="t" id="t69" style="left:517.00px;top:35.80px;font-size:5px;line-height:6.00px;color:#c8c8c8;font-weight:700;">&#187;</span>
<div class="b" style="left:520.00px;top:44.60px;width:9.00px;height:0.80px;background:#454545;"></div>
<div class="b" style="left:516.20px;top:50.60px;width:16.40px;height:13.00px;background:#383838;border-radius:1.5px;"></div>
<div class="b" style="left:949.00px;top:36.20px;width:75.00px;height:537.30px;background:#515151;"></div>
<div class="b" style="left:949.00px;top:36.20px;width:75.00px;height:6.00px;background:#3f3f3f;"></div>
<div class="b" style="left:969.20px;top:36.20px;width:1.70px;height:537.30px;background:#3c3c3c;"></div>
<div class="b" style="left:1021.00px;top:36.20px;width:3.00px;height:537.30px;background:#3c3c3c;"></div>
<div class="b" style="left:947.80px;top:36.20px;width:1.30px;height:537.30px;background:#3f3f3f;"></div>
<span class="t" id="t70" style="left:961.60px;top:36.70px;font-size:4.5px;line-height:5.40px;color:#c8c8c8;font-weight:400;">&#9666;&#9666;</span>
<span class="t" id="t71" style="left:1013.40px;top:36.70px;font-size:4.5px;line-height:5.40px;color:#c8c8c8;font-weight:400;">&#9666;&#9666;</span>
<div class="b" style="left:949.00px;top:42.20px;width:20.20px;height:57.60px;background:#535353;"></div>
<div class="b" style="left:949.00px;top:78.00px;width:20.20px;height:0.80px;background:#404040;"></div>
<div class="b" style="left:949.00px;top:99.80px;width:20.20px;height:0.80px;background:#404040;"></div>
<div class="b" style="left:955.00px;top:44.60px;width:8.00px;height:0.70px;background:#484848;"></div>
<div class="b" style="left:955.00px;top:80.60px;width:8.00px;height:0.70px;background:#484848;"></div>
<span class="t" id="t72" style="left:956.30px;top:48.70px;font-size:10.5px;line-height:12.60px;color:#ececec;font-weight:400;">A</span>
<div class="b" style="left:964.20px;top:50.40px;width:0.80px;height:9.60px;background:#ececec;"></div>
<span class="t" id="t73" style="left:957.40px;top:62.70px;font-size:10.5px;line-height:12.60px;color:#ececec;font-weight:700;">&#182;</span>
<svg class="b ic" style="left:953.70px;top:85.90px;color:#e6e6e6;" width="11" height="11" viewBox="0 0 12 12"><path d="M6 1.2 L10.4 3.4 V8.6 L6 10.8 L1.6 8.6 V3.4 Z M1.6 3.4 L6 5.6 L10.4 3.4 M6 5.6 V10.8" fill="none" stroke="currentColor" stroke-width="0.9"/></svg>
<div class="b" style="left:970.90px;top:42.20px;width:50.10px;height:95.00px;background:#535353;"></div>
<div class="b" style="left:970.90px;top:63.40px;width:50.10px;height:0.90px;background:#404040;"></div>
<div class="b" style="left:970.90px;top:100.40px;width:50.10px;height:0.90px;background:#404040;"></div>
<div class="b" style="left:970.90px;top:137.20px;width:50.10px;height:0.90px;background:#404040;"></div>
<div class="b" style="left:992.00px;top:44.60px;width:8.00px;height:0.70px;background:#484848;"></div>
<div class="b" style="left:992.00px;top:66.00px;width:8.00px;height:0.70px;background:#484848;"></div>
<div class="b" style="left:992.00px;top:103.00px;width:8.00px;height:0.70px;background:#484848;"></div>
<svg class="b ic" style="left:975.25px;top:49.05px;color:#ececec;" width="11.5" height="11.5" viewBox="0 0 12 12"><path d="M2 1.5 h2.6 v9 h-2.6z" fill="none" stroke="currentColor" stroke-width="0.9"/><path d="M2 4 h2.6 M2 6.4 h2.6 M2 8.6 h2.6v1.9h-2.6z" stroke="currentColor" stroke-width="0.8" fill="currentColor"/><path d="M7 2.2 C10.4 2.6 10.6 7.2 7.6 8.6" fill="none" stroke="currentColor" stroke-width="1.2"/><path d="M6 1.8 l2 -0.4 l-0.4 2.2z" fill="currentColor"/></svg>
<span class="t" id="t74" style="left:990.60px;top:51.72px;font-size:5.8px;line-height:6.96px;color:#f2f2f2;font-weight:700;transform:scaleX(0.9200);">History</span>
<svg class="b ic" style="left:975.55px;top:70.85px;color:#ececec;" width="11.5" height="11.5" viewBox="0 0 12 12"><path d="M6 2 C2.6 2 0.8 4.2 0.8 6.2 C0.8 8.4 3 9.8 5.6 9.8 C6.8 9.8 6.4 8.4 7.4 8 C8.6 7.6 11.2 8.2 11.2 5.6 C11.2 3.4 8.8 2 6 2 Z" fill="none" stroke="currentColor" stroke-width="1"/><circle cx="3.4" cy="6" r="0.9" fill="currentColor"/><circle cx="5" cy="4" r="0.9" fill="currentColor"/><circle cx="7.4" cy="3.8" r="0.9" fill="currentColor"/><circle cx="9.2" cy="5.4" r="0.9" fill="currentColor"/></svg>
<span class="t" id="t75" style="left:990.60px;top:73.32px;font-size:5.8px;line-height:6.96px;color:#f2f2f2;font-weight:700;transform:scaleX(0.8800);">Color</span>
<svg class="b ic" style="left:975.50px;top:85.90px;color:#ececec;" width="11" height="11" viewBox="0 0 12 12"><path d="M1.5 1.5 H10.5 V10.5 H1.5 Z M4.5 1.5 V10.5 M7.5 1.5 V10.5 M1.5 4.5 H10.5 M1.5 7.5 H10.5" fill="none" stroke="currentColor" stroke-width="0.9"/></svg>
<span class="t" id="t76" style="left:990.60px;top:88.12px;font-size:5.8px;line-height:6.96px;color:#f2f2f2;font-weight:700;transform:scaleX(0.8960);">Swatch...</span>
<svg class="b ic" style="left:974.75px;top:107.15px;color:#dcdcdc;" width="12.5" height="12.5" viewBox="0 0 12 12"><ellipse cx="6" cy="6" rx="5.2" ry="3.8" fill="none" stroke="currentColor" stroke-width="0.8"/><ellipse cx="6.6" cy="6.4" rx="3.6" ry="2.4" fill="none" stroke="currentColor" stroke-width="0.8"/><ellipse cx="5" cy="5.4" rx="3" ry="2" fill="none" stroke="currentColor" stroke-width="0.8"/></svg>
<span class="t" id="t77" style="left:990.60px;top:110.12px;font-size:5.8px;line-height:6.96px;color:#f2f2f2;font-weight:700;transform:scaleX(0.8240);">Libraries</span>
<svg class="b ic" style="left:975.50px;top:122.70px;color:#ececec;" width="11" height="11" viewBox="0 0 12 12"><path d="M6 1.6 L10.8 4.2 L6 6.8 L1.2 4.2 Z" fill="currentColor"/><path d="M1.6 6.4 L6 8.8 L10.4 6.4 M1.6 8.4 L6 10.8 L10.4 8.4" fill="none" stroke="currentColor" stroke-width="1.1"/></svg>
<span class="t" id="t78" style="left:990.60px;top:125.12px;font-size:5.8px;line-height:6.96px;color:#f2f2f2;font-weight:700;transform:scaleX(0.8211);">Layers</span>
<div class="b" style="left:964.60px;top:461.60px;width:50.80px;height:43.40px;background:#535353;box-shadow:0 0 2px rgba(0,0,0,.55);border:0.6px solid #414141;box-sizing:border-box;"></div>
<div class="b" style="left:964.60px;top:461.60px;width:50.80px;height:7.40px;background:#3f3f3f;"></div>
<span class="t" id="t79" style="left:999.20px;top:462.50px;font-size:4.5px;line-height:5.40px;color:#c8c8c8;font-weight:400;">&#9656;&#9656;</span>
<svg class="b ic" style="left:1007.25px;top:461.65px;color:#d0d0d0;" width="7.5" height="7.5" viewBox="0 0 12 12"><path d="M4 4 L8 8 M8 4 L4 8" stroke="currentColor" stroke-width="1.5"/></svg>
<div class="b" style="left:987.00px;top:471.40px;width:8.00px;height:0.70px;background:#484848;"></div>
<svg class="b ic" style="left:970.25px;top:475.75px;color:#ececec;" width="11.5" height="11.5" viewBox="0 0 12 12"><path d="M10.6 1.4 L5.6 6.4 L6.8 7.6 Z" fill="currentColor"/><path d="M5 7 C3.4 7 3.4 9.4 1.6 10 C3.8 10.8 6.4 9.8 6.4 8.2 Z" fill="currentColor"/><path d="M1.4 1.6 h1 M1.4 3.2 h1 M1.4 4.8 h1 M3.2 1.6 h1 M3.2 3.2h1" stroke="currentColor" stroke-width="0.8"/></svg>
<span class="t" id="t80" style="left:984.60px;top:478.12px;font-size:5.8px;line-height:6.96px;color:#f2f2f2;font-weight:700;transform:scaleX(0.8370);">Brush S...</span>
<svg class="b ic" style="left:969.85px;top:490.65px;color:#ececec;" width="11.5" height="11.5" viewBox="0 0 12 12"><path d="M1 3 h5.4 M7.6 2 l2.8 1 l-2.8 1 z M1 8 h6 M8.2 6.4 c1.6 0.4 2.4 1.2 2.4 1.6 c0 0.6 -0.8 1.4 -2.4 1.6 z" stroke="currentColor" stroke-width="1.1" fill="currentColor"/></svg>
<span class="t" id="t81" style="left:984.60px;top:492.92px;font-size:5.8px;line-height:6.96px;color:#f2f2f2;font-weight:700;transform:scaleX(0.8087);">Brushes</span>
<div class="b" style="left:2.40px;top:182.20px;width:20.60px;height:12.80px;background:#2e2e2e;"></div>
<svg class="b ic" style="left:6.90px;top:64.30px;color:#dcdcdc;" width="11.4" height="11.4" viewBox="0 0 12 12"><path d="M3.2 1.6 L3.2 10 L5.4 8 L8.8 7.6 Z" fill="none" stroke="currentColor" stroke-width="0.9"/></svg>
<svg class="b ic" style="left:6.90px;top:77.50px;color:#dcdcdc;" width="11.4" height="11.4" viewBox="0 0 12 12"><path d="M3 1.4 L3 10.4 L5.6 8.2 L9.2 7.8 Z" fill="currentColor"/></svg>
<svg class="b" style="left:17.40px;top:87.40px" width="2.4" height="2.4" viewBox="0 0 2 2"><path d="M2 0 V2 H0Z" fill="#bdbdbd"/></svg>
<svg class="b ic" style="left:6.90px;top:90.50px;color:#dcdcdc;" width="11.4" height="11.4" viewBox="0 0 12 12"><path d="M2 10.4 L7.4 4.6" stroke="currentColor" stroke-width="1.5"/><path d="M8.6 1 v1.6 M8.6 4.6 v1.4 M6 3.4 h1.6 M9.8 3.4 h1.6 M6.8 1.6 l0.9 0.9 M10.4 1.6 l-0.9 0.9 M10.4 5.2 l-0.9 -0.9" stroke="currentColor" stroke-width="0.8"/></svg>
<svg class="b" style="left:17.40px;top:100.40px" width="2.4" height="2.4" viewBox="0 0 2 2"><path d="M2 0 V2 H0Z" fill="#bdbdbd"/></svg>
<svg class="b ic" style="left:6.90px;top:103.90px;color:#dcdcdc;" width="11.4" height="11.4" viewBox="0 0 12 12"><path d="M6.4 2 C9.4 2 11 3.4 11 4.8 C11 6.6 8.8 7.6 6.2 7.6 C3.4 7.6 1.4 6.4 1.4 4.8 C1.4 3.2 3.6 2 6.4 2 Z" fill="none" stroke="currentColor" stroke-width="1"/><path d="M4 7 C3 7.6 3.2 8.8 4.4 8.6 C5.2 9.4 4.4 10.4 3.4 10.8" fill="none" stroke="currentColor" stroke-width="0.9"/><path d="M5.6 3.6 L5.6 8.6 L6.8 7.6 L8.6 7.4 Z" fill="currentColor"/></svg>
<svg class="b ic" style="left:6.90px;top:117.30px;color:#dcdcdc;" width="11.4" height="11.4" viewBox="0 0 12 12"><path d="M8.2 1.2 L10.8 3.8 L9.4 5.2 L6.8 2.6 Z M6.2 3.2 L8.8 5.8 L6.6 9 L2 10 L3 5.4 Z" fill="currentColor"/><circle cx="5.2" cy="6.8" r="0.8" fill="#535353"/></svg>
<svg class="b" style="left:17.40px;top:127.20px" width="2.4" height="2.4" viewBox="0 0 2 2"><path d="M2 0 V2 H0Z" fill="#bdbdbd"/></svg>
<svg class="b ic" style="left:6.90px;top:130.70px;color:#dcdcdc;" width="11.4" height="11.4" viewBox="0 0 12 12"><path d="M8.6 1.6 L11 4 L9.8 5.2 L7.4 2.8 Z M6.8 3.4 L9.2 5.8 L7 8.6 L3.2 9.2 L4 5.6 Z" fill="currentColor"/><path d="M1.2 8 C1.6 10 3.4 10.8 6 10.6" fill="none" stroke="currentColor" stroke-width="1"/></svg>
<svg class="b ic" style="left:6.90px;top:143.70px;color:#dcdcdc;" width="11.4" height="11.4" viewBox="0 0 12 12"><path d="M2.2 2 H9.8 V4 H9 V3 H6.7 V9.6 H7.8 V10.4 H4.2 V9.6 H5.3 V3 H3 V4 H2.2 Z" fill="currentColor"/></svg>
<svg class="b" style="left:17.40px;top:153.60px" width="2.4" height="2.4" viewBox="0 0 2 2"><path d="M2 0 V2 H0Z" fill="#bdbdbd"/></svg>
<svg class="b ic" style="left:6.90px;top:156.70px;color:#dcdcdc;" width="11.4" height="11.4" viewBox="0 0 12 12"><path d="M2 10.2 L10 1.8" stroke="currentColor" stroke-width="1.1"/></svg>
<svg class="b" style="left:17.40px;top:166.60px" width="2.4" height="2.4" viewBox="0 0 2 2"><path d="M2 0 V2 H0Z" fill="#bdbdbd"/></svg>
<svg class="b ic" style="left:6.90px;top:169.70px;color:#dcdcdc;" width="11.4" height="11.4" viewBox="0 0 12 12"><rect x="1.6" y="2.6" width="8.8" height="6.8" fill="#6e6e6e" stroke="currentColor" stroke-width="1"/></svg>
<svg class="b" style="left:17.40px;top:179.60px" width="2.4" height="2.4" viewBox="0 0 2 2"><path d="M2 0 V2 H0Z" fill="#bdbdbd"/></svg>
<svg class="b ic" style="left:6.90px;top:182.90px;color:#dcdcdc;" width="11.4" height="11.4" viewBox="0 0 12 12"><path d="M11 1 L5.6 6.2 L6.8 7.4 Z" fill="currentColor"/><path d="M5 6.8 C3.4 6.8 3.4 9.2 1.4 10 C3.8 10.8 6.4 9.8 6.4 8.2 Z" fill="currentColor"/></svg>
<svg class="b" style="left:17.40px;top:192.80px" width="2.4" height="2.4" viewBox="0 0 2 2"><path d="M2 0 V2 H0Z" fill="#bdbdbd"/></svg>
<svg class="b ic" style="left:6.90px;top:195.90px;color:#dcdcdc;" width="11.4" height="11.4" viewBox="0 0 12 12"><circle cx="4.6" cy="6" r="3.2" fill="none" stroke="currentColor" stroke-width="1"/><path d="M10.8 2 L5.4 8.4 L4.6 10.4 L6.6 9.4 L11.6 3 Z" fill="currentColor"/></svg>
<svg class="b" style="left:17.40px;top:205.80px" width="2.4" height="2.4" viewBox="0 0 2 2"><path d="M2 0 V2 H0Z" fill="#bdbdbd"/></svg>
<svg class="b ic" style="left:6.90px;top:208.90px;color:#dcdcdc;" width="11.4" height="11.4" viewBox="0 0 12 12"><path d="M7.2 1.6 L10.8 5.2 L6.2 9.8 L2.6 6.2 Z" fill="currentColor"/><path d="M2.2 6.8 L5.6 10.2 L3.6 10.6 L1.6 8.6 Z" fill="#9a9a9a"/></svg>
<svg class="b" style="left:17.40px;top:218.80px" width="2.4" height="2.4" viewBox="0 0 2 2"><path d="M2 0 V2 H0Z" fill="#bdbdbd"/></svg>
<svg class="b ic" style="left:6.90px;top:221.90px;color:#dcdcdc;" width="11.4" height="11.4" viewBox="0 0 12 12"><path d="M9.8 6 A3.8 3.8 0 1 1 6 2.2" fill="none" stroke="currentColor" stroke-width="1.1"/><path d="M5.6 0.4 L8 2.2 L5.6 4 Z" fill="currentColor" transform="rotate(180 6.4 2.2)"/></svg>
<svg class="b" style="left:17.40px;top:231.80px" width="2.4" height="2.4" viewBox="0 0 2 2"><path d="M2 0 V2 H0Z" fill="#bdbdbd"/></svg>
<svg class="b ic" style="left:6.90px;top:235.90px;color:#dcdcdc;" width="11.4" height="11.4" viewBox="0 0 12 12"><rect x="1.4" y="4.8" width="5.6" height="5.6" fill="none" stroke="currentColor" stroke-width="0.9"/><rect x="3.8" y="1.6" width="6.8" height="6.8" fill="none" stroke="currentColor" stroke-width="0.9"/><path d="M7 5 L9.4 2.6 M7.6 2.6 H9.4 V4.4" fill="none" stroke="currentColor" stroke-width="0.8"/></svg>
<svg class="b" style="left:17.40px;top:245.80px" width="2.4" height="2.4" viewBox="0 0 2 2"><path d="M2 0 V2 H0Z" fill="#bdbdbd"/></svg>
<svg class="b ic" style="left:6.90px;top:249.10px;color:#dcdcdc;" width="11.4" height="11.4" viewBox="0 0 12 12"><path d="M1.4 6.4 C3 4.4 4.4 7.4 6 5.4 C7.4 3.6 8.6 5 10.6 2.6" fill="none" stroke="currentColor" stroke-width="1.5"/><path d="M4 7.4 L3 10.4 M7 6 L8.6 9.4 M2.6 2 L4 4.8" stroke="currentColor" stroke-width="1"/></svg>
<svg class="b" style="left:17.40px;top:259.00px" width="2.4" height="2.4" viewBox="0 0 2 2"><path d="M2 0 V2 H0Z" fill="#bdbdbd"/></svg>
<svg class="b ic" style="left:6.90px;top:261.90px;color:#dcdcdc;" width="11.4" height="11.4" viewBox="0 0 12 12"><path d="M6.6 1.4 L10.6 5.4 L9.2 5.8 L7.6 7.4 L7.4 9.6 L2.4 4.6 L4.6 4.4 L6.2 2.8 Z" fill="currentColor"/><path d="M4.6 7.4 L1.4 10.6" stroke="currentColor" stroke-width="1"/></svg>
<svg class="b" style="left:17.40px;top:271.80px" width="2.4" height="2.4" viewBox="0 0 2 2"><path d="M2 0 V2 H0Z" fill="#bdbdbd"/></svg>
<svg class="b ic" style="left:6.90px;top:275.30px;color:#dcdcdc;" width="11.4" height="11.4" viewBox="0 0 12 12"><circle cx="4.4" cy="4.6" r="2.8" fill="none" stroke="currentColor" stroke-width="0.9"/><rect x="4" y="4.4" width="5" height="4.6" fill="none" stroke="currentColor" stroke-width="0.9"/><path d="M7 6.4 L7 11.4 L8.4 10.2 L10.4 10 Z" fill="currentColor"/></svg>
<svg class="b" style="left:17.40px;top:285.20px" width="2.4" height="2.4" viewBox="0 0 2 2"><path d="M2 0 V2 H0Z" fill="#bdbdbd"/></svg>
<svg class="b ic" style="left:6.90px;top:289.10px;color:#dcdcdc;" width="11.4" height="11.4" viewBox="0 0 12 12"><path d="M2 1.6 V10 H10.6 M2 10 L9.4 5.4 M2 6.8 L6.2 7.6 M2 3.6 L8 6.2 M4.4 4.6 V10 M6.8 5.6 V10" fill="none" stroke="currentColor" stroke-width="0.8"/></svg>
<svg class="b" style="left:17.40px;top:299.00px" width="2.4" height="2.4" viewBox="0 0 2 2"><path d="M2 0 V2 H0Z" fill="#bdbdbd"/></svg>
<svg class="b ic" style="left:6.90px;top:302.70px;color:#dcdcdc;" width="11.4" height="11.4" viewBox="0 0 12 12"><rect x="1.8" y="1.8" width="8.4" height="8.4" fill="none" stroke="currentColor" stroke-width="0.9"/><path d="M1.8 6 C4 4.4 8 7.6 10.2 6 M6 1.8 C4.4 4 7.6 8 6 10.2" fill="none" stroke="currentColor" stroke-width="0.8"/><circle cx="6" cy="6" r="1.1" fill="currentColor"/><circle cx="3.4" cy="3.4" r=".7" fill="currentColor"/><circle cx="8.6" cy="3.4" r=".7" fill="currentColor"/><circle cx="3.4" cy="8.6" r=".7" fill="currentColor"/><circle cx="8.6" cy="8.6" r=".7" fill="currentColor"/></svg>
<svg class="b ic" style="left:6.90px;top:316.30px;color:#dcdcdc;" width="11.4" height="11.4" viewBox="0 0 12 12"><defs><linearGradient id="tg"><stop offset="0" stop-color="#e4e4e4"/><stop offset="1" stop-color="#5a5a5a"/></linearGradient></defs><rect x="1.8" y="2" width="8.4" height="8" fill="url(#tg)" stroke="currentColor" stroke-width="0.8"/></svg>
<svg class="b ic" style="left:6.90px;top:329.70px;color:#dcdcdc;" width="11.4" height="11.4" viewBox="0 0 12 12"><path d="M9.2 1.2 C10.4 0.8 11.4 2 10.8 3 L9.4 4.4 L7.6 2.6 Z" fill="currentColor"/><path d="M6.8 3 L9 5.2 M7.6 4.4 L2.6 9.4 L1.6 10.6 M8.2 4.8 L3.2 9.8" stroke="currentColor" stroke-width="1.1" fill="none"/></svg>
<svg class="b" style="left:17.40px;top:339.60px" width="2.4" height="2.4" viewBox="0 0 2 2"><path d="M2 0 V2 H0Z" fill="#bdbdbd"/></svg>
<svg class="b ic" style="left:6.90px;top:343.10px;color:#dcdcdc;" width="11.4" height="11.4" viewBox="0 0 12 12"><rect x="1.2" y="2.4" width="4.6" height="4.2" rx="1.2" fill="currentColor" transform="rotate(25 3.5 4.5)"/><rect x="4" y="4.2" width="4.6" height="4.2" rx="1.2" fill="#9c9c9c" transform="rotate(25 6.3 6.3)"/><rect x="6.6" y="5.8" width="4.6" height="4.2" rx="1.2" fill="none" stroke="currentColor" stroke-width="0.8" transform="rotate(25 8.9 7.9)"/></svg>
<svg class="b" style="left:17.40px;top:353.00px" width="2.4" height="2.4" viewBox="0 0 2 2"><path d="M2 0 V2 H0Z" fill="#bdbdbd"/></svg>
<svg class="b ic" style="left:6.90px;top:356.90px;color:#dcdcdc;" width="11.4" height="11.4" viewBox="0 0 12 12"><rect x="4.6" y="4.6" width="5.4" height="6" fill="none" stroke="currentColor" stroke-width="0.9"/><path d="M6 4.6 V3 H8.4 V4.6 M4.6 6.2 H2.4 V3.6" fill="none" stroke="currentColor" stroke-width="0.9"/><circle cx="2.4" cy="2.4" r="0.7" fill="currentColor"/><circle cx="7.2" cy="7.8" r="1.2" fill="currentColor"/></svg>
<svg class="b" style="left:17.40px;top:366.80px" width="2.4" height="2.4" viewBox="0 0 2 2"><path d="M2 0 V2 H0Z" fill="#bdbdbd"/></svg>
<svg class="b ic" style="left:6.90px;top:370.50px;color:#dcdcdc;" width="11.4" height="11.4" viewBox="0 0 12 12"><path d="M1.8 1.6 V10.4 H10.6" fill="none" stroke="currentColor" stroke-width="0.9"/><rect x="3.2" y="5.6" width="1.7" height="4" fill="currentColor"/><rect x="5.6" y="2.6" width="1.7" height="7" fill="currentColor"/><rect x="8" y="4.4" width="1.7" height="5.2" fill="currentColor"/></svg>
<svg class="b" style="left:17.40px;top:380.40px" width="2.4" height="2.4" viewBox="0 0 2 2"><path d="M2 0 V2 H0Z" fill="#bdbdbd"/></svg>
<svg class="b ic" style="left:6.90px;top:384.10px;color:#dcdcdc;" width="11.4" height="11.4" viewBox="0 0 12 12"><path d="M3.4 1 V9.6 H11 M1 3.4 H9.6 V11" fill="none" stroke="currentColor" stroke-width="0.9"/></svg>
<svg class="b ic" style="left:6.90px;top:397.90px;color:#dcdcdc;" width="11.4" height="11.4" viewBox="0 0 12 12"><path d="M10 1.2 L5.4 6 L6.8 7.4 Z" fill="currentColor"/><path d="M4.8 6.4 L2 9.2 L3 10.6 L6.4 8 Z" fill="currentColor"/></svg>
<svg class="b" style="left:17.40px;top:407.80px" width="2.4" height="2.4" viewBox="0 0 2 2"><path d="M2 0 V2 H0Z" fill="#bdbdbd"/></svg>
<svg class="b ic" style="left:6.90px;top:410.70px;color:#dcdcdc;" width="11.4" height="11.4" viewBox="0 0 12 12"><path d="M3.2 10.6 C2.4 8.8 1.2 7.4 1.2 6.2 C1.8 5.6 2.8 6.4 3.2 7 V2.8 C3.4 2 4.4 2 4.6 2.8 V5.2 V1.8 C4.8 1 5.8 1 6 1.8 V5.2 V2.2 C6.2 1.4 7.2 1.4 7.4 2.2 V5.4 V3.4 C7.6 2.6 8.6 2.6 8.8 3.4 V7.6 C8.8 9 8.4 9.8 7.8 10.6 Z" fill="currentColor"/></svg>
<svg class="b" style="left:17.40px;top:420.60px" width="2.4" height="2.4" viewBox="0 0 2 2"><path d="M2 0 V2 H0Z" fill="#bdbdbd"/></svg>
<svg class="b ic" style="left:6.90px;top:423.90px;color:#dcdcdc;" width="11.4" height="11.4" viewBox="0 0 12 12"><circle cx="5" cy="5" r="3.2" fill="none" stroke="currentColor" stroke-width="1.1"/><path d="M7.4 7.4 L10.6 10.6" stroke="currentColor" stroke-width="1.5"/></svg>
<div class="b" style="left:5.60px;top:441.60px;width:3.40px;height:3.40px;background:#f0f0f0;border:0.5px solid #222;box-sizing:border-box;"></div>
<div class="b" style="left:7.20px;top:443.20px;width:3.40px;height:3.40px;background:#1a1a1a;border:0.6px solid #eee;box-sizing:border-box;"></div>
<svg class="b ic" style="left:15.90px;top:440.50px;color:#d8d8d8;" width="7" height="7" viewBox="0 0 12 12"><path d="M2.6 4.4 C2.6 8.2 5.4 9.4 8.6 9.4" fill="none" stroke="currentColor" stroke-width="1.1"/><path d="M1 5.2 L2.6 2.8 L4.2 5.2 Z M7.8 7.8 L10.2 9.4 L7.8 11 Z" fill="currentColor"/></svg>
<div class="b" style="left:5.00px;top:449.20px;width:10.60px;height:10.20px;background:#fbfbfb;"></div>
<div class="b" style="left:10.80px;top:455.20px;width:10.60px;height:10.40px;background:#fbfbfb;border:0.5px solid #555;box-sizing:border-box;"></div>
<div class="b" style="left:13.60px;top:458.00px;width:5.00px;height:4.80px;background:#535353;"></div>
<svg class="b" style="left:10.80px;top:455.20px;" width="10.6" height="10.4" viewBox="0 0 10.6 10.4"><path d="M0.6 9.8 L10 0.6" stroke="#d0202a" stroke-width="1.5"/></svg>
<div class="b" style="left:5.60px;top:468.60px;width:4.20px;height:4.20px;background:#f6f6f6;"></div>
<div class="b" style="left:10.40px;top:468.60px;width:4.20px;height:4.20px;background:linear-gradient(90deg,#f0f0f0,#333);"></div>
<div class="b" style="left:15.40px;top:468.60px;width:4.40px;height:4.20px;background:#f6f6f6;border-radius:50%"></div>
<svg class="b" style="left:15.40px;top:468.60px;" width="4.4" height="4.2" viewBox="0 0 4.4 4.2"><circle cx="2.2" cy="2.1" r="1.9" fill="none" stroke="#d0202a" stroke-width="0.8"/><path d="M0.8 3.4 L3.6 0.8" stroke="#d0202a" stroke-width="0.8"/></svg>
<svg class="b ic" style="left:7.90px;top:476.90px;color:#dcdcdc;" width="9" height="9" viewBox="0 0 12 12"><circle cx="5" cy="5.4" r="2.8" fill="#8a8a8a"/><rect x="5.6" y="5.4" width="4.4" height="4.4" fill="#9c9c9c"/></svg>
<svg class="b ic" style="left:7.30px;top:489.10px;color:#c4c4c4;" width="11" height="11" viewBox="0 0 12 12"><rect x="3.6" y="2" width="7.4" height="5.4" fill="none" stroke="currentColor" stroke-width="0.9"/><rect x="1.2" y="4.6" width="7.4" height="5.4" fill="#535353" stroke="currentColor" stroke-width="0.9"/></svg>
<svg class="b ic" style="left:518.60px;top:51.20px;color:#dedede;" width="11.6" height="11.6" viewBox="0 0 12 12"><path d="M6 0.8 L7.8 3 H6.6 V5.4 H9 V4.2 L11.2 6 L9 7.8 V6.6 H6.6 V9 H7.8 L6 11.2 L4.2 9 H5.4 V6.6 H3 V7.8 L0.8 6 L3 4.2 V5.4 H5.4 V3 H4.2 Z" fill="currentColor"/></svg>
<svg class="b" style="left:529.60px;top:61.20px" width="2.4" height="2.4" viewBox="0 0 2 2"><path d="M2 0 V2 H0Z" fill="#bdbdbd"/></svg>
<svg class="b ic" style="left:518.60px;top:65.40px;color:#dedede;" width="11.6" height="11.6" viewBox="0 0 12 12"><rect x="1.6" y="2.4" width="8.8" height="7.2" fill="none" stroke="currentColor" stroke-width="1" stroke-dasharray="1.6 1"/></svg>
<svg class="b" style="left:529.60px;top:75.40px" width="2.4" height="2.4" viewBox="0 0 2 2"><path d="M2 0 V2 H0Z" fill="#bdbdbd"/></svg>
<svg class="b ic" style="left:518.60px;top:79.20px;color:#dedede;" width="11.6" height="11.6" viewBox="0 0 12 12"><path d="M6.2 2 C9.2 2 10.8 3.4 10.8 4.8 C10.8 6.6 8.6 7.6 6 7.6 C3.2 7.6 1.4 6.4 1.4 4.8 C1.4 3.2 3.4 2 6.2 2 Z" fill="none" stroke="currentColor" stroke-width="1"/><path d="M3.8 7 C2.8 7.6 3 8.8 4.2 8.6 C5 9.4 4.2 10.4 3.2 10.8" fill="none" stroke="currentColor" stroke-width="0.9"/></svg>
<svg class="b" style="left:529.60px;top:89.20px" width="2.4" height="2.4" viewBox="0 0 2 2"><path d="M2 0 V2 H0Z" fill="#bdbdbd"/></svg>
<svg class="b ic" style="left:518.60px;top:93.20px;color:#dedede;" width="11.6" height="11.6" viewBox="0 0 12 12"><path d="M10.6 1.6 L6 6.2 L7 7.2 Z" fill="currentColor"/><path d="M5.4 6.6 C4 6.6 4.2 8.6 2.8 9.2 C4.6 9.8 6.6 9 6.6 7.6 Z" fill="currentColor"/><path d="M2 5.2 A3.4 3.4 0 0 1 6.6 2" fill="none" stroke="currentColor" stroke-width="0.9" stroke-dasharray="1.4 0.9"/><path d="M1.8 9.8 A3 3 0 0 1 1.8 6" fill="none" stroke="currentColor" stroke-width="0.9" stroke-dasharray="1.4 0.9"/></svg>
<svg class="b" style="left:529.60px;top:103.20px" width="2.4" height="2.4" viewBox="0 0 2 2"><path d="M2 0 V2 H0Z" fill="#bdbdbd"/></svg>
<svg class="b ic" style="left:518.60px;top:107.20px;color:#dedede;" width="11.6" height="11.6" viewBox="0 0 12 12"><path d="M3.4 0.8 V8.6 H11.2 M0.8 3.4 H8.6 V11.2" fill="none" stroke="currentColor" stroke-width="1.2"/></svg>
<svg class="b" style="left:529.60px;top:117.20px" width="2.4" height="2.4" viewBox="0 0 2 2"><path d="M2 0 V2 H0Z" fill="#bdbdbd"/></svg>
<svg class="b ic" style="left:518.60px;top:121.20px;color:#dedede;" width="11.6" height="11.6" viewBox="0 0 12 12"><path d="M9.2 1.2 C10.4 0.8 11.4 2 10.8 3 L9.4 4.4 L7.6 2.6 Z" fill="currentColor"/><path d="M6.8 3 L9 5.2 M7.6 4.4 L2.6 9.4 L1.6 10.6 M8.2 4.8 L3.2 9.8" stroke="currentColor" stroke-width="1.1" fill="none"/></svg>
<svg class="b" style="left:529.60px;top:131.20px" width="2.4" height="2.4" viewBox="0 0 2 2"><path d="M2 0 V2 H0Z" fill="#bdbdbd"/></svg>
<svg class="b ic" style="left:518.60px;top:135.20px;color:#dedede;" width="11.6" height="11.6" viewBox="0 0 12 12"><rect x="0.6" y="3.6" width="10.8" height="4.8" rx="2.2" fill="currentColor" transform="rotate(-45 6 6)"/><path d="M4.6 6 h0.1 M6 4.6 h0.1 M7.4 6 h.1 M6 7.4 h.1 M6 6 h.1" stroke="#535353" stroke-width="0.9" stroke-linecap="round"/></svg>
<svg class="b" style="left:529.60px;top:145.20px" width="2.4" height="2.4" viewBox="0 0 2 2"><path d="M2 0 V2 H0Z" fill="#bdbdbd"/></svg>
<svg class="b ic" style="left:518.60px;top:149.20px;color:#dedede;" width="11.6" height="11.6" viewBox="0 0 12 12"><path d="M9.4 1.2 L10.8 2.6 L4.6 8.8 L2.2 9.8 L3.2 7.4 Z" fill="none" stroke="currentColor" stroke-width="1"/><path d="M2.2 9.8 L3.2 7.4 L4.6 8.8Z" fill="currentColor"/></svg>
<svg class="b" style="left:529.60px;top:159.20px" width="2.4" height="2.4" viewBox="0 0 2 2"><path d="M2 0 V2 H0Z" fill="#bdbdbd"/></svg>
<svg class="b ic" style="left:518.60px;top:163.20px;color:#dedede;" width="11.6" height="11.6" viewBox="0 0 12 12"><path d="M4.6 1.6 C4.6 0.6 7.4 0.6 7.4 1.6 C7.4 3 6.8 3.6 6.8 5 H9.4 V7.2 H2.6 V5 H5.2 C5.2 3.6 4.6 3 4.6 1.6 Z" fill="currentColor"/><rect x="2" y="8.4" width="8" height="1.6" fill="currentColor"/></svg>
<svg class="b" style="left:529.60px;top:173.20px" width="2.4" height="2.4" viewBox="0 0 2 2"><path d="M2 0 V2 H0Z" fill="#bdbdbd"/></svg>
<svg class="b ic" style="left:518.60px;top:176.80px;color:#dedede;" width="11.6" height="11.6" viewBox="0 0 12 12"><path d="M10.8 1.2 L6.2 5.8 L7.2 6.8 Z" fill="currentColor"/><path d="M5.6 6.2 C4.2 6.2 4.4 8.2 3 8.8 C4.8 9.4 6.8 8.6 6.8 7.2 Z" fill="currentColor"/><path d="M2.2 5.4 A3 3 0 1 1 5.8 2" fill="none" stroke="currentColor" stroke-width="0.9"/><path d="M1 4.4 L2.2 6 L3.6 4.6" fill="none" stroke="currentColor" stroke-width="0.8"/></svg>
<svg class="b" style="left:529.60px;top:186.80px" width="2.4" height="2.4" viewBox="0 0 2 2"><path d="M2 0 V2 H0Z" fill="#bdbdbd"/></svg>
<svg class="b ic" style="left:518.60px;top:190.60px;color:#dedede;" width="11.6" height="11.6" viewBox="0 0 12 12"><path d="M7 1.8 L10.6 5.4 L6.4 9.6 L2.8 6 Z" fill="none" stroke="currentColor" stroke-width="1"/><path d="M2.8 6 L6.4 9.6 L5 10.4 H3 L1.6 8.4 Z" fill="currentColor"/></svg>
<svg class="b" style="left:529.60px;top:200.60px" width="2.4" height="2.4" viewBox="0 0 2 2"><path d="M2 0 V2 H0Z" fill="#bdbdbd"/></svg>
<svg class="b ic" style="left:518.60px;top:204.60px;color:#dedede;" width="11.6" height="11.6" viewBox="0 0 12 12"><path d="M5.4 2.2 L10 6.8 L6.2 10.4 L1.6 6 Z" fill="currentColor"/><path d="M5.4 0.8 V5" stroke="currentColor" stroke-width="0.9"/><path d="M10.4 7.8 C11.2 9 11.2 10.2 10.4 10.2 C9.6 10.2 9.6 9 10.4 7.8Z" fill="currentColor"/></svg>
<svg class="b" style="left:529.60px;top:214.60px" width="2.4" height="2.4" viewBox="0 0 2 2"><path d="M2 0 V2 H0Z" fill="#bdbdbd"/></svg>
<svg class="b ic" style="left:518.60px;top:218.40px;color:#dedede;" width="11.6" height="11.6" viewBox="0 0 12 12"><path d="M6 1.2 C7.6 4 9.4 5.8 9.4 7.6 A3.4 3.4 0 0 1 2.6 7.6 C2.6 5.8 4.4 4 6 1.2 Z" fill="currentColor"/></svg>
<svg class="b" style="left:529.60px;top:228.40px" width="2.4" height="2.4" viewBox="0 0 2 2"><path d="M2 0 V2 H0Z" fill="#bdbdbd"/></svg>
<svg class="b ic" style="left:518.60px;top:232.20px;color:#dedede;" width="11.6" height="11.6" viewBox="0 0 12 12"><circle cx="4.6" cy="5" r="3.2" fill="currentColor"/><path d="M6.8 7 L10.6 9.6" stroke="currentColor" stroke-width="2"/><circle cx="4.6" cy="5" r="1.1" fill="#535353"/></svg>
<svg class="b" style="left:529.60px;top:242.20px" width="2.4" height="2.4" viewBox="0 0 2 2"><path d="M2 0 V2 H0Z" fill="#bdbdbd"/></svg>
<svg class="b ic" style="left:518.60px;top:246.20px;color:#dedede;" width="11.6" height="11.6" viewBox="0 0 12 12"><path d="M2 10.4 L3 5.6 L7.4 2 L10.4 5 L6.8 9.4 Z" fill="none" stroke="currentColor" stroke-width="1"/><circle cx="6" cy="6.4" r="1" fill="currentColor"/><path d="M2 10.4 L5.4 7" stroke="currentColor" stroke-width="0.8"/></svg>
<svg class="b" style="left:529.60px;top:256.20px" width="2.4" height="2.4" viewBox="0 0 2 2"><path d="M2 0 V2 H0Z" fill="#bdbdbd"/></svg>
<svg class="b ic" style="left:518.60px;top:260.20px;color:#dedede;" width="11.6" height="11.6" viewBox="0 0 12 12"><path d="M1.8 1.8 H10.2 V4 H9.4 V3 H6.8 V9.6 H8 V10.4 H4 V9.6 H5.2 V3 H2.6 V4 H1.8 Z" fill="currentColor"/></svg>
<svg class="b" style="left:529.60px;top:270.20px" width="2.4" height="2.4" viewBox="0 0 2 2"><path d="M2 0 V2 H0Z" fill="#bdbdbd"/></svg>
<svg class="b ic" style="left:518.60px;top:274.20px;color:#dedede;" width="11.6" height="11.6" viewBox="0 0 12 12"><path d="M3.6 1 L3.6 10.4 L5.8 8.4 L7.2 11.2 L8.4 10.6 L7 7.8 L9.8 7.4 Z" fill="currentColor"/></svg>
<svg class="b" style="left:529.60px;top:284.20px" width="2.4" height="2.4" viewBox="0 0 2 2"><path d="M2 0 V2 H0Z" fill="#bdbdbd"/></svg>
<svg class="b ic" style="left:518.60px;top:288.00px;color:#dedede;" width="11.6" height="11.6" viewBox="0 0 12 12"><rect x="1.4" y="2.4" width="9.2" height="7.2" fill="#6e6e6e" stroke="currentColor" stroke-width="1"/></svg>
<svg class="b" style="left:529.60px;top:298.00px" width="2.4" height="2.4" viewBox="0 0 2 2"><path d="M2 0 V2 H0Z" fill="#bdbdbd"/></svg>
<svg class="b ic" style="left:518.60px;top:301.80px;color:#dedede;" width="11.6" height="11.6" viewBox="0 0 12 12"><path d="M3.2 10.6 C2.4 8.8 1.2 7.4 1.2 6.2 C1.8 5.6 2.8 6.4 3.2 7 V2.8 C3.4 2 4.4 2 4.6 2.8 V5.2 V1.8 C4.8 1 5.8 1 6 1.8 V5.2 V2.2 C6.2 1.4 7.2 1.4 7.4 2.2 V5.4 V3.4 C7.6 2.6 8.6 2.6 8.8 3.4 V7.6 C8.8 9 8.4 9.8 7.8 10.6 Z" fill="currentColor"/></svg>
<svg class="b" style="left:529.60px;top:311.80px" width="2.4" height="2.4" viewBox="0 0 2 2"><path d="M2 0 V2 H0Z" fill="#bdbdbd"/></svg>
<svg class="b ic" style="left:518.60px;top:315.60px;color:#dedede;" width="11.6" height="11.6" viewBox="0 0 12 12"><circle cx="5" cy="5" r="3.2" fill="none" stroke="currentColor" stroke-width="1.1"/><path d="M7.4 7.4 L10.6 10.6" stroke="currentColor" stroke-width="1.5"/></svg>
<svg class="b ic" style="left:518.60px;top:329.00px;color:#dedede;" width="11.6" height="11.6" viewBox="0 0 12 12"><circle cx="2.6" cy="6" r="1" fill="currentColor"/><circle cx="6" cy="6" r="1" fill="currentColor"/><circle cx="9.4" cy="6" r="1" fill="currentColor"/></svg>
<svg class="b" style="left:529.60px;top:339.00px" width="2.4" height="2.4" viewBox="0 0 2 2"><path d="M2 0 V2 H0Z" fill="#bdbdbd"/></svg>
<div class="b" style="left:516.80px;top:345.60px;width:3.20px;height:3.20px;background:#f4f4f4;border:0.5px solid #222;box-sizing:border-box;"></div>
<div class="b" style="left:518.40px;top:347.20px;width:3.20px;height:3.20px;background:#161616;border:0.6px solid #eee;box-sizing:border-box;"></div>
<svg class="b ic" style="left:524.85px;top:343.65px;color:#d8d8d8;" width="7.5" height="7.5" viewBox="0 0 12 12"><path d="M3.4 2.6 H8.6 V8" fill="none" stroke="currentColor" stroke-width="1.1"/><path d="M3.8 1 L1.4 2.6 L3.8 4.2 Z M7 7.6 L8.6 10 L10.2 7.6 Z" fill="currentColor"/></svg>
<div class="b" style="left:521.80px;top:359.00px;width:9.80px;height:9.80px;background:#fdfdfd;border:0.5px solid #3a3a3a;box-sizing:border-box;"></div>
<div class="b" style="left:516.80px;top:353.60px;width:9.60px;height:9.60px;background:#f5c518;border:0.6px solid #3a3a3a;box-sizing:border-box;"></div>
<svg class="b ic" style="left:518.70px;top:372.70px;color:#cfcfcf;" width="11" height="11" viewBox="0 0 12 12"><rect x="1.2" y="2.4" width="9.6" height="7.2" fill="none" stroke="currentColor" stroke-width="0.9"/><circle cx="6" cy="6" r="2" fill="none" stroke="currentColor" stroke-width="0.9" stroke-dasharray="1 0.7"/></svg>
<svg class="b ic" style="left:518.70px;top:386.70px;color:#cfcfcf;" width="11" height="11" viewBox="0 0 12 12"><rect x="3.6" y="2.2" width="7.4" height="5.2" fill="none" stroke="currentColor" stroke-width="0.9"/><rect x="1.2" y="4.8" width="7.4" height="5.2" fill="#535353" stroke="currentColor" stroke-width="0.9"/></svg>
<svg class="b" style="left:529.60px;top:396.80px" width="2.4" height="2.4" viewBox="0 0 2 2"><path d="M2 0 V2 H0Z" fill="#bdbdbd"/></svg>
<div class="b" style="left:528.60px;top:21.20px;width:127.00px;height:61.00px;background:#535353;box-shadow:0 0 2.5px rgba(0,0,0,.6);"></div>
<div class="b" style="left:528.60px;top:21.20px;width:127.00px;height:8.00px;background:#3b3b3b;"></div>
<div class="b" style="left:528.60px;top:29.20px;width:127.00px;height:13.40px;background:#424242;"></div>
<span class="t" id="t82" style="left:640.40px;top:22.70px;font-size:4.5px;line-height:5.40px;color:#c8c8c8;font-weight:400;">&#9666;&#9666;</span>
<svg class="b ic" style="left:647.30px;top:21.60px;color:#c8c8c8;" width="8" height="8" viewBox="0 0 12 12"><path d="M4 4 L8 8 M8 4 L4 8" stroke="currentColor" stroke-width="1.4"/></svg>
<span class="t" id="t83" style="left:533.60px;top:32.72px;font-size:5.8px;line-height:6.96px;color:#9a9a9a;font-weight:700;transform:scaleX(0.8667);">Swatches</span>
<div class="b" style="left:562.40px;top:30.00px;width:25.60px;height:12.80px;background:#535353;"></div>
<svg class="b ic" style="left:562.05px;top:32.25px;color:#c8c8c8;" width="7.5" height="7.5" viewBox="0 0 12 12"><path d="M4 4.6 L6 2.6 L8 4.6 M4 7.4 L6 9.4 L8 7.4" fill="none" stroke="currentColor" stroke-width="1.1"/></svg>
<span class="t" id="t84" style="left:570.00px;top:32.72px;font-size:5.8px;line-height:6.96px;color:#f4f4f4;font-weight:700;transform:scaleX(0.9067);">Color</span>
<span class="t" id="t85" style="left:593.00px;top:32.72px;font-size:5.8px;line-height:6.96px;color:#9a9a9a;font-weight:700;transform:scaleX(0.9091);">Color Guide</span>
<div class="b" style="left:647.60px;top:34.20px;width:4.60px;height:0.90px;background:#8e8e8e;"></div>
<div class="b" style="left:647.60px;top:35.80px;width:4.60px;height:0.90px;background:#8e8e8e;"></div>
<div class="b" style="left:647.60px;top:37.40px;width:4.60px;height:0.90px;background:#8e8e8e;"></div>
<div class="b" style="left:532.00px;top:48.00px;width:7.00px;height:7.00px;background:#fafafa;"></div>
<svg class="b" style="left:532.00px;top:48.00px;" width="7" height="7" viewBox="0 0 7 7"><path d="M0.4 6.6 L6.6 0.4" stroke="#d0202a" stroke-width="1.3"/></svg>
<div class="b" style="left:539.00px;top:48.00px;width:7.00px;height:7.00px;background:#050505;"></div>
<div class="b" style="left:546.00px;top:48.00px;width:6.80px;height:7.00px;background:#fdfdfd;"></div>
<div class="b" style="left:533.00px;top:61.20px;width:114.00px;height:12.80px;background:linear-gradient(90deg,#fcfcfc 0%,#e6e6e6 14%,#b0b0b0 42%,#787878 68%,#4a4a4a 90%,#383838 100%);"></div>
<div class="b" style="left:585.00px;top:79.40px;width:14.00px;height:0.90px;background:#454545;"></div>
<div class="b" style="left:0.00px;top:574.70px;width:26.00px;height:1.30px;background:#0c0c0c;"></div>
<div class="b" style="left:26.00px;top:574.70px;width:183.00px;height:1.30px;background:#e8e8e8;"></div>
<div class="b" style="left:209.00px;top:574.70px;width:302.00px;height:1.30px;background:#151515;"></div>
</div>
</body></html>
